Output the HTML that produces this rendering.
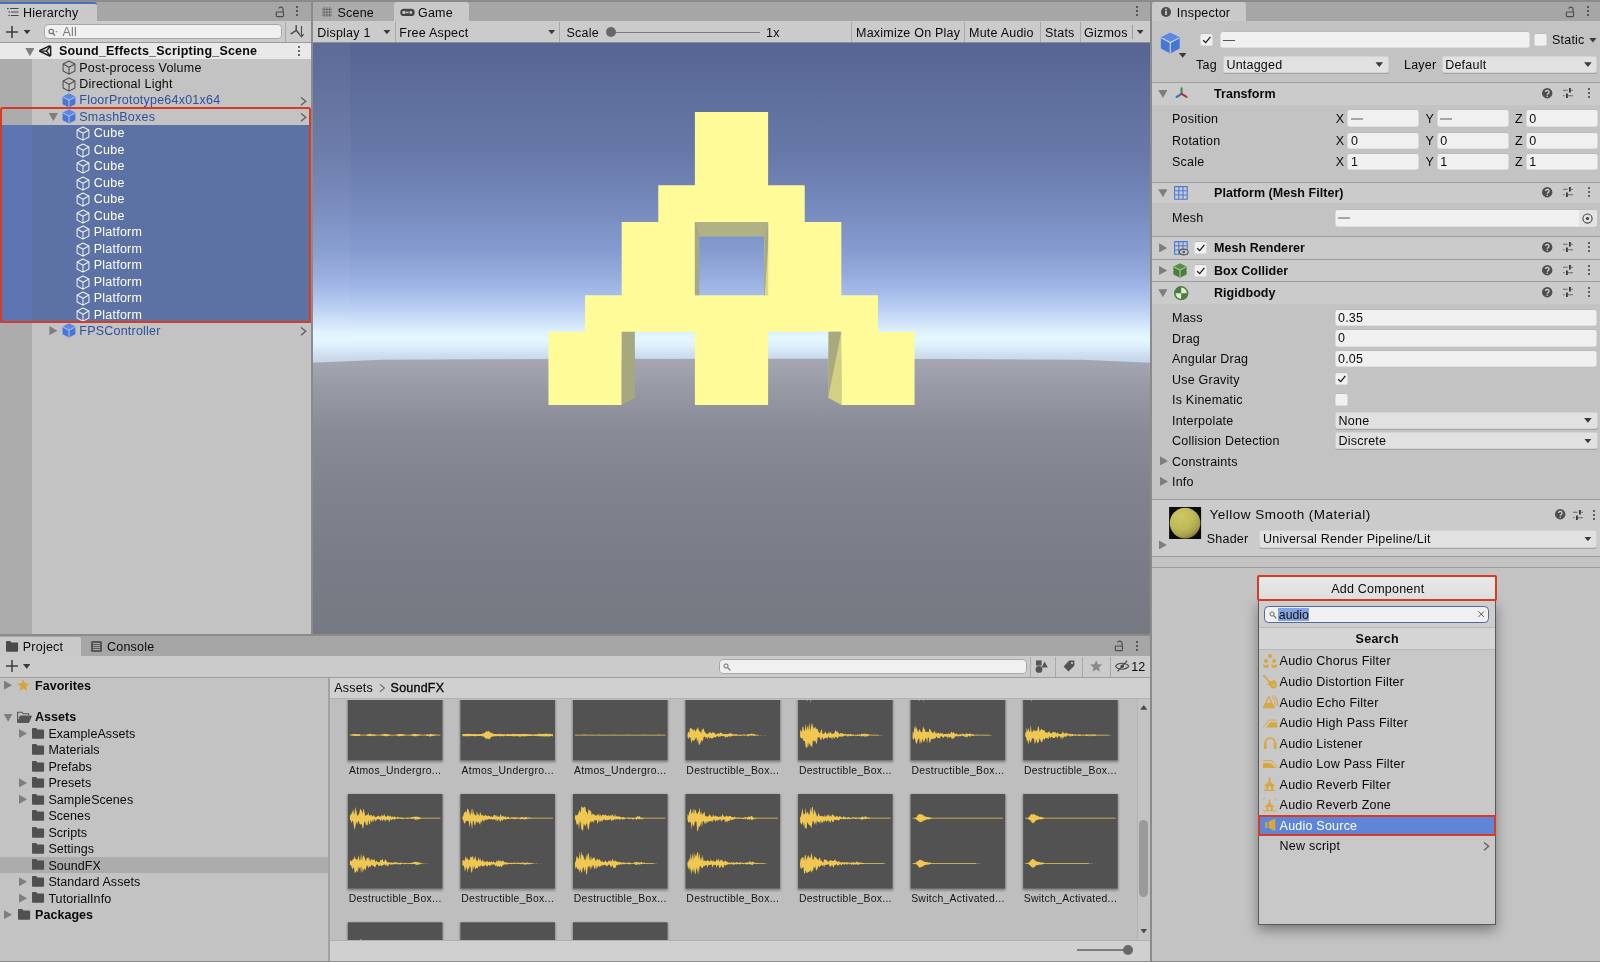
<!DOCTYPE html><html><head><meta charset="utf-8"><title>Unity</title><style>

*{box-sizing:border-box;margin:0;padding:0}
html,body{width:1600px;height:962px;overflow:hidden;background:#8b8b8b}
body{font-family:"Liberation Sans",sans-serif;font-size:12.5px;letter-spacing:.22px;color:#0a0a0a;position:relative}
.a{position:absolute}
.t{position:absolute;white-space:nowrap;line-height:16px;height:16px}
.b{font-weight:700}
.w{color:#fff}
.pf{color:#2f4f9e}
.tabbar{position:absolute;background:#a6a6a6}
.tab{position:absolute;background:#c9c9c9}
.tool{position:absolute;background:#cbcbcb}
.sep{position:absolute;width:1px;background:#a9a9a9}
.hl{position:absolute;height:1px;background:#9c9c9c}
.fld{position:absolute;background:#f0f0f0;border-radius:3px;box-shadow:inset 0 1px 0 #bcbcbc,inset 0 0 0 .6px #cdcdcd}
.dd{position:absolute;background:#e1e1e1;border-radius:3px;box-shadow:0 1px 0 #a4a4a4,inset 0 0 0 .6px #c6c6c6}
.cb{position:absolute;width:13.2px;height:13.2px;background:#f0f0f0;border-radius:2.5px;box-shadow:inset 0 1px 0 #bcbcbc,inset 0 0 0 .6px #cdcdcd}
.arr{position:absolute;width:7.6px;height:4.8px;margin:-.3px 0 0 .1px;background:#3a3a38;clip-path:polygon(0 0,100% 0,50% 100%)}
.tri-d{position:absolute;width:9.2px;height:8.1px;background:#7e7e7e;clip-path:polygon(0 0,100% 0,50% 100%)}
.tri-r{position:absolute;width:8.1px;height:9.2px;background:#7e7e7e;clip-path:polygon(0 0,100% 50%,0 100%)}
svg{position:absolute;overflow:visible}

</style></head><body><div id="root" style="position:absolute;left:0;top:0;width:1600px;height:962px;will-change:transform">
<!-- hierarchy -->
<div class="a" style="left:0;top:2px;width:311px;height:632px;background:#c3c3c3"></div>
<div class="tabbar" style="left:0;top:2px;width:311px;height:19px"></div>
<div class="tab" style="left:0;top:2px;width:97px;height:19px;border-top:2px solid #4a6fc0;border-radius:0 3px 0 0"></div>
<svg style="left:7px;top:7px" width="12" height="10" viewBox="0 0 12 10"><g stroke="#4a4a4a" stroke-width="1.1"><path d="M3 1.5H11.5M3.8 5H11.5M3.8 8.5H11.5"/></g><g fill="#4a4a4a"><rect x="0" y=".9" width="1.6" height="1.3"/><rect x="1.4" y="4.4" width="1.4" height="1.2"/><rect x="1.4" y="7.9" width="1.4" height="1.2"/></g></svg>
<div class="t " style="left:23px;top:4.8px;">Hierarchy</div>
<svg style="left:274.5px;top:4.5px" width="10" height="13" viewBox="0 0 10 13"><rect x="1.3" y="7" width="7.2" height="4.6" rx=".9" fill="none" stroke="#4c4c4c" stroke-width="1.15"/><path d="M8.1 7V4.4a2.3 2.3 0 0 0 -4.4 -.9" fill="none" stroke="#4c4c4c" stroke-width="1.15"/></svg>
<svg style="left:295.3px;top:4.300000000000001px" width="4" height="14" viewBox="-2 -7 4 14"><circle cx="0" cy="-3.95" r="1.02" fill="#3c3c3c"/><circle cx="0" cy="0" r="1.02" fill="#3c3c3c"/><circle cx="0" cy="3.95" r="1.02" fill="#3c3c3c"/></svg>
<div class="tool" style="left:0;top:21px;width:311px;height:21.5px"></div>
<div class="hl" style="left:0;top:42px;width:311px;background:#9a9a9a"></div>
<svg style="left:6px;top:26px" width="12" height="12" viewBox="0 0 12 12"><path d="M6 0V12M0 6H12" stroke="#3f3f3f" stroke-width="1.6"/></svg>
<div class="arr" style="left:23.2px;top:29.8px"></div>
<div class="fld" style="left:43.6px;top:23.7px;width:238px;height:15.8px;border-radius:4.5px;box-shadow:inset 0 0 0 1px #a8a8a8"></div>
<svg style="left:48px;top:27.5px" width="10" height="9" viewBox="0 0 10 9"><circle cx="3.2" cy="3.4" r="2.2" fill="none" stroke="#6a6a6a" stroke-width="1.1"/><path d="M4.8 5 L7 7.6" stroke="#6a6a6a" stroke-width="1.2"/><path d="M7.3 3.2h2.2l-1.1 1.3z" fill="#6a6a6a"/></svg>
<div class="t " style="left:62.5px;top:24.2px;color:#7c7c7c">All</div>
<div class="sep" style="left:285px;top:22px;height:20px"></div>
<svg style="left:290px;top:25px" width="15" height="13" viewBox="0 0 15 13"><path d="M6.2 .8V5.2M6 5.6 L1.2 8.6M6.4 5.4 L9 8.8" stroke="#4a4a4a" stroke-width="1.5" fill="none" stroke-linecap="round"/><path d="M11.5 1V11.6M9.2 9 L11.5 11.8 L13.8 9" stroke="#4a4a4a" stroke-width="1.1" fill="none"/></svg>
<div class="a" style="left:0;top:59.07px;width:32px;height:574.93px;background:#acacac"></div>
<div class="a" style="left:0;top:43px;width:311px;height:16.3px;background:#e9e9e9"></div>
<div class="tri-d" style="left:25.30px;top:48.05px"></div>
<svg style="left:39.3px;top:45.235px" width="13" height="12" viewBox="0 0 13 12"><path d="M10.6 .9 L11.6 1.6 L11.7 10.3 L10.7 11 L.9 6.4 L.9 5.5 Z" fill="none" stroke="#1d1d1d" stroke-width="1.45" stroke-linejoin="round"/><path d="M7.4 6 L11 1.5 M7.4 6 L11 10.6 M7.4 6 L1.4 6" stroke="#1d1d1d" stroke-width="1.25"/></svg>
<div class="t b" style="left:59px;top:43.23500000000001px;letter-spacing:.2px">Sound_Effects_Scripting_Scene</div>
<svg style="left:297px;top:44.135px" width="4" height="14" viewBox="-2 -7 4 14"><circle cx="0" cy="-3.95" r="1.02" fill="#3a3a3a"/><circle cx="0" cy="0" r="1.02" fill="#3a3a3a"/><circle cx="0" cy="3.95" r="1.02" fill="#3a3a3a"/></svg>
<div class="a" style="left:0;top:124.94999999999999px;width:311px;height:197.64000000000004px;background:#5c72a4"></div>
<div class="a" style="left:0;top:124.94999999999999px;width:32px;height:197.64000000000004px;background:#5d75b2"></div>
<svg style="left:61.6px;top:60.40500000000001px" width="14" height="15" viewBox="0 0 14 15"><path d="M7 1 L12.9 4 V11 L7 14.1 L1.1 11 V4 Z M1.1 4 L7 7.2 L12.9 4 M7 7.2 V14.1" fill="none" stroke="#4e4e4e" stroke-width="1.05" stroke-linejoin="round"/></svg>
<div class="t " style="left:79.3px;top:59.50500000000001px;">Post-process Volume</div>
<svg style="left:61.6px;top:76.87499999999999px" width="14" height="15" viewBox="0 0 14 15"><path d="M7 1 L12.9 4 V11 L7 14.1 L1.1 11 V4 Z M1.1 4 L7 7.2 L12.9 4 M7 7.2 V14.1" fill="none" stroke="#4e4e4e" stroke-width="1.05" stroke-linejoin="round"/></svg>
<div class="t " style="left:79.3px;top:75.975px;">Directional Light</div>
<svg style="left:61.6px;top:92.645px" width="14" height="15.00" viewBox="0 0 14 15"><path d="M7 .5 L13.4 3.8 V11.2 L7 14.6 L.6 11.2 V3.8 Z" fill="#4876d6"/><path d="M7 .5 L13.4 3.8 L7 7.2 L.6 3.8 Z" fill="#5a88e4"/><path d="M.9 4 L7 7.2 L13.1 4 M7 7.2 V14.2" fill="none" stroke="#dfe7fa" stroke-width=".75" opacity=".9"/></svg>
<div class="t pf" style="left:79.3px;top:92.445px;">FloorPrototype64x01x64</div>
<svg style="left:300.9px;top:96.845px" width="5.2" height="8.6" viewBox="0 -4.3 5.2 8.6"><path d="M0 -3.9 L4.8 0 L0 3.9" fill="none" stroke="#5e5e5e" stroke-width="1.3"/></svg>
<svg style="left:61.6px;top:109.115px" width="14" height="15.00" viewBox="0 0 14 15"><path d="M7 .5 L13.4 3.8 V11.2 L7 14.6 L.6 11.2 V3.8 Z" fill="#4876d6"/><path d="M7 .5 L13.4 3.8 L7 7.2 L.6 3.8 Z" fill="#5a88e4"/><path d="M.9 4 L7 7.2 L13.1 4 M7 7.2 V14.2" fill="none" stroke="#dfe7fa" stroke-width=".75" opacity=".9"/></svg>
<div class="t pf" style="left:79.3px;top:108.91499999999999px;">SmashBoxes</div>
<svg style="left:300.9px;top:113.315px" width="5.2" height="8.6" viewBox="0 -4.3 5.2 8.6"><path d="M0 -3.9 L4.8 0 L0 3.9" fill="none" stroke="#5e5e5e" stroke-width="1.3"/></svg>
<div class="tri-d" style="left:48.80px;top:112.96px"></div>
<svg style="left:76.1px;top:126.285px" width="14" height="15" viewBox="0 0 14 15"><path d="M7 1 L12.9 4 V11 L7 14.1 L1.1 11 V4 Z M1.1 4 L7 7.2 L12.9 4 M7 7.2 V14.1" fill="none" stroke="#eef0f6" stroke-width="1.05" stroke-linejoin="round"/></svg>
<div class="t w" style="left:93.8px;top:125.385px;">Cube</div>
<svg style="left:76.1px;top:142.75499999999997px" width="14" height="15" viewBox="0 0 14 15"><path d="M7 1 L12.9 4 V11 L7 14.1 L1.1 11 V4 Z M1.1 4 L7 7.2 L12.9 4 M7 7.2 V14.1" fill="none" stroke="#eef0f6" stroke-width="1.05" stroke-linejoin="round"/></svg>
<div class="t w" style="left:93.8px;top:141.85499999999996px;">Cube</div>
<svg style="left:76.1px;top:159.225px" width="14" height="15" viewBox="0 0 14 15"><path d="M7 1 L12.9 4 V11 L7 14.1 L1.1 11 V4 Z M1.1 4 L7 7.2 L12.9 4 M7 7.2 V14.1" fill="none" stroke="#eef0f6" stroke-width="1.05" stroke-linejoin="round"/></svg>
<div class="t w" style="left:93.8px;top:158.325px;">Cube</div>
<svg style="left:76.1px;top:175.69499999999996px" width="14" height="15" viewBox="0 0 14 15"><path d="M7 1 L12.9 4 V11 L7 14.1 L1.1 11 V4 Z M1.1 4 L7 7.2 L12.9 4 M7 7.2 V14.1" fill="none" stroke="#eef0f6" stroke-width="1.05" stroke-linejoin="round"/></svg>
<div class="t w" style="left:93.8px;top:174.79499999999996px;">Cube</div>
<svg style="left:76.1px;top:192.165px" width="14" height="15" viewBox="0 0 14 15"><path d="M7 1 L12.9 4 V11 L7 14.1 L1.1 11 V4 Z M1.1 4 L7 7.2 L12.9 4 M7 7.2 V14.1" fill="none" stroke="#eef0f6" stroke-width="1.05" stroke-linejoin="round"/></svg>
<div class="t w" style="left:93.8px;top:191.265px;">Cube</div>
<svg style="left:76.1px;top:208.63499999999996px" width="14" height="15" viewBox="0 0 14 15"><path d="M7 1 L12.9 4 V11 L7 14.1 L1.1 11 V4 Z M1.1 4 L7 7.2 L12.9 4 M7 7.2 V14.1" fill="none" stroke="#eef0f6" stroke-width="1.05" stroke-linejoin="round"/></svg>
<div class="t w" style="left:93.8px;top:207.73499999999996px;">Cube</div>
<svg style="left:76.1px;top:225.105px" width="14" height="15" viewBox="0 0 14 15"><path d="M7 1 L12.9 4 V11 L7 14.1 L1.1 11 V4 Z M1.1 4 L7 7.2 L12.9 4 M7 7.2 V14.1" fill="none" stroke="#eef0f6" stroke-width="1.05" stroke-linejoin="round"/></svg>
<div class="t w" style="left:93.8px;top:224.20499999999998px;">Platform</div>
<svg style="left:76.1px;top:241.57499999999996px" width="14" height="15" viewBox="0 0 14 15"><path d="M7 1 L12.9 4 V11 L7 14.1 L1.1 11 V4 Z M1.1 4 L7 7.2 L12.9 4 M7 7.2 V14.1" fill="none" stroke="#eef0f6" stroke-width="1.05" stroke-linejoin="round"/></svg>
<div class="t w" style="left:93.8px;top:240.67499999999995px;">Platform</div>
<svg style="left:76.1px;top:258.045px" width="14" height="15" viewBox="0 0 14 15"><path d="M7 1 L12.9 4 V11 L7 14.1 L1.1 11 V4 Z M1.1 4 L7 7.2 L12.9 4 M7 7.2 V14.1" fill="none" stroke="#eef0f6" stroke-width="1.05" stroke-linejoin="round"/></svg>
<div class="t w" style="left:93.8px;top:257.145px;">Platform</div>
<svg style="left:76.1px;top:274.51500000000004px" width="14" height="15" viewBox="0 0 14 15"><path d="M7 1 L12.9 4 V11 L7 14.1 L1.1 11 V4 Z M1.1 4 L7 7.2 L12.9 4 M7 7.2 V14.1" fill="none" stroke="#eef0f6" stroke-width="1.05" stroke-linejoin="round"/></svg>
<div class="t w" style="left:93.8px;top:273.615px;">Platform</div>
<svg style="left:76.1px;top:290.985px" width="14" height="15" viewBox="0 0 14 15"><path d="M7 1 L12.9 4 V11 L7 14.1 L1.1 11 V4 Z M1.1 4 L7 7.2 L12.9 4 M7 7.2 V14.1" fill="none" stroke="#eef0f6" stroke-width="1.05" stroke-linejoin="round"/></svg>
<div class="t w" style="left:93.8px;top:290.085px;">Platform</div>
<svg style="left:76.1px;top:307.45500000000004px" width="14" height="15" viewBox="0 0 14 15"><path d="M7 1 L12.9 4 V11 L7 14.1 L1.1 11 V4 Z M1.1 4 L7 7.2 L12.9 4 M7 7.2 V14.1" fill="none" stroke="#eef0f6" stroke-width="1.05" stroke-linejoin="round"/></svg>
<div class="t w" style="left:93.8px;top:306.555px;">Platform</div>
<svg style="left:61.6px;top:323.225px" width="14" height="15.00" viewBox="0 0 14 15"><path d="M7 .5 L13.4 3.8 V11.2 L7 14.6 L.6 11.2 V3.8 Z" fill="#4876d6"/><path d="M7 .5 L13.4 3.8 L7 7.2 L.6 3.8 Z" fill="#5a88e4"/><path d="M.9 4 L7 7.2 L13.1 4 M7 7.2 V14.2" fill="none" stroke="#dfe7fa" stroke-width=".75" opacity=".9"/></svg>
<div class="t pf" style="left:79.3px;top:323.02500000000003px;">FPSController</div>
<svg style="left:300.9px;top:327.425px" width="5.2" height="8.6" viewBox="0 -4.3 5.2 8.6"><path d="M0 -3.9 L4.8 0 L0 3.9" fill="none" stroke="#5e5e5e" stroke-width="1.3"/></svg>
<div class="tri-r" style="left:49.35px;top:326.12px"></div>
<div class="a" style="left:-.3px;top:106.7px;width:311.2px;height:216.6px;border:2.7px solid #d93a22;border-radius:2.5px"></div>
<!-- game -->
<div class="tabbar" style="left:313px;top:2px;width:837px;height:19px"></div>
<div class="a" style="left:313px;top:2px;width:81px;height:19px;background:#ababab;border-radius:3px 3px 0 0"></div>
<div class="tab" style="left:393.8px;top:2px;width:75px;height:19px;border-radius:3px 3px 0 0"></div>
<svg style="left:321.6px;top:7px" width="10" height="10" viewBox="0 0 10 10"><path d="M2.1 0V10M4.9 0V10M7.7 0V10M0 2.4H10M0 5.2H10M0 8H10" stroke="#5c5c5c" stroke-width=".75" fill="none"/></svg>
<div class="t " style="left:337.5px;top:4.8px;">Scene</div>
<svg style="left:400px;top:8px" width="15" height="9" viewBox="0 0 15 9"><rect x=".3" y=".8" width="14.4" height="7.2" rx="3.6" fill="#444"/><circle cx="4" cy="4.4" r="1.7" fill="#c9c9c9"/><circle cx="10.8" cy="4.4" r="1.4" fill="#c9c9c9"/><rect x="6.2" y="3.6" width="2.4" height="1.6" fill="#c9c9c9"/></svg>
<div class="t " style="left:418px;top:4.8px;">Game</div>
<svg style="left:1134.5px;top:4.300000000000001px" width="4" height="14" viewBox="-2 -7 4 14"><circle cx="0" cy="-3.95" r="1.02" fill="#3c3c3c"/><circle cx="0" cy="0" r="1.02" fill="#3c3c3c"/><circle cx="0" cy="3.95" r="1.02" fill="#3c3c3c"/></svg>
<div class="tool" style="left:313px;top:21px;width:837px;height:21.5px"></div>
<div class="hl" style="left:313px;top:42px;width:837px;background:#8f8f8f"></div>
<div class="t " style="left:317.2px;top:24.499999999999996px;">Display 1</div>
<div class="arr" style="left:383px;top:29.8px"></div>
<div class="sep" style="left:395px;top:22px;height:20px"></div>
<div class="t " style="left:399.3px;top:24.499999999999996px;">Free Aspect</div>
<div class="arr" style="left:547.8px;top:29.8px"></div>
<div class="sep" style="left:559px;top:22px;height:20px"></div>
<div class="t " style="left:566.5px;top:24.499999999999996px;">Scale</div>
<div class="a" style="left:611px;top:31.6px;width:149px;height:1.4px;background:#7a7a7a"></div>
<div class="a" style="left:606px;top:27.3px;width:10px;height:10px;border-radius:5px;background:#686868"></div>
<div class="t " style="left:766px;top:24.499999999999996px;">1x</div>
<div class="sep" style="left:851px;top:22px;height:20px"></div>
<div class="sep" style="left:964px;top:22px;height:20px"></div>
<div class="sep" style="left:1040px;top:22px;height:20px"></div>
<div class="sep" style="left:1079.5px;top:22px;height:20px"></div>
<div class="t " style="left:856px;top:24.499999999999996px;">Maximize On Play</div>
<div class="t " style="left:969px;top:24.499999999999996px;">Mute Audio</div>
<div class="t " style="left:1045px;top:24.499999999999996px;">Stats</div>
<div class="t " style="left:1084px;top:24.499999999999996px;">Gizmos</div>
<div class="sep" style="left:1131.5px;top:25px;height:14px;background:#9a9a9a"></div>
<div class="arr" style="left:1136.3px;top:29.8px"></div>
<svg style="left:313px;top:43px" width="837" height="591" viewBox="313 43 837 591"><defs><linearGradient id="sky" x1="0" y1="0" x2="0" y2="1"><stop offset="0.0000" stop-color="#566593"/><stop offset="0.1776" stop-color="#5f6f9e"/><stop offset="0.3489" stop-color="#6879a9"/><stop offset="0.5234" stop-color="#778bbe"/><stop offset="0.6417" stop-color="#859bcf"/><stop offset="0.7227" stop-color="#96abdd"/><stop offset="0.7757" stop-color="#a5bbe9"/><stop offset="0.8255" stop-color="#bacef3"/><stop offset="0.8692" stop-color="#cfe2fa"/><stop offset="0.9003" stop-color="#def2fe"/><stop offset="0.9221" stop-color="#e4f8ff"/><stop offset="0.9470" stop-color="#dceefa"/><stop offset="0.9720" stop-color="#cddef0"/><stop offset="1.0000" stop-color="#c2d2e5"/></linearGradient><linearGradient id="gnd" x1="0" y1="0" x2="0" y2="1"><stop offset="0.000" stop-color="#a5a7b2"/><stop offset="0.117" stop-color="#9698a3"/><stop offset="0.262" stop-color="#898c96"/><stop offset="0.479" stop-color="#80838d"/><stop offset="0.732" stop-color="#7a7d87"/><stop offset="1.000" stop-color="#767982"/></linearGradient></defs><rect x="313" y="43" width="837" height="321" fill="url(#sky)"/><path d="M313 362.7 L382 359.7 Q731.5 357.6 1082 359.7 L1150 362.7 V634 H313 Z" fill="url(#gnd)"/><rect x="313" y="43" width="37.5" height="318" fill="#fff" opacity=".04"/><path d="M694.89 112.1 H768.11 V185.32 H804.72 V221.93 H841.33 V295.15 H877.94 V331.76 H914.55 V404.98 H841.33 V331.76 H768.11 V404.98 H694.89 V331.76 H621.67 V404.98 H548.45 V331.76 H585.06 V295.15 H621.67 V221.93 H658.28 V185.32 H694.89 Z M694.89 221.93 V295.15 H768.11 V221.93 Z" fill="#fffb98" fill-rule="evenodd"/><path d="M694.89 221.93 H768.11 L764.51 236.53 H699.29 Z" fill="#b0b184"/><path d="M694.89 221.93 L699.29 236.53 V295.15 H694.89 Z" fill="#a7a984"/><path d="M768.11 221.93 L764.51 236.53 L763.91 295.15 H768.11 Z" fill="#d9d78c"/><path d="M764.51 236.53 L768.11 221.93 V245.93 L764.71 295.15 H763.91 Z" fill="#a7a984"/><path d="M621.67 331.76 H634.87 V397.98 L621.67 404.98 Z" fill="#a6a880"/><path d="M841.33 331.76 H828.5300000000001 L828.13 397.78000000000003 L841.33 404.98 Z" fill="#d3d084"/><path d="M828.5300000000001 331.76 H841.33 L828.13 397.78000000000003 Z" fill="#a8a980"/></svg>
<!-- inspector -->
<div class="a" style="left:1152.3px;top:2px;width:447.70000000000005px;height:958.5px;background:#c3c3c3"></div>
<div class="tabbar" style="left:1152.3px;top:2px;width:447.70000000000005px;height:19px"></div>
<div class="tab" style="left:1152.3px;top:2px;width:94px;height:19px;border-radius:3px 3px 0 0"></div>
<svg style="left:1161px;top:7px" width="10" height="10" viewBox="0 0 10 10"><circle cx="5" cy="5" r="5" fill="#4b4b4b"/><rect x="4.2" y="4" width="1.7" height="4" fill="#d0d0d0"/><rect x="4.2" y="1.7" width="1.7" height="1.6" fill="#d0d0d0"/></svg>
<div class="t " style="left:1176.8px;top:4.8px;">Inspector</div>
<svg style="left:1565px;top:4.5px" width="10" height="13" viewBox="0 0 10 13"><rect x="1.3" y="7" width="7.2" height="4.6" rx=".9" fill="none" stroke="#4c4c4c" stroke-width="1.15"/><path d="M8.1 7V4.4a2.3 2.3 0 0 0 -4.4 -.9" fill="none" stroke="#4c4c4c" stroke-width="1.15"/></svg>
<svg style="left:1586px;top:4.300000000000001px" width="4" height="14" viewBox="-2 -7 4 14"><circle cx="0" cy="-3.95" r="1.02" fill="#3c3c3c"/><circle cx="0" cy="0" r="1.02" fill="#3c3c3c"/><circle cx="0" cy="3.95" r="1.02" fill="#3c3c3c"/></svg>
<svg style="left:1159.6px;top:32.2px" width="20.6" height="22.07" viewBox="0 0 14 15"><path d="M7 .5 L13.4 3.8 V11.2 L7 14.6 L.6 11.2 V3.8 Z" fill="#4876d6"/><path d="M7 .5 L13.4 3.8 L7 7.2 L.6 3.8 Z" fill="#5a88e4"/><path d="M.9 4 L7 7.2 L13.1 4 M7 7.2 V14.2" fill="none" stroke="#dfe7fa" stroke-width=".75" opacity=".9"/></svg>
<div class="arr" style="left:1178.8px;top:53.2px"></div>
<div class="cb" style="left:1199.6px;top:33.3px"></div>
<svg style="left:1199.6px;top:33.3px" width="13.5" height="13.5" viewBox="0 0 13.5 13.5"><path d="M3.2 7.2 L5.7 9.6 L10.4 3.8" fill="none" stroke="#1c1c1c" stroke-width="1.3"/></svg>
<div class="fld" style="left:1220px;top:31.4px;width:309.5px;height:17px"></div>
<div class="a" style="left:1223px;top:40.4px;width:12px;height:1.1px;background:#555"></div>
<div class="cb" style="left:1534px;top:33.3px"></div>
<div class="t " style="left:1552px;top:32.400000000000006px;">Static</div>
<div class="arr" style="left:1589px;top:38px"></div>
<div class="t " style="left:1196px;top:57.10000000000001px;">Tag</div>
<div class="dd" style="left:1222.5px;top:56.2px;width:166px;height:17.2px"></div>
<div class="t " style="left:1226.4px;top:56.900000000000006px;">Untagged</div>
<div class="arr" style="left:1375.4px;top:62.6px"></div>
<div class="t " style="left:1404px;top:57.10000000000001px;">Layer</div>
<div class="dd" style="left:1441.6px;top:56.2px;width:155.6px;height:17.2px"></div>
<div class="t " style="left:1445.2px;top:56.900000000000006px;">Default</div>
<div class="arr" style="left:1584px;top:62.6px"></div>
<div class="hl" style="left:1152.3px;top:81.8px;width:447.70000000000005px;background:#9d9d9d"></div>
<div class="a" style="left:1152.3px;top:82.8px;width:447.70000000000005px;height:21.799999999999997px;background:#cbcbcb"></div>
<div class="tri-d" style="left:1158.30px;top:89.90px"></div>
<svg style="left:1174.6px;top:87.19999999999999px" width="13" height="12" viewBox="0 0 13 12"><path d="M6.6 6.8V1.4" stroke="#3a9140" stroke-width="2.1" stroke-linecap="round"/><path d="M6.6 6.8 L1.6 10" stroke="#3f6fd8" stroke-width="2.1" stroke-linecap="round"/><path d="M6.6 6.8 L11.6 9.8" stroke="#b92f28" stroke-width="2.1" stroke-linecap="round"/></svg>
<div class="t b" style="left:1214px;top:86.04999999999998px;letter-spacing:.05px">Transform</div>
<svg style="left:1542.3999999999999px;top:87.84999999999998px" width="10.4" height="10.4" viewBox="0 0 10.4 10.4"><circle cx="5.2" cy="5.2" r="5.2" fill="#4e4e4e"/><path d="M3.5 4.1a1.75 1.75 0 1 1 2.7 1.45c-.6.4-.9.6-.9 1.3" fill="none" stroke="#d2d2d2" stroke-width="1.35"/><circle cx="5.25" cy="8.3" r=".8" fill="#d2d2d2"/></svg>
<svg style="left:1563.2px;top:87.94999999999999px" width="10" height="10" viewBox="0 0 10 10"><path d="M0 2.3H4.6M8.2 2.3H10M0 7.7H1.6M4.8 7.7H10" stroke="#6a6a6a" stroke-width="1.1"/><path d="M6.9 0V4.6M3.9 5.6V9.9" stroke="#2e2e2e" stroke-width="1.7"/></svg>
<svg style="left:1587px;top:86.04999999999998px" width="4" height="14" viewBox="-2 -7 4 14"><circle cx="0" cy="-3.95" r="1.02" fill="#3c3c3c"/><circle cx="0" cy="0" r="1.02" fill="#3c3c3c"/><circle cx="0" cy="3.95" r="1.02" fill="#3c3c3c"/></svg>
<div class="t " style="left:1172px;top:110.5px;">Position</div>
<div class="t " style="left:1335.8px;top:110.5px;">X</div>
<div class="fld" style="left:1347.3px;top:109.19999999999999px;width:72px;height:17.8px"></div>
<div class="a" style="left:1350.7px;top:117.89999999999999px;width:12px;height:1.7px;background:#a6a6a6"></div>
<div class="t " style="left:1425.6px;top:110.5px;">Y</div>
<div class="fld" style="left:1436.6px;top:109.19999999999999px;width:72px;height:17.8px"></div>
<div class="a" style="left:1440.0px;top:117.89999999999999px;width:12px;height:1.7px;background:#a6a6a6"></div>
<div class="t " style="left:1515px;top:110.5px;">Z</div>
<div class="fld" style="left:1525.6px;top:109.19999999999999px;width:72px;height:17.8px"></div>
<div class="t " style="left:1529.1999999999998px;top:110.5px;">0</div>
<div class="t " style="left:1172px;top:132.99999999999997px;">Rotation</div>
<div class="t " style="left:1335.8px;top:132.99999999999997px;">X</div>
<div class="fld" style="left:1347.3px;top:131.7px;width:72px;height:17.8px"></div>
<div class="t " style="left:1350.8999999999999px;top:132.99999999999997px;">0</div>
<div class="t " style="left:1425.6px;top:132.99999999999997px;">Y</div>
<div class="fld" style="left:1436.6px;top:131.7px;width:72px;height:17.8px"></div>
<div class="t " style="left:1440.1999999999998px;top:132.99999999999997px;">0</div>
<div class="t " style="left:1515px;top:132.99999999999997px;">Z</div>
<div class="fld" style="left:1525.6px;top:131.7px;width:72px;height:17.8px"></div>
<div class="t " style="left:1529.1999999999998px;top:132.99999999999997px;">0</div>
<div class="t " style="left:1172px;top:153.79999999999998px;">Scale</div>
<div class="t " style="left:1335.8px;top:153.79999999999998px;">X</div>
<div class="fld" style="left:1347.3px;top:152.5px;width:72px;height:17.8px"></div>
<div class="t " style="left:1350.8999999999999px;top:153.79999999999998px;">1</div>
<div class="t " style="left:1425.6px;top:153.79999999999998px;">Y</div>
<div class="fld" style="left:1436.6px;top:152.5px;width:72px;height:17.8px"></div>
<div class="t " style="left:1440.1999999999998px;top:153.79999999999998px;">1</div>
<div class="t " style="left:1515px;top:153.79999999999998px;">Z</div>
<div class="fld" style="left:1525.6px;top:152.5px;width:72px;height:17.8px"></div>
<div class="t " style="left:1529.1999999999998px;top:153.79999999999998px;">1</div>
<div class="hl" style="left:1152.3px;top:181.9px;width:447.70000000000005px;background:#9d9d9d"></div>
<div class="a" style="left:1152.3px;top:182.9px;width:447.70000000000005px;height:20.299999999999983px;background:#cbcbcb"></div>
<div class="tri-d" style="left:1158.30px;top:189.25px"></div>
<svg style="left:1173.5px;top:186.2px" width="14" height="14" viewBox="0 0 14 14"><path d="M.6 .6H13.2V13.2H.6ZM4.8 .6V13.2M9 .6V13.2M.6 4.8H13.2M.6 9H13.2" fill="none" stroke="#4a7ad6" stroke-width="1.1"/></svg>
<div class="t b" style="left:1214px;top:185.4px;letter-spacing:.05px">Platform (Mesh Filter)</div>
<svg style="left:1542.3999999999999px;top:187.20000000000005px" width="10.4" height="10.4" viewBox="0 0 10.4 10.4"><circle cx="5.2" cy="5.2" r="5.2" fill="#4e4e4e"/><path d="M3.5 4.1a1.75 1.75 0 1 1 2.7 1.45c-.6.4-.9.6-.9 1.3" fill="none" stroke="#d2d2d2" stroke-width="1.35"/><circle cx="5.25" cy="8.3" r=".8" fill="#d2d2d2"/></svg>
<svg style="left:1563.2px;top:187.3px" width="10" height="10" viewBox="0 0 10 10"><path d="M0 2.3H4.6M8.2 2.3H10M0 7.7H1.6M4.8 7.7H10" stroke="#6a6a6a" stroke-width="1.1"/><path d="M6.9 0V4.6M3.9 5.6V9.9" stroke="#2e2e2e" stroke-width="1.7"/></svg>
<svg style="left:1587px;top:185.40000000000003px" width="4" height="14" viewBox="-2 -7 4 14"><circle cx="0" cy="-3.95" r="1.02" fill="#3c3c3c"/><circle cx="0" cy="0" r="1.02" fill="#3c3c3c"/><circle cx="0" cy="3.95" r="1.02" fill="#3c3c3c"/></svg>
<div class="t " style="left:1172px;top:210.39999999999998px;">Mesh</div>
<div class="fld" style="left:1334.8px;top:209.1px;width:262.4px;height:17.5px"></div>
<div class="a" style="left:1579.4px;top:210.1px;width:17.2px;height:15.5px;background:#e3e3e3;border-radius:0 2px 2px 0"></div>
<div class="a" style="left:1338px;top:217.4px;width:12px;height:1.7px;background:#a6a6a6"></div>
<svg style="left:1582.4px;top:212.6px" width="11" height="11" viewBox="0 0 11 11"><circle cx="5.5" cy="5.5" r="4.6" fill="none" stroke="#3e3e3e" stroke-width="1.05"/><circle cx="5.5" cy="5.5" r="1.6" fill="#3e3e3e"/></svg>
<div class="hl" style="left:1152.3px;top:235.9px;width:447.70000000000005px;background:#9d9d9d"></div>
<div class="a" style="left:1152.3px;top:236.9px;width:447.70000000000005px;height:22.099999999999994px;background:#cbcbcb"></div>
<div class="tri-r" style="left:1159.15px;top:243.30px"></div>
<svg style="left:1173.5px;top:240.79999999999998px" width="14" height="14" viewBox="0 0 14 14"><path d="M.6 .6H13.2V13.2H.6ZM4.8 .6V13.2M9 .6V13.2M.6 4.8H13.2M.6 9H13.2" fill="none" stroke="#4a7ad6" stroke-width="1.1"/><ellipse cx="9.8" cy="11" rx="4.4" ry="2.9" fill="#cbcbcb" stroke="#555" stroke-width="1.1"/><circle cx="9.8" cy="11" r="1.3" fill="#555"/></svg>
<div class="cb" style="left:1193.5px;top:241.1px"></div>
<svg style="left:1193.5px;top:241.1px" width="13.5" height="13.5" viewBox="0 0 13.5 13.5"><path d="M3.2 7.2 L5.7 9.6 L10.4 3.8" fill="none" stroke="#1c1c1c" stroke-width="1.3"/></svg>
<div class="t b" style="left:1214px;top:240.29999999999998px;letter-spacing:.05px">Mesh Renderer</div>
<svg style="left:1542.3999999999999px;top:242.10000000000002px" width="10.4" height="10.4" viewBox="0 0 10.4 10.4"><circle cx="5.2" cy="5.2" r="5.2" fill="#4e4e4e"/><path d="M3.5 4.1a1.75 1.75 0 1 1 2.7 1.45c-.6.4-.9.6-.9 1.3" fill="none" stroke="#d2d2d2" stroke-width="1.35"/><circle cx="5.25" cy="8.3" r=".8" fill="#d2d2d2"/></svg>
<svg style="left:1563.2px;top:242.2px" width="10" height="10" viewBox="0 0 10 10"><path d="M0 2.3H4.6M8.2 2.3H10M0 7.7H1.6M4.8 7.7H10" stroke="#6a6a6a" stroke-width="1.1"/><path d="M6.9 0V4.6M3.9 5.6V9.9" stroke="#2e2e2e" stroke-width="1.7"/></svg>
<svg style="left:1587px;top:240.3px" width="4" height="14" viewBox="-2 -7 4 14"><circle cx="0" cy="-3.95" r="1.02" fill="#3c3c3c"/><circle cx="0" cy="0" r="1.02" fill="#3c3c3c"/><circle cx="0" cy="3.95" r="1.02" fill="#3c3c3c"/></svg>
<div class="hl" style="left:1152.3px;top:258.5px;width:447.70000000000005px;background:#9d9d9d"></div>
<div class="a" style="left:1152.3px;top:259.5px;width:447.70000000000005px;height:22.100000000000023px;background:#cbcbcb"></div>
<div class="tri-r" style="left:1159.15px;top:265.90px"></div>
<svg style="left:1173.3px;top:263.0px" width="14" height="15" viewBox="0 0 14 15"><path d="M7 .4 L13.6 3.7 V11.4 L7 14.8 L.4 11.4 V3.7 Z" fill="#4b7e3d"/><path d="M7 .4 L13.6 3.7 L7 7.2 L.4 3.7 Z" fill="#5a8f4a"/><path d="M.8 3.9 L7 7.2 L13.2 3.9 M7 7.2 V14.4" fill="none" stroke="#dbe9d5" stroke-width=".8" opacity=".9"/></svg>
<div class="cb" style="left:1193.5px;top:263.70000000000005px"></div>
<svg style="left:1193.5px;top:263.70000000000005px" width="13.5" height="13.5" viewBox="0 0 13.5 13.5"><path d="M3.2 7.2 L5.7 9.6 L10.4 3.8" fill="none" stroke="#1c1c1c" stroke-width="1.3"/></svg>
<div class="t b" style="left:1214px;top:262.90000000000003px;letter-spacing:.05px">Box Collider</div>
<svg style="left:1542.3999999999999px;top:264.70000000000005px" width="10.4" height="10.4" viewBox="0 0 10.4 10.4"><circle cx="5.2" cy="5.2" r="5.2" fill="#4e4e4e"/><path d="M3.5 4.1a1.75 1.75 0 1 1 2.7 1.45c-.6.4-.9.6-.9 1.3" fill="none" stroke="#d2d2d2" stroke-width="1.35"/><circle cx="5.25" cy="8.3" r=".8" fill="#d2d2d2"/></svg>
<svg style="left:1563.2px;top:264.8px" width="10" height="10" viewBox="0 0 10 10"><path d="M0 2.3H4.6M8.2 2.3H10M0 7.7H1.6M4.8 7.7H10" stroke="#6a6a6a" stroke-width="1.1"/><path d="M6.9 0V4.6M3.9 5.6V9.9" stroke="#2e2e2e" stroke-width="1.7"/></svg>
<svg style="left:1587px;top:262.90000000000003px" width="4" height="14" viewBox="-2 -7 4 14"><circle cx="0" cy="-3.95" r="1.02" fill="#3c3c3c"/><circle cx="0" cy="0" r="1.02" fill="#3c3c3c"/><circle cx="0" cy="3.95" r="1.02" fill="#3c3c3c"/></svg>
<div class="hl" style="left:1152.3px;top:281.1px;width:447.70000000000005px;background:#9d9d9d"></div>
<div class="a" style="left:1152.3px;top:282.1px;width:447.70000000000005px;height:21.69999999999999px;background:#cbcbcb"></div>
<div class="tri-d" style="left:1158.30px;top:289.15px"></div>
<svg style="left:1173.6px;top:285.6px" width="14.4" height="14.4" viewBox="0 0 14.4 14.4"><circle cx="7.2" cy="7.2" r="6.4" fill="#e3ebdf" stroke="#4a7f3c" stroke-width="1.5"/><path d="M7.2 7.2 V.8 A6.4 6.4 0 0 0 .8 7.2 Z" fill="#4a7f3c"/><path d="M7.2 7.2 V13.6 A6.4 6.4 0 0 0 13.6 7.2 Z" fill="#4a7f3c"/></svg>
<div class="t b" style="left:1214px;top:285.30000000000007px;letter-spacing:.05px">Rigidbody</div>
<svg style="left:1542.3999999999999px;top:287.1000000000001px" width="10.4" height="10.4" viewBox="0 0 10.4 10.4"><circle cx="5.2" cy="5.2" r="5.2" fill="#4e4e4e"/><path d="M3.5 4.1a1.75 1.75 0 1 1 2.7 1.45c-.6.4-.9.6-.9 1.3" fill="none" stroke="#d2d2d2" stroke-width="1.35"/><circle cx="5.25" cy="8.3" r=".8" fill="#d2d2d2"/></svg>
<svg style="left:1563.2px;top:287.20000000000005px" width="10" height="10" viewBox="0 0 10 10"><path d="M0 2.3H4.6M8.2 2.3H10M0 7.7H1.6M4.8 7.7H10" stroke="#6a6a6a" stroke-width="1.1"/><path d="M6.9 0V4.6M3.9 5.6V9.9" stroke="#2e2e2e" stroke-width="1.7"/></svg>
<svg style="left:1587px;top:285.30000000000007px" width="4" height="14" viewBox="-2 -7 4 14"><circle cx="0" cy="-3.95" r="1.02" fill="#3c3c3c"/><circle cx="0" cy="0" r="1.02" fill="#3c3c3c"/><circle cx="0" cy="3.95" r="1.02" fill="#3c3c3c"/></svg>
<div class="t " style="left:1172px;top:309.99999999999994px;">Mass</div>
<div class="t " style="left:1172px;top:330.49999999999994px;">Drag</div>
<div class="t " style="left:1172px;top:350.99999999999994px;">Angular Drag</div>
<div class="t " style="left:1172px;top:371.49999999999994px;">Use Gravity</div>
<div class="t " style="left:1172px;top:391.99999999999994px;">Is Kinematic</div>
<div class="t " style="left:1172px;top:412.49999999999994px;">Interpolate</div>
<div class="t " style="left:1172px;top:432.99999999999994px;">Collision Detection</div>
<div class="t " style="left:1172px;top:453.49999999999994px;">Constraints</div>
<div class="t " style="left:1172px;top:473.99999999999994px;">Info</div>
<div class="fld" style="left:1334.8px;top:308.65px;width:262.4px;height:17.5px"></div>
<div class="t " style="left:1338px;top:309.9px;">0.35</div>
<div class="fld" style="left:1334.8px;top:329.15px;width:262.4px;height:17.5px"></div>
<div class="t " style="left:1338px;top:330.4px;">0</div>
<div class="fld" style="left:1334.8px;top:349.65px;width:262.4px;height:17.5px"></div>
<div class="t " style="left:1338px;top:350.9px;">0.05</div>
<div class="cb" style="left:1335px;top:372.29999999999995px"></div>
<svg style="left:1335px;top:372.2px" width="13.5" height="13.5" viewBox="0 0 13.5 13.5"><path d="M3.2 7.2 L5.7 9.6 L10.4 3.8" fill="none" stroke="#1c1c1c" stroke-width="1.3"/></svg>
<div class="cb" style="left:1335px;top:392.79999999999995px"></div>
<div class="dd" style="left:1334.8px;top:411.59999999999997px;width:262.8px;height:17.2px"></div>
<div class="t " style="left:1338.6px;top:412.7px;">None</div>
<div class="arr" style="left:1584px;top:418.29999999999995px"></div>
<div class="dd" style="left:1334.8px;top:432.09999999999997px;width:262.8px;height:17.2px"></div>
<div class="t " style="left:1338.6px;top:433.2px;">Discrete</div>
<div class="arr" style="left:1584px;top:438.79999999999995px"></div>
<div class="tri-r" style="left:1159.95px;top:456.30px"></div>
<div class="tri-r" style="left:1159.95px;top:476.80px"></div>
<div class="hl" style="left:1152.3px;top:499px;width:447.70000000000005px;background:#9d9d9d"></div>
<div class="a" style="left:1152.3px;top:500px;width:447.70000000000005px;height:56px;background:#cbcbcb"></div>
<svg style="left:1168.9px;top:506.9px" width="32.2" height="32" viewBox="0 0 33 33"><defs><radialGradient id="sph" cx=".36" cy=".28" r=".82"><stop offset="0" stop-color="#cdc863"/><stop offset=".5" stop-color="#bfba58"/><stop offset=".78" stop-color="#a6a14a"/><stop offset="1" stop-color="#6a672f"/></radialGradient></defs><rect width="33" height="33" fill="#0b0b0b"/><circle cx="16.5" cy="16.6" r="15.8" fill="url(#sph)"/></svg>
<div class="t " style="left:1209.6px;top:507.2px;font-size:13.5px;letter-spacing:.48px">Yellow Smooth (Material)</div>
<svg style="left:1555.3999999999999px;top:509.40000000000003px" width="10.4" height="10.4" viewBox="0 0 10.4 10.4"><circle cx="5.2" cy="5.2" r="5.2" fill="#4e4e4e"/><path d="M3.5 4.1a1.75 1.75 0 1 1 2.7 1.45c-.6.4-.9.6-.9 1.3" fill="none" stroke="#d2d2d2" stroke-width="1.35"/><circle cx="5.25" cy="8.3" r=".8" fill="#d2d2d2"/></svg>
<svg style="left:1572.8px;top:509.6px" width="10" height="10" viewBox="0 0 10 10"><path d="M0 2.3H4.6M8.2 2.3H10M0 7.7H1.6M4.8 7.7H10" stroke="#6a6a6a" stroke-width="1.1"/><path d="M6.9 0V4.6M3.9 5.6V9.9" stroke="#2e2e2e" stroke-width="1.7"/></svg>
<svg style="left:1591.6px;top:507.6px" width="4" height="14" viewBox="-2 -7 4 14"><circle cx="0" cy="-3.95" r="1.02" fill="#3c3c3c"/><circle cx="0" cy="0" r="1.02" fill="#3c3c3c"/><circle cx="0" cy="3.95" r="1.02" fill="#3c3c3c"/></svg>
<div class="t " style="left:1206.8px;top:531.1px;">Shader</div>
<div class="dd" style="left:1259px;top:530.2px;width:338.2px;height:17.4px"></div>
<div class="t " style="left:1263px;top:530.8000000000001px;">Universal Render Pipeline/Lit</div>
<div class="arr" style="left:1584px;top:536.8px"></div>
<div class="tri-r" style="left:1158.75px;top:540.30px"></div>
<div class="hl" style="left:1152.3px;top:556px;width:447.70000000000005px;background:#9d9d9d"></div>
<div class="hl" style="left:1152.3px;top:567px;width:447.70000000000005px;background:#9d9d9d"></div>
<!-- project -->
<div class="a" style="left:0;top:636px;width:1150px;height:324.5px;background:#c3c3c3"></div>
<div class="tabbar" style="left:0;top:636px;width:1150px;height:20px"></div>
<div class="tab" style="left:0;top:637px;width:81px;height:19px;border-radius:0 3px 0 0"></div>
<svg style="left:5.8px;top:640.8000000000001px" width="12.1" height="10.8" viewBox="0 0 13 11.4"><path d="M0 .9Q0 0 .9 0H4.6L5.8 1.6H12.1Q13 1.6 13 2.5V10.5Q13 11.4 12.1 11.4H.9Q0 11.4 0 10.5Z" fill="#4a4a4a"/></svg>
<div class="t " style="left:22.8px;top:639.1px;">Project</div>
<svg style="left:91.4px;top:641.4px" width="11" height="11" viewBox="0 0 11 11"><rect x="0" y="0" width="11" height="11" rx="1.6" fill="#555"/><path d="M2 2.6H9M2 4.6H9M2 6.6H9M2 8.6H9" stroke="#b9b9b9" stroke-width=".9"/></svg>
<div class="t " style="left:107px;top:639.1px;">Console</div>
<svg style="left:1113.6px;top:638.9px" width="10" height="13" viewBox="0 0 10 13"><rect x="1.3" y="7" width="7.2" height="4.6" rx=".9" fill="none" stroke="#4c4c4c" stroke-width="1.15"/><path d="M8.1 7V4.4a2.3 2.3 0 0 0 -4.4 -.9" fill="none" stroke="#4c4c4c" stroke-width="1.15"/></svg>
<svg style="left:1134.5px;top:638.8px" width="4" height="14" viewBox="-2 -7 4 14"><circle cx="0" cy="-3.95" r="1.02" fill="#3c3c3c"/><circle cx="0" cy="0" r="1.02" fill="#3c3c3c"/><circle cx="0" cy="3.95" r="1.02" fill="#3c3c3c"/></svg>
<div class="tool" style="left:0;top:656px;width:1150px;height:21px"></div>
<div class="hl" style="left:0;top:677px;width:1150px;background:#9d9d9d"></div>
<svg style="left:6px;top:660px" width="12" height="12" viewBox="0 0 12 12"><path d="M6 0V12M0 6H12" stroke="#3f3f3f" stroke-width="1.5"/></svg>
<div class="arr" style="left:22.8px;top:664.2px"></div>
<div class="fld" style="left:718.6px;top:659px;width:308px;height:15.2px;border-radius:4.5px;box-shadow:inset 0 0 0 1px #a8a8a8"></div>
<svg style="left:723.4px;top:663px" width="8" height="8" viewBox="0 0 8 8"><circle cx="3" cy="3" r="2.1" fill="none" stroke="#6a6a6a" stroke-width="1"/><path d="M4.6 4.6 L7.4 7.4" stroke="#6a6a6a" stroke-width="1.2"/></svg>
<div class="sep" style="left:1029.6px;top:657px;height:20px"></div>
<div class="sep" style="left:1055.4px;top:657px;height:20px"></div>
<div class="sep" style="left:1082.2px;top:657px;height:20px"></div>
<div class="sep" style="left:1109.6px;top:657px;height:20px"></div>
<svg style="left:1035.4px;top:659.6px" width="13" height="13" viewBox="0 0 13 13"><rect x="1" y=".4" width="5.6" height="5.2" fill="#555"/><circle cx="4" cy="9.4" r="3.4" fill="#555"/><path d="M9.6 1.6 L12.8 7.6H6.6Z" fill="#555"/></svg>
<svg style="left:1062.6px;top:660.4px" width="12" height="12" viewBox="0 0 12 12"><path d="M6.2 .6H11.4V5.8L5.4 11.6L.6 6.6Z" fill="#555"/><circle cx="9" cy="3" r="1" fill="#cbcbcb"/></svg>
<svg style="left:1089.6px;top:660.2px" width="12.4" height="12" viewBox="0 0 12.4 12"><path d="M6.2 .2 L7.9 4.3 L12.3 4.6 L8.9 7.4 L10 11.8 L6.2 9.4 L2.4 11.8 L3.5 7.4 L.1 4.6 L4.5 4.3 Z" fill="#8a8a8a"/></svg>
<svg style="left:1114.6px;top:660px" width="14.6" height="12" viewBox="0 0 14.6 12"><path d="M.6 6.2C3 2.4 10.6 2 13.8 6.2C10.6 10.4 3 10 .6 6.2Z" fill="none" stroke="#4a4a4a" stroke-width="1.1"/><circle cx="7.2" cy="6.2" r="1.7" fill="#4a4a4a"/><path d="M2.6 11.4 L12.2 .6" stroke="#4a4a4a" stroke-width="1.2"/></svg>
<div class="t " style="left:1131.2px;top:658.6px;">12</div>
<div class="a" style="left:0;top:857.16px;width:328.4px;height:16.2px;background:#acacac"></div>
<div class="tri-r" style="left:3.85px;top:680.60px"></div>
<svg style="left:17.2px;top:678.6px" width="12.6" height="12.2" viewBox="0 0 12.4 12"><path d="M6.2 .2 L7.9 4.3 L12.3 4.6 L8.9 7.4 L10 11.8 L6.2 9.4 L2.4 11.8 L3.5 7.4 L.1 4.6 L4.5 4.3 Z" fill="#dba43a"/></svg>
<div class="t b" style="left:35px;top:677.6000000000001px;letter-spacing:.05px">Favorites</div>
<div class="tri-d" style="left:3.50px;top:713.55px"></div>
<svg style="left:16.8px;top:711px" width="15" height="12" viewBox="0 0 15 12"><path d="M.6 11V1.2H5l1.2 1.6H11.6V4" fill="none" stroke="#555" stroke-width="1.1"/><path d="M.6 11.4 L3.2 5H14.4L11.8 11.4Z" fill="#555" stroke="#555" stroke-width="1"/></svg>
<div class="t b" style="left:35px;top:709.4000000000001px;letter-spacing:.05px">Assets</div>
<div class="tri-r" style="left:3.85px;top:910.07px"></div>
<svg style="left:17.6px;top:908.87px" width="12.1" height="10.8" viewBox="0 0 13 11.4"><path d="M0 .9Q0 0 .9 0H4.6L5.8 1.6H12.1Q13 1.6 13 2.5V10.5Q13 11.4 12.1 11.4H.9Q0 11.4 0 10.5Z" fill="#505050"/></svg>
<div class="t b" style="left:35px;top:907.07px;letter-spacing:.05px">Packages</div>
<div class="tri-r" style="left:18.95px;top:728.90px"></div>
<svg style="left:31.8px;top:727.7px" width="12.1" height="10.8" viewBox="0 0 13 11.4"><path d="M0 .9Q0 0 .9 0H4.6L5.8 1.6H12.1Q13 1.6 13 2.5V10.5Q13 11.4 12.1 11.4H.9Q0 11.4 0 10.5Z" fill="#505050"/></svg>
<div class="t " style="left:48.4px;top:725.9000000000001px;letter-spacing:.06px">ExampleAssets</div>
<svg style="left:31.8px;top:744.1700000000001px" width="12.1" height="10.8" viewBox="0 0 13 11.4"><path d="M0 .9Q0 0 .9 0H4.6L5.8 1.6H12.1Q13 1.6 13 2.5V10.5Q13 11.4 12.1 11.4H.9Q0 11.4 0 10.5Z" fill="#505050"/></svg>
<div class="t " style="left:48.4px;top:742.3700000000001px;letter-spacing:.06px">Materials</div>
<svg style="left:31.8px;top:760.6400000000001px" width="12.1" height="10.8" viewBox="0 0 13 11.4"><path d="M0 .9Q0 0 .9 0H4.6L5.8 1.6H12.1Q13 1.6 13 2.5V10.5Q13 11.4 12.1 11.4H.9Q0 11.4 0 10.5Z" fill="#505050"/></svg>
<div class="t " style="left:48.4px;top:758.8400000000001px;letter-spacing:.06px">Prefabs</div>
<div class="tri-r" style="left:18.95px;top:778.31px"></div>
<svg style="left:31.8px;top:777.11px" width="12.1" height="10.8" viewBox="0 0 13 11.4"><path d="M0 .9Q0 0 .9 0H4.6L5.8 1.6H12.1Q13 1.6 13 2.5V10.5Q13 11.4 12.1 11.4H.9Q0 11.4 0 10.5Z" fill="#505050"/></svg>
<div class="t " style="left:48.4px;top:775.3100000000001px;letter-spacing:.06px">Presets</div>
<div class="tri-r" style="left:18.95px;top:794.78px"></div>
<svg style="left:31.8px;top:793.58px" width="12.1" height="10.8" viewBox="0 0 13 11.4"><path d="M0 .9Q0 0 .9 0H4.6L5.8 1.6H12.1Q13 1.6 13 2.5V10.5Q13 11.4 12.1 11.4H.9Q0 11.4 0 10.5Z" fill="#505050"/></svg>
<div class="t " style="left:48.4px;top:791.7800000000001px;letter-spacing:.06px">SampleScenes</div>
<svg style="left:31.8px;top:810.0500000000001px" width="12.1" height="10.8" viewBox="0 0 13 11.4"><path d="M0 .9Q0 0 .9 0H4.6L5.8 1.6H12.1Q13 1.6 13 2.5V10.5Q13 11.4 12.1 11.4H.9Q0 11.4 0 10.5Z" fill="#505050"/></svg>
<div class="t " style="left:48.4px;top:808.2500000000001px;letter-spacing:.06px">Scenes</div>
<svg style="left:31.8px;top:826.52px" width="12.1" height="10.8" viewBox="0 0 13 11.4"><path d="M0 .9Q0 0 .9 0H4.6L5.8 1.6H12.1Q13 1.6 13 2.5V10.5Q13 11.4 12.1 11.4H.9Q0 11.4 0 10.5Z" fill="#505050"/></svg>
<div class="t " style="left:48.4px;top:824.72px;letter-spacing:.06px">Scripts</div>
<svg style="left:31.8px;top:842.99px" width="12.1" height="10.8" viewBox="0 0 13 11.4"><path d="M0 .9Q0 0 .9 0H4.6L5.8 1.6H12.1Q13 1.6 13 2.5V10.5Q13 11.4 12.1 11.4H.9Q0 11.4 0 10.5Z" fill="#505050"/></svg>
<div class="t " style="left:48.4px;top:841.19px;letter-spacing:.06px">Settings</div>
<svg style="left:31.8px;top:859.46px" width="12.1" height="10.8" viewBox="0 0 13 11.4"><path d="M0 .9Q0 0 .9 0H4.6L5.8 1.6H12.1Q13 1.6 13 2.5V10.5Q13 11.4 12.1 11.4H.9Q0 11.4 0 10.5Z" fill="#505050"/></svg>
<div class="t " style="left:48.4px;top:857.6600000000001px;letter-spacing:.06px">SoundFX</div>
<div class="tri-r" style="left:18.95px;top:877.13px"></div>
<svg style="left:31.8px;top:875.9300000000001px" width="12.1" height="10.8" viewBox="0 0 13 11.4"><path d="M0 .9Q0 0 .9 0H4.6L5.8 1.6H12.1Q13 1.6 13 2.5V10.5Q13 11.4 12.1 11.4H.9Q0 11.4 0 10.5Z" fill="#505050"/></svg>
<div class="t " style="left:48.4px;top:874.1300000000001px;letter-spacing:.06px">Standard Assets</div>
<div class="tri-r" style="left:18.95px;top:893.60px"></div>
<svg style="left:31.8px;top:892.4000000000001px" width="12.1" height="10.8" viewBox="0 0 13 11.4"><path d="M0 .9Q0 0 .9 0H4.6L5.8 1.6H12.1Q13 1.6 13 2.5V10.5Q13 11.4 12.1 11.4H.9Q0 11.4 0 10.5Z" fill="#505050"/></svg>
<div class="t " style="left:48.4px;top:890.6000000000001px;letter-spacing:.06px">TutorialInfo</div>
<div class="a" style="left:328.4px;top:677.5px;width:1.6px;height:283px;background:#a2a2a2"></div>
<div class="a" style="left:330px;top:677.5px;width:820px;height:20.6px;background:#d0d0d0"></div>
<div class="hl" style="left:330px;top:698px;width:820px;background:#b2b2b2"></div>
<div class="t " style="left:334.2px;top:680.0px;">Assets</div>
<svg style="left:379.6px;top:684.1px" width="4.8" height="8.2" viewBox="0 -4.1 4.8 8.2"><path d="M0 -3.6999999999999997 L4.3999999999999995 0 L0 3.6999999999999997" fill="none" stroke="#6a6a6a" stroke-width="1.15"/></svg>
<div class="t b" style="left:390.6px;top:680.0px;font-weight:400;-webkit-text-stroke:.35px #0a0a0a">SoundFX</div>
<div class="a" style="left:330px;top:698.6px;width:820px;height:241px;background:#bebebe"></div>
<div class="a" style="left:1137px;top:699px;width:13px;height:240.6px;background:#c3c3c3;border-left:1px solid #b4b4b4"></div>
<svg style="left:330px;top:698.6px" width="808" height="241" viewBox="330 698.6 808 241"><defs><clipPath id="gc"><rect x="330" y="699.5" width="808" height="240.1"/></clipPath><filter id="ts" x="-10%" y="-10%" width="120%" height="125%"><feGaussianBlur stdDeviation="1.1"/></filter></defs><g clip-path="url(#gc)"><rect x="347.29999999999995" y="665.9" width="95.7" height="95.9" fill="#000" opacity=".33" filter="url(#ts)"/><rect x="347.9" y="665.3" width="94.5" height="94.5" fill="#525252"/><polygon points="349.9,688.8 350.7,688.6 351.5,688.3 352.3,688.7 353.1,688.4 353.9,688.7 354.7,688.2 355.5,688.2 356.3,688.8 357.1,688.7 357.9,688.9 358.7,689.0 359.5,689.1 360.3,689.1 361.1,689.1 361.9,689.1 362.7,689.1 363.5,688.9 364.3,688.9 365.1,688.5 365.9,688.6 366.7,688.3 367.5,688.4 368.3,688.2 369.1,688.3 369.9,688.2 370.7,688.4 371.5,688.8 372.3,688.8 373.1,688.9 373.9,689.0 374.7,689.1 375.5,689.1 376.3,689.1 377.1,689.1 377.9,689.0 378.7,688.9 379.5,688.9 380.3,688.4 381.1,688.5 381.9,688.6 382.7,688.1 383.5,688.4 384.3,688.3 385.1,688.7 385.9,688.4 386.7,688.5 387.5,688.8 388.3,689.0 389.1,688.9 389.9,689.1 390.7,689.1 391.5,689.1 392.3,689.1 393.1,689.0 393.9,689.0 394.7,688.7 395.6,688.4 396.4,688.3 397.2,688.2 398.0,688.6 398.8,688.7 399.6,688.5 400.4,688.4 401.2,688.8 402.0,688.7 402.8,688.9 403.6,689.0 404.4,689.1 405.2,689.1 406.0,689.1 406.8,689.0 407.6,689.1 408.4,688.9 409.2,689.0 410.0,688.6 410.8,688.4 411.6,688.4 412.4,688.1 413.2,688.3 414.0,688.2 414.8,688.4 415.6,688.4 416.4,688.7 417.2,688.6 418.0,688.8 418.8,688.9 419.6,689.1 420.4,689.1 421.2,689.1 422.0,689.0 422.8,689.1 423.6,688.8 424.4,688.8 425.2,688.7 426.0,688.4 426.8,688.6 427.6,688.2 428.4,688.3 429.2,688.1 430.0,688.7 430.8,688.6 431.6,688.5 432.4,688.9 433.2,688.8 434.0,689.1 434.8,689.1 435.6,689.1 436.4,689.1 437.2,689.1 438.0,689.1 438.8,688.8 439.6,688.8 440.4,688.7 440.4,690.6 439.6,690.2 438.8,690.2 438.0,690.1 437.2,690.0 436.4,689.9 435.6,689.9 434.8,689.9 434.0,690.1 433.2,690.2 432.4,690.3 431.6,690.3 430.8,690.7 430.0,690.4 429.2,690.9 428.4,690.5 427.6,690.5 426.8,690.3 426.0,690.4 425.2,690.2 424.4,690.2 423.6,690.2 422.8,690.1 422.0,689.9 421.2,689.9 420.4,689.9 419.6,689.9 418.8,690.1 418.0,690.0 417.2,690.2 416.4,690.6 415.6,690.2 414.8,690.5 414.0,690.6 413.2,690.5 412.4,690.8 411.6,690.4 410.8,690.5 410.0,690.1 409.2,690.0 408.4,689.9 407.6,690.0 406.8,689.9 406.0,689.9 405.2,689.9 404.4,689.9 403.6,690.0 402.8,690.2 402.0,690.1 401.2,690.2 400.4,690.4 399.6,690.4 398.8,690.8 398.0,690.3 397.2,690.7 396.4,690.4 395.6,690.6 394.7,690.4 393.9,690.0 393.1,689.9 392.3,689.9 391.5,689.9 390.7,689.9 389.9,689.9 389.1,690.0 388.3,689.9 387.5,690.2 386.7,690.5 385.9,690.7 385.1,690.7 384.3,690.9 383.5,690.5 382.7,690.7 381.9,690.6 381.1,690.7 380.3,690.5 379.5,690.2 378.7,690.1 377.9,690.1 377.1,689.9 376.3,689.9 375.5,689.9 374.7,689.9 373.9,690.0 373.1,690.2 372.3,690.1 371.5,690.5 370.7,690.2 369.9,690.6 369.1,690.9 368.3,690.5 367.5,690.8 366.7,690.8 365.9,690.6 365.1,690.1 364.3,690.4 363.5,690.1 362.7,690.0 361.9,689.9 361.1,689.9 360.3,689.9 359.5,689.9 358.7,689.9 357.9,690.0 357.1,690.5 356.3,690.2 355.5,690.8 354.7,690.4 353.9,690.6 353.1,690.8 352.3,690.8 351.5,690.3 350.7,690.5 349.9,690.3" fill="#f0c750"/><polygon points="349.9,734.2 350.7,734.2 351.5,734.2 352.3,733.9 353.1,733.6 353.9,733.9 354.7,733.5 355.5,733.6 356.3,733.6 357.1,733.9 357.9,733.9 358.7,733.7 359.5,733.9 360.3,734.2 361.1,734.3 361.9,734.3 362.7,734.3 363.5,734.3 364.3,734.3 365.1,734.3 365.9,734.3 366.7,734.2 367.5,733.8 368.3,733.9 369.1,733.7 369.9,733.4 370.7,733.4 371.5,733.5 372.3,734.0 373.1,733.9 373.9,733.8 374.7,734.2 375.5,734.1 376.3,734.2 377.1,734.3 377.9,734.3 378.7,734.3 379.5,734.3 380.3,734.1 381.1,734.3 381.9,733.9 382.7,734.1 383.5,733.6 384.3,733.4 385.1,733.8 385.9,733.3 386.7,733.8 387.5,733.7 388.3,734.1 389.1,733.8 389.9,734.1 390.7,734.3 391.5,734.3 392.3,734.3 393.1,734.3 393.9,734.3 394.7,734.3 395.6,734.3 396.4,734.2 397.2,734.0 398.0,733.9 398.8,733.6 399.6,733.7 400.4,733.6 401.2,733.6 402.0,733.6 402.8,733.9 403.6,733.9 404.4,734.2 405.2,734.0 406.0,734.3 406.8,734.3 407.6,734.3 408.4,734.3 409.2,734.3 410.0,734.3 410.8,734.2 411.6,734.2 412.4,733.8 413.2,733.7 414.0,733.6 414.8,733.4 415.6,733.7 416.4,733.9 417.2,733.8 418.0,733.9 418.8,733.8 419.6,734.1 420.4,734.3 421.2,734.2 422.0,734.3 422.8,734.3 423.6,734.3 424.4,734.2 425.2,734.3 426.0,734.0 426.8,733.8 427.6,733.8 428.4,734.0 429.2,734.0 430.0,733.5 430.8,733.6 431.6,733.7 432.4,734.0 433.2,733.8 434.0,734.0 434.8,734.0 435.6,734.2 436.4,734.2 437.2,734.3 438.0,734.3 438.8,734.3 439.6,734.3 440.4,734.3 440.4,735.1 439.6,735.0 438.8,735.1 438.0,735.0 437.2,735.1 436.4,735.2 435.6,735.1 434.8,735.3 434.0,735.3 433.2,735.8 432.4,735.5 431.6,735.5 430.8,736.1 430.0,736.1 429.2,735.8 428.4,735.4 427.6,735.5 426.8,735.6 426.0,735.2 425.2,735.2 424.4,735.1 423.6,735.1 422.8,735.0 422.0,735.0 421.2,735.2 420.4,735.3 419.6,735.2 418.8,735.3 418.0,735.4 417.2,735.6 416.4,735.9 415.6,735.9 414.8,735.9 414.0,735.8 413.2,735.5 412.4,735.3 411.6,735.4 410.8,735.3 410.0,735.1 409.2,735.0 408.4,735.1 407.6,735.1 406.8,735.1 406.0,735.2 405.2,735.4 404.4,735.2 403.6,735.4 402.8,735.6 402.0,735.9 401.2,735.6 400.4,735.5 399.6,735.8 398.8,735.8 398.0,735.6 397.2,735.4 396.4,735.2 395.6,735.1 394.7,735.0 393.9,735.1 393.1,735.0 392.3,735.0 391.5,735.1 390.7,735.1 389.9,735.4 389.1,735.4 388.3,735.6 387.5,735.9 386.7,735.5 385.9,736.0 385.1,735.5 384.3,735.6 383.5,735.4 382.7,735.4 381.9,735.3 381.1,735.3 380.3,735.1 379.5,735.2 378.7,735.1 377.9,735.1 377.1,735.1 376.3,735.0 375.5,735.3 374.7,735.4 373.9,735.6 373.1,735.8 372.3,735.4 371.5,735.4 370.7,735.9 369.9,735.6 369.1,735.7 368.3,735.7 367.5,735.6 366.7,735.2 365.9,735.1 365.1,735.0 364.3,735.0 363.5,735.0 362.7,735.0 361.9,735.0 361.1,735.1 360.3,735.2 359.5,735.5 358.7,735.6 357.9,735.4 357.1,735.7 356.3,735.7 355.5,735.7 354.7,735.7 353.9,735.4 353.1,735.3 352.3,735.3 351.5,735.2 350.7,735.1 349.9,735.1" fill="#f0c750"/><rect x="459.84999999999997" y="665.9" width="95.7" height="95.9" fill="#000" opacity=".33" filter="url(#ts)"/><rect x="460.45" y="665.3" width="94.5" height="94.5" fill="#525252"/><polygon points="462.4,688.7 463.3,688.3 464.1,688.6 464.9,688.5 465.7,688.8 466.5,688.7 467.3,688.4 468.1,688.6 468.9,688.7 469.7,688.8 470.5,688.6 471.3,688.2 472.1,688.4 472.9,688.7 473.7,688.6 474.5,688.0 475.3,688.5 476.1,688.0 476.9,687.9 477.7,688.0 478.5,687.9 479.3,688.5 480.1,688.0 480.9,688.1 481.7,687.7 482.5,687.6 483.3,687.2 484.1,687.3 484.9,686.0 485.7,686.2 486.5,686.1 487.3,686.2 488.1,686.0 488.9,686.1 489.7,685.8 490.5,686.8 491.3,687.3 492.1,688.2 492.9,688.0 493.7,688.7 494.5,688.4 495.3,688.7 496.1,688.7 496.9,688.6 497.7,688.2 498.5,688.4 499.3,688.5 500.1,688.1 500.9,688.1 501.7,688.4 502.5,688.1 503.3,687.9 504.1,688.0 504.9,688.4 505.7,688.5 506.5,688.1 507.3,688.6 508.1,688.5 508.9,688.4 509.7,688.1 510.5,688.4 511.3,688.4 512.1,688.2 512.9,688.2 513.7,688.3 514.5,688.6 515.3,688.6 516.1,688.6 516.9,688.8 517.7,688.7 518.5,688.9 519.3,688.8 520.1,688.6 520.9,688.5 521.7,688.8 522.5,688.7 523.3,688.4 524.1,688.1 524.9,688.0 525.7,688.4 526.5,688.2 527.3,688.1 528.1,688.4 528.9,688.2 529.7,688.6 530.5,688.5 531.3,688.4 532.1,688.4 532.9,688.4 533.7,688.3 534.5,688.1 535.3,688.0 536.1,688.1 536.9,688.3 537.7,688.6 538.5,688.4 539.3,688.7 540.1,688.5 540.9,688.2 541.7,688.7 542.5,688.6 543.3,688.5 544.1,688.8 544.9,688.6 545.7,688.6 546.5,688.6 547.3,688.5 548.1,688.6 548.9,688.2 549.7,688.2 550.5,688.3 551.3,688.4 552.1,688.4 553.0,688.5 553.0,690.4 552.1,690.4 551.3,690.8 550.5,690.6 549.7,690.4 548.9,690.3 548.1,690.4 547.3,690.2 546.5,690.3 545.7,690.3 544.9,690.1 544.1,690.5 543.3,690.2 542.5,690.2 541.7,690.7 540.9,690.6 540.1,690.6 539.3,690.8 538.5,690.4 537.7,690.6 536.9,690.7 536.1,690.7 535.3,691.1 534.5,690.5 533.7,690.6 532.9,690.8 532.1,690.6 531.3,690.5 530.5,691.0 529.7,690.7 528.9,690.4 528.1,690.7 527.3,690.9 526.5,690.8 525.7,690.5 524.9,690.5 524.1,690.9 523.3,690.6 522.5,690.3 521.7,690.2 520.9,690.2 520.1,690.1 519.3,690.4 518.5,690.5 517.7,690.4 516.9,690.5 516.1,690.7 515.3,690.3 514.5,690.6 513.7,690.6 512.9,690.9 512.1,690.9 511.3,690.9 510.5,690.4 509.7,690.5 508.9,690.8 508.1,690.4 507.3,691.1 506.5,690.7 505.7,690.6 504.9,691.0 504.1,690.4 503.3,690.4 502.5,690.4 501.7,690.5 500.9,690.4 500.1,690.6 499.3,690.5 498.5,690.8 497.7,690.3 496.9,690.4 496.1,690.6 495.3,690.6 494.5,690.7 493.7,690.8 492.9,690.8 492.1,691.1 491.3,691.4 490.5,692.4 489.7,692.8 488.9,694.3 488.1,694.5 487.3,694.5 486.5,693.7 485.7,692.3 484.9,692.6 484.1,691.9 483.3,691.8 482.5,691.0 481.7,691.0 480.9,690.9 480.1,690.8 479.3,691.0 478.5,691.1 477.7,690.7 476.9,691.0 476.1,690.9 475.3,691.0 474.5,690.8 473.7,690.7 472.9,690.5 472.1,690.4 471.3,690.6 470.5,690.4 469.7,690.4 468.9,690.2 468.1,690.3 467.3,690.5 466.5,690.4 465.7,690.3 464.9,690.5 464.1,690.5 463.3,690.6 462.4,690.8" fill="#f0c750"/><polygon points="462.4,733.5 463.3,733.7 464.1,733.5 464.9,733.5 465.7,733.5 466.5,733.4 467.3,733.7 468.1,733.3 468.9,733.4 469.7,733.5 470.5,733.5 471.3,733.5 472.1,733.5 472.9,733.9 473.7,733.5 474.5,733.5 475.3,733.7 476.1,733.9 476.9,733.7 477.7,733.8 478.5,733.9 479.3,733.7 480.1,733.8 480.9,733.7 481.7,733.7 482.5,733.4 483.3,733.0 484.1,732.4 484.9,732.3 485.7,731.7 486.5,730.4 487.3,731.6 488.1,730.1 488.9,731.3 489.7,731.1 490.5,732.4 491.3,732.2 492.1,732.9 492.9,733.2 493.7,733.7 494.5,733.7 495.3,733.7 496.1,733.6 496.9,733.6 497.7,733.8 498.5,733.4 499.3,733.6 500.1,733.4 500.9,733.5 501.7,733.9 502.5,733.9 503.3,733.8 504.1,733.6 504.9,733.9 505.7,734.0 506.5,733.9 507.3,733.7 508.1,733.7 508.9,733.9 509.7,733.9 510.5,733.6 511.3,734.0 512.1,733.4 512.9,733.7 513.7,733.6 514.5,733.3 515.3,733.8 516.1,733.6 516.9,733.8 517.7,733.5 518.5,733.5 519.3,733.5 520.1,733.8 520.9,733.3 521.7,733.8 522.5,733.5 523.3,733.6 524.1,733.3 524.9,733.5 525.7,733.6 526.5,733.5 527.3,733.5 528.1,733.9 528.9,734.0 529.7,733.6 530.5,733.7 531.3,734.0 532.1,734.0 532.9,734.1 533.7,734.0 534.5,733.8 535.3,733.8 536.1,734.0 536.9,733.6 537.7,734.0 538.5,733.4 539.3,733.3 540.1,733.3 540.9,733.6 541.7,733.6 542.5,733.6 543.3,733.3 544.1,733.7 544.9,733.3 545.7,733.3 546.5,733.2 547.3,733.4 548.1,733.8 548.9,733.3 549.7,733.7 550.5,733.3 551.3,733.9 552.1,733.8 553.0,733.5 553.0,735.9 552.1,735.9 551.3,735.6 550.5,735.6 549.7,736.0 548.9,736.1 548.1,736.1 547.3,735.7 546.5,736.1 545.7,736.0 544.9,736.1 544.1,735.8 543.3,736.2 542.5,735.8 541.7,735.8 540.9,736.0 540.1,735.5 539.3,735.8 538.5,735.9 537.7,735.7 536.9,735.9 536.1,735.4 535.3,735.7 534.5,735.5 533.7,735.3 532.9,735.4 532.1,735.7 531.3,735.5 530.5,735.4 529.7,735.5 528.9,735.5 528.1,735.5 527.3,735.8 526.5,735.5 525.7,735.5 524.9,736.1 524.1,736.1 523.3,735.7 522.5,735.9 521.7,735.9 520.9,736.2 520.1,736.1 519.3,736.2 518.5,736.2 517.7,735.7 516.9,735.5 516.1,735.7 515.3,736.1 514.5,735.7 513.7,736.0 512.9,735.8 512.1,735.5 511.3,735.5 510.5,735.8 509.7,735.7 508.9,735.7 508.1,735.6 507.3,735.6 506.5,735.5 505.7,735.4 504.9,735.3 504.1,735.8 503.3,735.8 502.5,735.8 501.7,735.5 500.9,735.8 500.1,735.7 499.3,736.0 498.5,735.6 497.7,735.7 496.9,735.7 496.1,736.0 495.3,735.9 494.5,735.7 493.7,736.0 492.9,736.0 492.1,736.2 491.3,736.6 490.5,737.4 489.7,738.8 488.9,737.8 488.1,739.4 487.3,737.5 486.5,739.0 485.7,737.5 484.9,737.8 484.1,736.7 483.3,736.2 482.5,735.8 481.7,735.8 480.9,735.5 480.1,735.5 479.3,735.7 478.5,735.7 477.7,735.6 476.9,735.7 476.1,735.5 475.3,736.0 474.5,735.7 473.7,735.8 472.9,735.7 472.1,735.7 471.3,735.9 470.5,735.6 469.7,735.7 468.9,735.8 468.1,736.0 467.3,735.6 466.5,735.8 465.7,736.1 464.9,735.9 464.1,735.5 463.3,735.9 462.4,735.9" fill="#f0c750"/><rect x="572.4" y="665.9" width="95.7" height="95.9" fill="#000" opacity=".33" filter="url(#ts)"/><rect x="573.0" y="665.3" width="94.5" height="94.5" fill="#525252"/><polygon points="575.0,689.0 575.8,689.1 576.6,689.0 577.4,689.1 578.2,689.1 579.0,689.1 579.8,689.1 580.6,689.1 581.4,689.1 582.2,689.1 583.0,689.1 583.8,689.1 584.6,689.1 585.4,689.1 586.2,689.1 587.0,689.1 587.8,689.0 588.6,689.1 589.4,689.1 590.2,689.1 591.0,689.1 591.8,689.1 592.6,689.1 593.4,689.0 594.2,689.1 595.0,689.1 595.8,689.1 596.6,689.1 597.4,689.1 598.2,689.1 599.0,689.1 599.8,689.1 600.6,689.1 601.4,689.1 602.2,689.1 603.0,689.1 603.8,689.1 604.6,689.1 605.4,689.1 606.2,688.9 607.0,688.9 607.8,689.1 608.6,689.1 609.4,689.1 610.2,689.1 611.0,689.1 611.8,689.1 612.6,689.1 613.4,689.1 614.2,689.1 615.0,689.1 615.8,689.1 616.6,689.1 617.4,689.1 618.2,689.1 619.0,689.1 619.8,689.0 620.7,689.0 621.5,689.1 622.3,689.1 623.1,689.1 623.9,689.1 624.7,689.1 625.5,689.1 626.3,689.1 627.1,689.1 627.9,689.1 628.7,689.1 629.5,689.1 630.3,689.1 631.1,689.1 631.9,689.1 632.7,689.1 633.5,689.1 634.3,689.1 635.1,689.1 635.9,689.1 636.7,689.1 637.5,689.0 638.3,689.1 639.1,689.1 639.9,689.1 640.7,689.1 641.5,689.1 642.3,689.1 643.1,689.1 643.9,689.1 644.7,689.1 645.5,689.1 646.3,689.1 647.1,689.1 647.9,689.0 648.7,689.0 649.5,688.9 650.3,689.1 651.1,688.9 651.9,689.1 652.7,689.1 653.5,689.1 654.3,689.1 655.1,689.1 655.9,689.1 656.7,689.1 657.5,689.1 658.3,689.1 659.1,689.1 659.9,689.1 660.7,689.1 661.5,689.1 662.3,689.1 663.1,689.0 663.9,689.1 664.7,689.0 665.5,689.0 665.5,690.1 664.7,689.9 663.9,689.9 663.1,689.9 662.3,689.9 661.5,689.9 660.7,689.9 659.9,689.9 659.1,689.9 658.3,689.9 657.5,689.9 656.7,689.9 655.9,689.9 655.1,689.9 654.3,689.9 653.5,689.9 652.7,689.9 651.9,689.9 651.1,690.0 650.3,690.0 649.5,690.1 648.7,689.9 647.9,690.0 647.1,689.9 646.3,689.9 645.5,689.9 644.7,689.9 643.9,689.9 643.1,689.9 642.3,689.9 641.5,689.9 640.7,689.9 639.9,689.9 639.1,689.9 638.3,689.9 637.5,690.0 636.7,689.9 635.9,690.1 635.1,690.1 634.3,689.9 633.5,690.0 632.7,689.9 631.9,689.9 631.1,689.9 630.3,689.9 629.5,689.9 628.7,689.9 627.9,689.9 627.1,689.9 626.3,689.9 625.5,689.9 624.7,689.9 623.9,689.9 623.1,689.9 622.3,690.0 621.5,690.0 620.7,690.0 619.8,689.9 619.0,689.9 618.2,689.9 617.4,689.9 616.6,689.9 615.8,689.9 615.0,689.9 614.2,689.9 613.4,689.9 612.6,689.9 611.8,689.9 611.0,689.9 610.2,689.9 609.4,689.9 608.6,689.9 607.8,689.9 607.0,689.9 606.2,690.0 605.4,690.1 604.6,690.0 603.8,689.9 603.0,690.0 602.2,689.9 601.4,689.9 600.6,689.9 599.8,689.9 599.0,689.9 598.2,689.9 597.4,689.9 596.6,689.9 595.8,689.9 595.0,689.9 594.2,689.9 593.4,689.9 592.6,689.9 591.8,689.9 591.0,690.0 590.2,690.0 589.4,690.1 588.6,689.9 587.8,689.9 587.0,689.9 586.2,689.9 585.4,689.9 584.6,689.9 583.8,689.9 583.0,689.9 582.2,689.9 581.4,689.9 580.6,689.9 579.8,689.9 579.0,689.9 578.2,690.0 577.4,690.0 576.6,689.9 575.8,689.9 575.0,690.0" fill="#f0c750"/><polygon points="575.0,734.3 575.8,734.3 576.6,734.3 577.4,734.3 578.2,734.3 579.0,734.3 579.8,734.3 580.6,734.3 581.4,734.3 582.2,734.3 583.0,734.2 583.8,734.2 584.6,734.2 585.4,734.3 586.2,734.2 587.0,734.3 587.8,734.3 588.6,734.3 589.4,734.3 590.2,734.3 591.0,734.3 591.8,734.3 592.6,734.3 593.4,734.3 594.2,734.3 595.0,734.3 595.8,734.3 596.6,734.3 597.4,734.3 598.2,734.3 599.0,734.2 599.8,734.2 600.6,734.3 601.4,734.3 602.2,734.3 603.0,734.3 603.8,734.3 604.6,734.3 605.4,734.3 606.2,734.3 607.0,734.3 607.8,734.3 608.6,734.3 609.4,734.3 610.2,734.3 611.0,734.3 611.8,734.3 612.6,734.3 613.4,734.3 614.2,734.3 615.0,734.2 615.8,734.3 616.6,734.3 617.4,734.3 618.2,734.3 619.0,734.3 619.8,734.3 620.7,734.3 621.5,734.3 622.3,734.3 623.1,734.3 623.9,734.3 624.7,734.3 625.5,734.3 626.3,734.3 627.1,734.3 627.9,734.3 628.7,734.2 629.5,734.3 630.3,734.3 631.1,734.3 631.9,734.3 632.7,734.3 633.5,734.3 634.3,734.3 635.1,734.3 635.9,734.3 636.7,734.3 637.5,734.3 638.3,734.3 639.1,734.3 639.9,734.3 640.7,734.3 641.5,734.3 642.3,734.3 643.1,734.3 643.9,734.3 644.7,734.2 645.5,734.3 646.3,734.3 647.1,734.3 647.9,734.3 648.7,734.3 649.5,734.3 650.3,734.3 651.1,734.3 651.9,734.3 652.7,734.3 653.5,734.3 654.3,734.3 655.1,734.3 655.9,734.3 656.7,734.3 657.5,734.3 658.3,734.2 659.1,734.2 659.9,734.3 660.7,734.3 661.5,734.3 662.3,734.3 663.1,734.3 663.9,734.3 664.7,734.3 665.5,734.3 665.5,735.0 664.7,735.0 663.9,735.0 663.1,735.0 662.3,735.0 661.5,735.1 660.7,735.0 659.9,735.1 659.1,735.2 658.3,735.2 657.5,735.2 656.7,735.1 655.9,735.0 655.1,735.0 654.3,735.0 653.5,735.0 652.7,735.0 651.9,735.0 651.1,735.0 650.3,735.0 649.5,735.0 648.7,735.0 647.9,735.0 647.1,735.0 646.3,735.0 645.5,735.1 644.7,735.1 643.9,735.2 643.1,735.2 642.3,735.0 641.5,735.1 640.7,735.1 639.9,735.0 639.1,735.0 638.3,735.0 637.5,735.0 636.7,735.0 635.9,735.0 635.1,735.0 634.3,735.0 633.5,735.0 632.7,735.0 631.9,735.1 631.1,735.2 630.3,735.2 629.5,735.0 628.7,735.2 627.9,735.0 627.1,735.1 626.3,735.0 625.5,735.0 624.7,735.0 623.9,735.0 623.1,735.0 622.3,735.0 621.5,735.0 620.7,735.0 619.8,735.0 619.0,735.0 618.2,735.0 617.4,735.1 616.6,735.1 615.8,735.1 615.0,735.2 614.2,735.0 613.4,735.1 612.6,735.1 611.8,735.1 611.0,735.0 610.2,735.0 609.4,735.0 608.6,735.0 607.8,735.0 607.0,735.0 606.2,735.0 605.4,735.0 604.6,735.0 603.8,735.0 603.0,735.0 602.2,735.0 601.4,735.2 600.6,735.0 599.8,735.0 599.0,735.1 598.2,735.1 597.4,735.1 596.6,735.1 595.8,735.0 595.0,735.0 594.2,735.0 593.4,735.0 592.6,735.0 591.8,735.0 591.0,735.0 590.2,735.0 589.4,735.0 588.6,735.0 587.8,735.0 587.0,735.0 586.2,735.1 585.4,735.1 584.6,735.1 583.8,735.1 583.0,735.1 582.2,735.1 581.4,735.0 580.6,735.0 579.8,735.0 579.0,735.0 578.2,735.0 577.4,735.0 576.6,735.0 575.8,735.0 575.0,735.0" fill="#f0c750"/><rect x="684.9499999999999" y="665.9" width="95.7" height="95.9" fill="#000" opacity=".33" filter="url(#ts)"/><rect x="685.55" y="665.3" width="94.5" height="94.5" fill="#525252"/><polygon points="687.5,688.4 688.4,687.0 689.2,683.6 690.0,686.6 690.8,685.7 691.6,686.7 692.4,679.4 693.2,680.7 694.0,686.2 694.8,682.6 695.6,680.2 696.4,686.8 697.2,682.2 698.0,686.3 698.8,686.8 699.6,680.2 700.4,685.8 701.2,684.0 702.0,682.0 702.8,685.8 703.6,685.9 704.4,686.8 705.2,687.9 706.0,685.4 706.8,686.2 707.6,687.2 708.4,687.9 709.2,687.9 710.0,687.8 710.8,686.1 711.6,687.1 712.4,688.5 713.2,688.2 714.0,687.1 714.8,688.0 715.6,687.6 716.4,686.7 717.2,685.5 718.0,685.3 718.8,687.8 719.6,685.8 720.4,684.9 721.2,685.6 722.0,688.1 722.8,688.4 723.6,685.8 724.4,688.7 725.2,688.6 726.0,688.4 726.8,688.9 727.6,688.5 728.4,689.0 729.2,689.0 730.0,689.0 730.8,688.6 731.6,687.9 732.4,688.7 733.2,688.8 734.0,688.8 734.8,688.9 735.6,688.9 736.4,688.3 737.2,688.8 738.0,689.1 738.8,689.1 739.6,688.5 740.4,689.1 741.2,688.8 742.0,688.9 742.8,688.6 743.6,688.4 744.4,689.1 745.2,687.9 746.0,687.7 746.8,688.1 747.6,688.2 748.4,688.4 749.2,688.2 750.0,687.9 750.8,689.1 751.6,688.3 752.4,689.1 753.2,689.1 754.0,689.1 754.8,689.1 755.6,689.1 756.4,689.1 757.2,689.1 758.0,689.2 758.8,689.3 759.6,689.3 760.4,689.4 761.2,689.5 762.0,689.5 762.8,689.4 763.6,689.5 764.4,689.5 765.2,689.5 766.0,689.5 766.8,689.5 767.6,689.5 768.4,689.5 769.2,689.5 770.0,689.5 770.8,689.5 771.6,689.5 772.4,689.5 773.2,689.5 774.0,689.5 774.8,689.5 775.6,689.5 776.4,689.5 777.2,689.5 778.0,689.5 778.0,689.5 777.2,689.5 776.4,689.5 775.6,689.5 774.8,689.5 774.0,689.5 773.2,689.5 772.4,689.5 771.6,689.5 770.8,689.5 770.0,689.5 769.2,689.5 768.4,689.5 767.6,689.5 766.8,689.5 766.0,689.5 765.2,689.6 764.4,689.5 763.6,689.5 762.8,689.5 762.0,689.6 761.2,689.6 760.4,689.6 759.6,689.7 758.8,689.7 758.0,689.8 757.2,689.9 756.4,689.9 755.6,689.9 754.8,689.9 754.0,689.9 753.2,690.3 752.4,690.4 751.6,690.3 750.8,691.0 750.0,691.2 749.2,690.2 748.4,690.8 747.6,691.2 746.8,691.1 746.0,690.3 745.2,691.2 744.4,690.0 743.6,690.3 742.8,690.6 742.0,690.7 741.2,690.7 740.4,690.6 739.6,689.9 738.8,689.9 738.0,689.9 737.2,689.9 736.4,690.6 735.6,690.0 734.8,689.9 734.0,690.0 733.2,691.0 732.4,690.7 731.6,689.9 730.8,690.1 730.0,689.9 729.2,690.7 728.4,690.0 727.6,690.2 726.8,691.8 726.0,690.4 725.2,691.8 724.4,690.3 723.6,691.0 722.8,691.3 722.0,691.7 721.2,691.2 720.4,692.5 719.6,691.6 718.8,694.0 718.0,690.5 717.2,692.6 716.4,693.1 715.6,690.4 714.8,690.6 714.0,690.8 713.2,692.5 712.4,690.5 711.6,693.4 710.8,691.2 710.0,691.4 709.2,692.7 708.4,691.9 707.6,695.3 706.8,692.5 706.0,691.8 705.2,691.1 704.4,695.4 703.6,691.7 702.8,694.5 702.0,694.2 701.2,697.8 700.4,698.6 699.6,695.5 698.8,699.7 698.0,694.9 697.2,695.2 696.4,696.2 695.6,699.1 694.8,697.5 694.0,693.6 693.2,698.2 692.4,698.5 691.6,692.9 690.8,692.7 690.0,694.6 689.2,695.1 688.4,694.7 687.5,690.4" fill="#f0c750"/><polygon points="687.5,733.6 688.4,731.0 689.2,733.2 690.0,727.1 690.8,728.1 691.6,728.2 692.4,728.8 693.2,730.9 694.0,728.4 694.8,729.8 695.6,731.3 696.4,728.9 697.2,728.6 698.0,726.4 698.8,730.2 699.6,730.7 700.4,731.9 701.2,732.7 702.0,728.2 702.8,729.8 703.6,727.5 704.4,731.1 705.2,732.0 706.0,733.0 706.8,733.3 707.6,733.5 708.4,733.1 709.2,731.8 710.0,731.9 710.8,732.4 711.6,733.2 712.4,732.1 713.2,731.6 714.0,732.9 714.8,732.4 715.6,734.0 716.4,733.8 717.2,733.4 718.0,733.1 718.8,732.6 719.6,733.7 720.4,732.2 721.2,732.4 722.0,732.7 722.8,733.8 723.6,733.7 724.4,733.5 725.2,733.4 726.0,733.7 726.8,733.8 727.6,733.5 728.4,733.6 729.2,733.1 730.0,732.3 730.8,733.7 731.6,732.7 732.4,733.9 733.2,734.0 734.0,733.8 734.8,733.5 735.6,734.2 736.4,733.6 737.2,734.3 738.0,734.2 738.8,734.3 739.6,734.3 740.4,734.3 741.2,734.3 742.0,734.1 742.8,734.3 743.6,734.0 744.4,734.3 745.2,733.9 746.0,734.3 746.8,734.3 747.6,734.1 748.4,733.8 749.2,733.7 750.0,733.7 750.8,733.7 751.6,733.1 752.4,733.2 753.2,734.2 754.0,733.6 754.8,733.8 755.6,734.3 756.4,734.3 757.2,734.3 758.0,734.4 758.8,734.5 759.6,734.5 760.4,734.6 761.2,734.6 762.0,734.6 762.8,734.7 763.6,734.7 764.4,734.6 765.2,734.6 766.0,734.7 766.8,734.7 767.6,734.7 768.4,734.7 769.2,734.7 770.0,734.7 770.8,734.7 771.6,734.7 772.4,734.7 773.2,734.7 774.0,734.7 774.8,734.7 775.6,734.7 776.4,734.7 777.2,734.7 778.0,734.7 778.0,734.7 777.2,734.7 776.4,734.7 775.6,734.7 774.8,734.7 774.0,734.7 773.2,734.7 772.4,734.7 771.6,734.7 770.8,734.7 770.0,734.7 769.2,734.7 768.4,734.7 767.6,734.7 766.8,734.7 766.0,734.8 765.2,734.8 764.4,734.7 763.6,734.7 762.8,734.8 762.0,734.7 761.2,734.8 760.4,734.8 759.6,734.9 758.8,734.9 758.0,735.0 757.2,735.1 756.4,735.4 755.6,735.1 754.8,735.4 754.0,735.8 753.2,735.2 752.4,735.2 751.6,735.3 750.8,735.2 750.0,735.2 749.2,735.2 748.4,736.1 747.6,735.9 746.8,735.2 746.0,735.1 745.2,735.1 744.4,735.4 743.6,735.1 742.8,735.1 742.0,735.1 741.2,735.3 740.4,735.5 739.6,735.1 738.8,735.6 738.0,735.1 737.2,735.4 736.4,735.3 735.6,735.7 734.8,735.1 734.0,735.2 733.2,735.9 732.4,735.3 731.6,735.8 730.8,736.0 730.0,736.3 729.2,735.5 728.4,735.8 727.6,736.8 726.8,736.8 726.0,735.9 725.2,737.8 724.4,735.9 723.6,735.6 722.8,735.9 722.0,735.6 721.2,735.3 720.4,736.4 719.6,736.2 718.8,736.3 718.0,736.3 717.2,735.4 716.4,736.1 715.6,737.4 714.8,736.5 714.0,736.5 713.2,737.6 712.4,737.9 711.6,738.0 710.8,737.7 710.0,737.2 709.2,738.0 708.4,735.9 707.6,739.0 706.8,736.3 706.0,738.4 705.2,736.4 704.4,736.3 703.6,736.8 702.8,741.7 702.0,739.3 701.2,740.5 700.4,742.5 699.6,744.5 698.8,744.0 698.0,738.1 697.2,742.7 696.4,737.2 695.6,737.6 694.8,740.2 694.0,739.2 693.2,741.0 692.4,739.0 691.6,743.3 690.8,738.6 690.0,736.9 689.2,736.6 688.4,738.9 687.5,736.1" fill="#f0c750"/><rect x="797.4999999999999" y="665.9" width="95.7" height="95.9" fill="#000" opacity=".33" filter="url(#ts)"/><rect x="798.0999999999999" y="665.3" width="94.5" height="94.5" fill="#525252"/><polygon points="800.1,684.9 800.9,682.9 801.7,684.9 802.5,681.9 803.3,685.9 804.1,684.9 804.9,681.4 805.7,685.1 806.5,676.8 807.3,685.6 808.1,685.7 808.9,685.8 809.7,677.4 810.5,685.1 811.3,677.4 812.1,676.3 812.9,680.8 813.7,678.2 814.5,678.5 815.3,685.6 816.1,686.7 816.9,687.3 817.7,684.2 818.5,683.9 819.3,686.6 820.1,685.8 820.9,686.0 821.7,688.0 822.5,688.1 823.3,684.7 824.1,685.3 824.9,686.5 825.7,688.4 826.5,685.1 827.3,686.2 828.1,685.6 828.9,687.9 829.7,686.5 830.5,686.7 831.3,686.3 832.1,685.9 832.9,687.9 833.7,685.6 834.5,685.3 835.3,687.6 836.1,688.0 836.9,688.0 837.7,683.9 838.5,688.2 839.3,686.6 840.1,687.9 840.9,686.0 841.7,687.8 842.5,686.5 843.3,688.0 844.1,688.8 844.9,687.3 845.8,687.9 846.6,688.6 847.4,688.0 848.2,688.7 849.0,688.1 849.8,688.7 850.6,688.4 851.4,689.0 852.2,689.1 853.0,688.2 853.8,688.7 854.6,689.0 855.4,689.1 856.2,688.5 857.0,688.6 857.8,688.7 858.6,688.6 859.4,688.5 860.2,688.7 861.0,688.3 861.8,687.7 862.6,688.2 863.4,688.2 864.2,687.9 865.0,687.6 865.8,687.7 866.6,688.2 867.4,688.0 868.2,688.2 869.0,688.6 869.8,688.6 870.6,689.1 871.4,689.0 872.2,689.1 873.0,689.1 873.8,689.1 874.6,689.1 875.4,689.1 876.2,689.1 877.0,689.1 877.8,689.1 878.6,689.2 879.4,689.3 880.2,689.3 881.0,689.4 881.8,689.4 882.6,689.5 883.4,689.5 884.2,689.5 885.0,689.5 885.8,689.5 886.6,689.5 887.4,689.5 888.2,689.5 889.0,689.5 889.8,689.5 890.6,689.5 890.6,689.5 889.8,689.5 889.0,689.5 888.2,689.5 887.4,689.5 886.6,689.5 885.8,689.5 885.0,689.5 884.2,689.5 883.4,689.5 882.6,689.5 881.8,689.6 881.0,689.6 880.2,689.7 879.4,689.7 878.6,689.8 877.8,689.9 877.0,689.9 876.2,689.9 875.4,689.9 874.6,689.9 873.8,689.9 873.0,689.9 872.2,689.9 871.4,690.0 870.6,689.9 869.8,690.0 869.0,690.7 868.2,690.8 867.4,690.2 866.6,691.0 865.8,690.4 865.0,691.0 864.2,690.7 863.4,690.3 862.6,690.0 861.8,690.8 861.0,690.1 860.2,690.7 859.4,690.0 858.6,690.0 857.8,690.3 857.0,690.4 856.2,690.0 855.4,690.4 854.6,689.9 853.8,690.2 853.0,690.8 852.2,690.1 851.4,690.1 850.6,690.3 849.8,690.3 849.0,691.1 848.2,691.3 847.4,690.2 846.6,690.0 845.8,690.0 844.9,690.9 844.1,691.3 843.3,691.9 842.5,690.3 841.7,690.4 840.9,691.6 840.1,692.4 839.3,691.8 838.5,695.0 837.7,691.1 836.9,693.3 836.1,690.8 835.3,691.4 834.5,692.1 833.7,691.2 832.9,692.0 832.1,690.5 831.3,690.4 830.5,692.5 829.7,690.5 828.9,691.6 828.1,691.2 827.3,693.6 826.5,690.9 825.7,690.9 824.9,690.6 824.1,691.7 823.3,690.8 822.5,694.0 821.7,695.8 820.9,694.3 820.1,692.3 819.3,695.8 818.5,692.7 817.7,691.4 816.9,692.9 816.1,692.2 815.3,693.8 814.5,699.6 813.7,697.8 812.9,693.4 812.1,697.0 811.3,694.5 810.5,703.2 809.7,693.8 808.9,692.6 808.1,698.1 807.3,700.5 806.5,700.1 805.7,694.4 804.9,692.6 804.1,697.2 803.3,696.4 802.5,700.1 801.7,698.4 800.9,691.1 800.1,693.1" fill="#f0c750"/><polygon points="800.1,730.4 800.9,729.7 801.7,732.2 802.5,726.6 803.3,726.3 804.1,731.0 804.9,729.2 805.7,723.4 806.5,730.6 807.3,726.8 808.1,724.3 808.9,730.4 809.7,721.8 810.5,731.4 811.3,724.9 812.1,722.4 812.9,726.1 813.7,728.7 814.5,726.8 815.3,726.7 816.1,729.2 816.9,727.9 817.7,729.1 818.5,731.3 819.3,732.3 820.1,733.0 820.9,729.8 821.7,728.9 822.5,733.4 823.3,733.5 824.1,732.8 824.9,732.4 825.7,730.9 826.5,733.7 827.3,733.0 828.1,733.3 828.9,731.0 829.7,733.7 830.5,730.8 831.3,733.4 832.1,732.8 832.9,733.5 833.7,733.0 834.5,732.5 835.3,729.3 836.1,731.5 836.9,730.5 837.7,731.7 838.5,732.6 839.3,733.9 840.1,732.6 840.9,733.1 841.7,732.9 842.5,732.8 843.3,733.3 844.1,733.9 844.9,733.5 845.8,733.3 846.6,734.1 847.4,734.1 848.2,733.4 849.0,734.3 849.8,733.9 850.6,733.4 851.4,734.2 852.2,734.1 853.0,734.1 853.8,734.3 854.6,734.3 855.4,734.3 856.2,734.3 857.0,734.3 857.8,734.0 858.6,734.3 859.4,733.8 860.2,734.0 861.0,734.0 861.8,733.1 862.6,733.9 863.4,733.5 864.2,732.8 865.0,734.2 865.8,733.2 866.6,733.7 867.4,733.6 868.2,734.0 869.0,733.6 869.8,734.3 870.6,734.3 871.4,734.3 872.2,734.3 873.0,734.3 873.8,734.3 874.6,734.3 875.4,734.3 876.2,734.3 877.0,734.3 877.8,734.3 878.6,734.4 879.4,734.5 880.2,734.5 881.0,734.6 881.8,734.6 882.6,734.7 883.4,734.7 884.2,734.7 885.0,734.7 885.8,734.7 886.6,734.7 887.4,734.7 888.2,734.7 889.0,734.7 889.8,734.7 890.6,734.7 890.6,734.7 889.8,734.7 889.0,734.7 888.2,734.7 887.4,734.7 886.6,734.7 885.8,734.7 885.0,734.7 884.2,734.7 883.4,734.7 882.6,734.7 881.8,734.8 881.0,734.8 880.2,734.9 879.4,734.9 878.6,735.0 877.8,735.1 877.0,735.1 876.2,735.1 875.4,735.1 874.6,735.1 873.8,735.1 873.0,735.1 872.2,735.1 871.4,735.2 870.6,735.1 869.8,735.1 869.0,735.1 868.2,735.3 867.4,735.8 866.6,736.6 865.8,735.2 865.0,736.3 864.2,736.0 863.4,735.7 862.6,735.9 861.8,735.8 861.0,736.2 860.2,735.1 859.4,735.6 858.6,735.3 857.8,735.5 857.0,735.6 856.2,735.1 855.4,735.3 854.6,735.2 853.8,735.6 853.0,735.3 852.2,735.3 851.4,735.8 850.6,735.7 849.8,735.3 849.0,735.7 848.2,736.2 847.4,736.0 846.6,735.1 845.8,735.3 844.9,735.4 844.1,735.3 843.3,735.5 842.5,736.3 841.7,736.7 840.9,735.3 840.1,737.0 839.3,735.7 838.5,736.6 837.7,738.4 836.9,737.2 836.1,736.5 835.3,736.4 834.5,738.5 833.7,736.1 832.9,739.2 832.1,736.3 831.3,738.6 830.5,736.9 829.7,737.9 828.9,736.5 828.1,736.0 827.3,738.8 826.5,737.4 825.7,737.7 824.9,737.5 824.1,738.3 823.3,739.3 822.5,736.4 821.7,738.2 820.9,740.2 820.1,738.1 819.3,736.6 818.5,737.4 817.7,736.8 816.9,742.7 816.1,743.6 815.3,739.9 814.5,741.2 813.7,740.5 812.9,739.8 812.1,747.0 811.3,745.9 810.5,745.2 809.7,742.7 808.9,746.6 808.1,741.6 807.3,747.0 806.5,747.4 805.7,746.5 804.9,740.9 804.1,740.6 803.3,739.9 802.5,737.7 801.7,738.2 800.9,737.3 800.1,736.4" fill="#f0c750"/><rect x="910.05" y="665.9" width="95.7" height="95.9" fill="#000" opacity=".33" filter="url(#ts)"/><rect x="910.65" y="665.3" width="94.5" height="94.5" fill="#525252"/><polygon points="912.6,688.0 913.5,685.1 914.3,682.9 915.1,681.2 915.9,679.2 916.7,683.7 917.5,680.7 918.3,682.2 919.1,685.1 919.9,680.7 920.7,684.4 921.5,679.2 922.3,683.4 923.1,685.6 923.9,684.8 924.7,682.0 925.5,681.7 926.3,679.1 927.1,683.9 927.9,682.6 928.7,680.4 929.5,685.9 930.3,686.5 931.1,687.6 931.9,685.6 932.7,685.0 933.5,687.6 934.3,687.9 935.1,684.6 935.9,688.3 936.7,688.4 937.5,685.2 938.3,687.8 939.1,687.7 939.9,685.4 940.7,687.7 941.5,687.9 942.3,688.3 943.1,686.4 943.9,686.5 944.7,686.7 945.5,687.6 946.3,686.9 947.1,688.5 947.9,688.0 948.7,685.9 949.5,688.4 950.3,686.5 951.1,687.8 951.9,684.8 952.7,687.4 953.5,686.8 954.3,687.6 955.1,688.6 955.9,688.4 956.7,688.5 957.5,687.3 958.3,688.7 959.1,688.8 959.9,688.6 960.7,688.0 961.5,689.1 962.3,689.1 963.1,688.4 963.9,688.5 964.7,688.2 965.5,689.1 966.3,688.2 967.1,688.9 967.9,688.3 968.7,688.7 969.5,688.8 970.3,688.3 971.1,688.9 971.9,688.9 972.7,688.0 973.5,687.3 974.3,687.8 975.1,687.6 975.9,688.2 976.7,687.9 977.5,688.8 978.3,688.5 979.1,688.6 979.9,689.1 980.7,689.1 981.5,689.1 982.3,689.1 983.1,689.1 983.9,689.1 984.7,689.1 985.5,689.1 986.3,689.1 987.1,689.1 987.9,689.1 988.7,689.2 989.5,689.2 990.3,689.3 991.1,689.3 991.9,689.4 992.7,689.5 993.5,689.5 994.3,689.5 995.1,689.5 995.9,689.5 996.7,689.5 997.5,689.5 998.3,689.5 999.1,689.5 999.9,689.5 1000.7,689.5 1001.5,689.5 1002.3,689.5 1003.1,689.5 1003.1,689.5 1002.3,689.5 1001.5,689.5 1000.7,689.5 999.9,689.5 999.1,689.5 998.3,689.5 997.5,689.5 996.7,689.5 995.9,689.5 995.1,689.5 994.3,689.5 993.5,689.5 992.7,689.5 991.9,689.6 991.1,689.7 990.3,689.7 989.5,689.8 988.7,689.8 987.9,689.9 987.1,689.9 986.3,689.9 985.5,689.9 984.7,689.9 983.9,689.9 983.1,689.9 982.3,689.9 981.5,689.9 980.7,689.9 979.9,690.1 979.1,690.4 978.3,689.9 977.5,690.5 976.7,691.1 975.9,691.4 975.1,690.1 974.3,690.1 973.5,691.0 972.7,690.7 971.9,690.1 971.1,690.8 970.3,690.6 969.5,690.0 968.7,689.9 967.9,690.2 967.1,690.6 966.3,690.3 965.5,689.9 964.7,690.6 963.9,690.1 963.1,689.9 962.3,689.9 961.5,690.2 960.7,690.1 959.9,690.9 959.1,690.3 958.3,690.7 957.5,691.6 956.7,691.2 955.9,691.8 955.1,690.9 954.3,691.4 953.5,691.0 952.7,693.6 951.9,691.2 951.1,692.0 950.3,691.6 949.5,690.8 948.7,690.8 947.9,691.7 947.1,692.4 946.3,691.1 945.5,691.2 944.7,692.2 943.9,691.1 943.1,691.8 942.3,693.0 941.5,693.1 940.7,692.4 939.9,690.4 939.1,690.6 938.3,691.4 937.5,692.5 936.7,691.5 935.9,693.6 935.1,693.4 934.3,691.4 933.5,692.7 932.7,692.0 931.9,691.4 931.1,696.2 930.3,694.4 929.5,694.8 928.7,691.6 927.9,697.4 927.1,696.3 926.3,699.7 925.5,694.4 924.7,693.4 923.9,701.8 923.1,697.7 922.3,692.7 921.5,699.8 920.7,692.7 919.9,700.4 919.1,699.8 918.3,699.8 917.5,693.4 916.7,696.6 915.9,698.9 915.1,693.3 914.3,693.2 913.5,692.8 912.6,690.5" fill="#f0c750"/><polygon points="912.6,730.8 913.5,733.3 914.3,728.2 915.1,724.9 915.9,729.0 916.7,726.5 917.5,730.5 918.3,731.5 919.1,728.6 919.9,729.9 920.7,731.2 921.5,732.0 922.3,731.7 923.1,725.9 923.9,728.0 924.7,728.7 925.5,731.7 926.3,731.6 927.1,731.0 927.9,731.9 928.7,731.8 929.5,728.1 930.3,729.0 931.1,730.7 931.9,731.9 932.7,732.7 933.5,732.2 934.3,729.9 935.1,733.3 935.9,731.1 936.7,733.6 937.5,732.3 938.3,732.6 939.1,732.5 939.9,733.5 940.7,732.1 941.5,733.6 942.3,732.2 943.1,734.0 943.9,733.6 944.7,733.6 945.5,733.5 946.3,733.2 947.1,733.8 947.9,733.9 948.7,732.7 949.5,733.5 950.3,733.7 951.1,731.6 951.9,731.4 952.7,733.0 953.5,731.3 954.3,732.6 955.1,733.9 955.9,733.0 956.7,733.1 957.5,734.2 958.3,734.1 959.1,734.1 959.9,733.8 960.7,733.7 961.5,734.1 962.3,733.3 963.1,733.2 963.9,733.9 964.7,734.2 965.5,733.9 966.3,732.5 967.1,733.7 967.9,733.3 968.7,733.6 969.5,733.1 970.3,733.4 971.1,733.7 971.9,733.6 972.7,733.8 973.5,734.1 974.3,734.3 975.1,734.3 975.9,734.3 976.7,734.2 977.5,734.3 978.3,734.3 979.1,734.3 979.9,734.3 980.7,734.3 981.5,734.3 982.3,734.3 983.1,734.3 983.9,734.3 984.7,734.3 985.5,734.3 986.3,734.3 987.1,734.3 987.9,734.3 988.7,734.4 989.5,734.4 990.3,734.5 991.1,734.5 991.9,734.6 992.7,734.7 993.5,734.7 994.3,734.7 995.1,734.7 995.9,734.7 996.7,734.7 997.5,734.7 998.3,734.7 999.1,734.7 999.9,734.7 1000.7,734.7 1001.5,734.7 1002.3,734.7 1003.1,734.7 1003.1,734.7 1002.3,734.7 1001.5,734.7 1000.7,734.7 999.9,734.7 999.1,734.7 998.3,734.7 997.5,734.7 996.7,734.7 995.9,734.7 995.1,734.7 994.3,734.7 993.5,734.7 992.7,734.7 991.9,734.8 991.1,734.9 990.3,734.9 989.5,735.0 988.7,735.0 987.9,735.1 987.1,735.1 986.3,735.1 985.5,735.1 984.7,735.1 983.9,735.1 983.1,735.1 982.3,735.1 981.5,735.1 980.7,735.1 979.9,735.1 979.1,735.1 978.3,735.1 977.5,735.1 976.7,735.2 975.9,735.1 975.1,735.1 974.3,735.1 973.5,735.5 972.7,735.6 971.9,735.2 971.1,735.2 970.3,736.7 969.5,735.9 968.7,735.3 967.9,735.6 967.1,737.1 966.3,736.6 965.5,736.4 964.7,736.4 963.9,736.2 963.1,735.6 962.3,735.3 961.5,735.1 960.7,736.1 959.9,735.4 959.1,736.1 958.3,736.0 957.5,735.5 956.7,735.8 955.9,736.4 955.1,735.7 954.3,737.6 953.5,738.2 952.7,738.1 951.9,738.6 951.1,737.2 950.3,736.0 949.5,737.3 948.7,736.1 947.9,738.3 947.1,735.9 946.3,736.5 945.5,736.2 944.7,735.5 943.9,737.3 943.1,737.0 942.3,736.8 941.5,735.9 940.7,735.6 939.9,737.8 939.1,737.9 938.3,737.7 937.5,737.8 936.7,735.9 935.9,737.4 935.1,737.8 934.3,738.3 933.5,738.6 932.7,738.1 931.9,739.0 931.1,738.1 930.3,741.9 929.5,742.3 928.7,737.0 927.9,737.1 927.1,743.3 926.3,738.1 925.5,737.7 924.7,740.0 923.9,742.0 923.1,740.3 922.3,738.2 921.5,743.4 920.7,740.2 919.9,744.3 919.1,737.6 918.3,738.9 917.5,740.7 916.7,743.5 915.9,742.5 915.1,738.8 914.3,737.1 913.5,739.6 912.6,738.1" fill="#f0c750"/><rect x="1022.5999999999999" y="665.9" width="95.7" height="95.9" fill="#000" opacity=".33" filter="url(#ts)"/><rect x="1023.1999999999999" y="665.3" width="94.5" height="94.5" fill="#525252"/><polygon points="1025.2,688.5 1026.0,687.0 1026.8,685.3 1027.6,684.8 1028.4,686.5 1029.2,679.7 1030.0,685.7 1030.8,678.2 1031.6,684.3 1032.4,686.7 1033.2,685.2 1034.0,686.4 1034.8,679.8 1035.6,682.5 1036.4,684.5 1037.2,686.7 1038.0,686.1 1038.8,684.8 1039.6,683.8 1040.4,686.2 1041.2,683.6 1042.0,684.8 1042.8,682.9 1043.6,687.0 1044.4,687.8 1045.2,684.8 1046.0,686.5 1046.8,685.8 1047.6,686.5 1048.4,687.6 1049.2,686.7 1050.0,687.4 1050.8,685.5 1051.6,686.8 1052.4,686.7 1053.2,685.4 1054.0,688.0 1054.8,686.6 1055.6,687.2 1056.4,688.2 1057.2,685.6 1058.0,687.8 1058.8,685.0 1059.6,687.1 1060.4,685.3 1061.2,685.8 1062.0,687.8 1062.8,686.5 1063.6,688.7 1064.4,688.6 1065.2,688.3 1066.0,688.8 1066.8,688.6 1067.6,688.4 1068.4,688.2 1069.2,688.4 1070.0,689.1 1070.9,688.2 1071.7,688.2 1072.5,688.8 1073.3,688.6 1074.1,689.1 1074.9,689.1 1075.7,689.1 1076.5,689.1 1077.3,689.0 1078.1,688.5 1078.9,689.1 1079.7,689.1 1080.5,689.1 1081.3,688.4 1082.1,688.9 1082.9,689.1 1083.7,689.0 1084.5,689.1 1085.3,687.8 1086.1,689.0 1086.9,689.0 1087.7,687.4 1088.5,688.0 1089.3,688.7 1090.1,688.1 1090.9,688.2 1091.7,689.1 1092.5,688.4 1093.3,688.8 1094.1,689.0 1094.9,689.1 1095.7,689.1 1096.5,689.1 1097.3,689.1 1098.1,689.1 1098.9,689.1 1099.7,689.1 1100.5,689.1 1101.3,689.1 1102.1,689.1 1102.9,689.1 1103.7,689.1 1104.5,689.1 1105.3,689.1 1106.1,689.1 1106.9,689.1 1107.7,689.2 1108.5,689.2 1109.3,689.3 1110.1,689.3 1110.9,689.4 1111.7,689.5 1112.5,689.5 1113.3,689.5 1114.1,689.5 1114.9,689.5 1115.7,689.5 1115.7,689.5 1114.9,689.5 1114.1,689.5 1113.3,689.5 1112.5,689.5 1111.7,689.5 1110.9,689.6 1110.1,689.7 1109.3,689.7 1108.5,689.8 1107.7,689.8 1106.9,689.9 1106.1,689.9 1105.3,689.9 1104.5,689.9 1103.7,689.9 1102.9,689.9 1102.1,689.9 1101.3,689.9 1100.5,689.9 1099.7,689.9 1098.9,689.9 1098.1,689.9 1097.3,689.9 1096.5,689.9 1095.7,689.9 1094.9,689.9 1094.1,689.9 1093.3,690.2 1092.5,690.5 1091.7,690.6 1090.9,690.1 1090.1,690.5 1089.3,690.1 1088.5,690.2 1087.7,691.3 1086.9,690.6 1086.1,690.6 1085.3,690.4 1084.5,689.9 1083.7,690.7 1082.9,690.0 1082.1,689.9 1081.3,690.0 1080.5,690.4 1079.7,689.9 1078.9,689.9 1078.1,690.2 1077.3,689.9 1076.5,689.9 1075.7,689.9 1074.9,690.0 1074.1,689.9 1073.3,689.9 1072.5,689.9 1071.7,690.2 1070.9,690.9 1070.0,691.0 1069.2,690.7 1068.4,690.5 1067.6,691.3 1066.8,690.3 1066.0,690.0 1065.2,690.9 1064.4,690.4 1063.6,690.4 1062.8,692.8 1062.0,691.1 1061.2,691.0 1060.4,693.4 1059.6,692.3 1058.8,690.8 1058.0,691.8 1057.2,690.9 1056.4,690.7 1055.6,690.8 1054.8,690.5 1054.0,691.3 1053.2,692.9 1052.4,692.1 1051.6,690.5 1050.8,691.6 1050.0,693.2 1049.2,692.2 1048.4,692.9 1047.6,694.1 1046.8,693.7 1046.0,690.9 1045.2,691.2 1044.4,692.5 1043.6,696.5 1042.8,695.0 1042.0,693.8 1041.2,692.3 1040.4,696.7 1039.6,694.2 1038.8,693.4 1038.0,697.0 1037.2,692.3 1036.4,696.2 1035.6,697.1 1034.8,693.0 1034.0,693.9 1033.2,692.8 1032.4,699.7 1031.6,701.2 1030.8,696.5 1030.0,697.0 1029.2,692.6 1028.4,695.0 1027.6,691.9 1026.8,691.4 1026.0,690.9 1025.2,691.8" fill="#f0c750"/><polygon points="1025.2,732.2 1026.0,732.6 1026.8,727.2 1027.6,731.6 1028.4,727.0 1029.2,730.8 1030.0,731.4 1030.8,724.6 1031.6,731.7 1032.4,732.0 1033.2,729.1 1034.0,730.9 1034.8,729.7 1035.6,731.1 1036.4,729.9 1037.2,730.8 1038.0,726.2 1038.8,726.3 1039.6,731.4 1040.4,729.9 1041.2,728.6 1042.0,728.8 1042.8,730.0 1043.6,729.5 1044.4,729.8 1045.2,731.7 1046.0,732.4 1046.8,731.8 1047.6,732.6 1048.4,731.6 1049.2,730.6 1050.0,732.9 1050.8,732.6 1051.6,733.5 1052.4,731.7 1053.2,731.8 1054.0,731.7 1054.8,731.8 1055.6,731.8 1056.4,733.3 1057.2,732.1 1058.0,732.3 1058.8,733.8 1059.6,733.7 1060.4,733.7 1061.2,733.0 1062.0,733.4 1062.8,730.8 1063.6,732.5 1064.4,733.2 1065.2,733.5 1066.0,731.9 1066.8,732.5 1067.6,733.3 1068.4,733.3 1069.2,733.6 1070.0,733.1 1070.9,734.0 1071.7,733.5 1072.5,733.5 1073.3,734.2 1074.1,734.2 1074.9,734.1 1075.7,733.7 1076.5,734.3 1077.3,734.3 1078.1,734.1 1078.9,733.7 1079.7,734.3 1080.5,734.2 1081.3,734.3 1082.1,734.3 1082.9,734.3 1083.7,734.2 1084.5,734.3 1085.3,734.3 1086.1,734.0 1086.9,733.7 1087.7,734.3 1088.5,734.0 1089.3,734.3 1090.1,733.9 1090.9,734.1 1091.7,734.3 1092.5,733.8 1093.3,734.1 1094.1,733.9 1094.9,734.3 1095.7,733.8 1096.5,734.3 1097.3,734.3 1098.1,734.3 1098.9,734.3 1099.7,734.3 1100.5,734.3 1101.3,734.3 1102.1,734.3 1102.9,734.3 1103.7,734.3 1104.5,734.3 1105.3,734.3 1106.1,734.3 1106.9,734.3 1107.7,734.4 1108.5,734.4 1109.3,734.5 1110.1,734.5 1110.9,734.6 1111.7,734.7 1112.5,734.7 1113.3,734.7 1114.1,734.7 1114.9,734.7 1115.7,734.7 1115.7,734.7 1114.9,734.7 1114.1,734.7 1113.3,734.7 1112.5,734.7 1111.7,734.7 1110.9,734.8 1110.1,734.9 1109.3,734.9 1108.5,735.0 1107.7,735.0 1106.9,735.1 1106.1,735.1 1105.3,735.1 1104.5,735.1 1103.7,735.1 1102.9,735.1 1102.1,735.1 1101.3,735.1 1100.5,735.1 1099.7,735.1 1098.9,735.1 1098.1,735.1 1097.3,735.1 1096.5,735.1 1095.7,735.4 1094.9,735.3 1094.1,735.5 1093.3,735.3 1092.5,735.4 1091.7,736.1 1090.9,735.2 1090.1,735.2 1089.3,736.1 1088.5,735.2 1087.7,735.6 1086.9,735.4 1086.1,735.6 1085.3,735.4 1084.5,735.2 1083.7,735.4 1082.9,735.1 1082.1,735.1 1081.3,735.4 1080.5,735.4 1079.7,735.5 1078.9,735.3 1078.1,735.6 1077.3,735.1 1076.5,735.2 1075.7,735.5 1074.9,735.1 1074.1,735.1 1073.3,735.6 1072.5,735.9 1071.7,735.1 1070.9,736.1 1070.0,736.2 1069.2,735.2 1068.4,735.2 1067.6,735.2 1066.8,735.4 1066.0,737.2 1065.2,735.5 1064.4,736.3 1063.6,736.9 1062.8,738.7 1062.0,735.8 1061.2,739.0 1060.4,736.6 1059.6,735.8 1058.8,735.7 1058.0,736.4 1057.2,738.0 1056.4,736.2 1055.6,736.1 1054.8,737.5 1054.0,737.5 1053.2,737.7 1052.4,737.0 1051.6,736.3 1050.8,737.1 1050.0,737.7 1049.2,735.7 1048.4,738.9 1047.6,738.2 1046.8,737.3 1046.0,738.0 1045.2,737.0 1044.4,740.0 1043.6,738.1 1042.8,739.4 1042.0,741.9 1041.2,741.8 1040.4,739.8 1039.6,737.6 1038.8,741.6 1038.0,742.1 1037.2,743.0 1036.4,738.7 1035.6,741.5 1034.8,744.1 1034.0,738.3 1033.2,737.8 1032.4,737.8 1031.6,739.3 1030.8,742.7 1030.0,741.2 1029.2,738.8 1028.4,744.6 1027.6,740.3 1026.8,740.3 1026.0,736.2 1025.2,736.6" fill="#f0c750"/><rect x="347.29999999999995" y="794.2" width="95.7" height="95.9" fill="#000" opacity=".33" filter="url(#ts)"/><rect x="347.9" y="793.6" width="94.5" height="94.5" fill="#525252"/><polygon points="349.9,815.8 350.7,814.2 351.5,813.5 352.3,809.9 353.1,813.4 353.9,808.2 354.7,815.0 355.5,806.3 356.3,810.4 357.1,815.1 357.9,815.0 358.7,813.9 359.5,812.0 360.3,807.8 361.1,810.1 361.9,810.0 362.7,813.9 363.5,807.5 364.3,811.0 365.1,814.9 365.9,815.7 366.7,814.3 367.5,814.6 368.3,811.8 369.1,815.7 369.9,814.7 370.7,815.2 371.5,814.3 372.3,816.0 373.1,815.9 373.9,814.3 374.7,816.3 375.5,816.8 376.3,816.6 377.1,816.0 377.9,815.2 378.7,815.5 379.5,816.2 380.3,816.6 381.1,815.0 381.9,814.5 382.7,816.1 383.5,815.0 384.3,813.3 385.1,816.2 385.9,815.9 386.7,816.6 387.5,815.0 388.3,815.2 389.1,815.9 389.9,816.0 390.7,815.2 391.5,817.1 392.3,815.9 393.1,817.2 393.9,816.0 394.7,816.1 395.6,816.8 396.4,817.4 397.2,816.3 398.0,816.8 398.8,816.6 399.6,817.3 400.4,816.9 401.2,817.4 402.0,816.8 402.8,817.4 403.6,817.4 404.4,817.4 405.2,817.4 406.0,817.4 406.8,817.4 407.6,817.0 408.4,817.2 409.2,817.3 410.0,817.4 410.8,816.8 411.6,816.6 412.4,816.9 413.2,816.6 414.0,816.0 414.8,816.7 415.6,816.0 416.4,816.4 417.2,816.1 418.0,816.6 418.8,816.5 419.6,816.8 420.4,817.2 421.2,817.4 422.0,817.4 422.8,817.4 423.6,817.4 424.4,817.4 425.2,817.4 426.0,817.4 426.8,817.4 427.6,817.4 428.4,817.4 429.2,817.4 430.0,817.4 430.8,817.4 431.6,817.4 432.4,817.4 433.2,817.4 434.0,817.4 434.8,817.4 435.6,817.4 436.4,817.4 437.2,817.4 438.0,817.4 438.8,817.4 439.6,817.4 440.4,817.4 440.4,818.2 439.6,818.2 438.8,818.2 438.0,818.2 437.2,818.2 436.4,818.2 435.6,818.2 434.8,818.2 434.0,818.2 433.2,818.2 432.4,818.2 431.6,818.2 430.8,818.2 430.0,818.2 429.2,818.2 428.4,818.2 427.6,818.2 426.8,818.2 426.0,818.2 425.2,818.2 424.4,818.2 423.6,818.2 422.8,818.2 422.0,818.2 421.2,818.2 420.4,818.4 419.6,818.8 418.8,818.5 418.0,819.3 417.2,818.6 416.4,819.4 415.6,819.3 414.8,819.2 414.0,818.2 413.2,818.4 412.4,818.5 411.6,818.2 410.8,818.6 410.0,818.2 409.2,818.2 408.4,818.4 407.6,818.7 406.8,818.2 406.0,818.3 405.2,818.2 404.4,818.3 403.6,818.2 402.8,818.8 402.0,818.5 401.2,818.5 400.4,818.2 399.6,818.2 398.8,818.7 398.0,818.3 397.2,818.3 396.4,818.2 395.6,818.6 394.7,819.4 393.9,818.4 393.1,819.3 392.3,818.6 391.5,820.2 390.7,818.7 389.9,819.8 389.1,821.6 388.3,819.6 387.5,819.3 386.7,819.0 385.9,819.6 385.1,821.5 384.3,819.2 383.5,818.9 382.7,821.2 381.9,819.0 381.1,819.1 380.3,821.2 379.5,818.9 378.7,818.7 377.9,818.8 377.1,818.9 376.3,820.0 375.5,821.1 374.7,818.9 373.9,819.0 373.1,822.6 372.3,819.1 371.5,822.1 370.7,819.2 369.9,824.0 369.1,823.9 368.3,819.4 367.5,825.0 366.7,824.6 365.9,824.3 365.1,821.1 364.3,821.5 363.5,826.4 362.7,828.8 361.9,823.5 361.1,824.0 360.3,824.2 359.5,823.4 358.7,820.5 357.9,821.4 357.1,824.3 356.3,821.1 355.5,825.6 354.7,829.6 353.9,826.0 353.1,820.8 352.3,820.3 351.5,822.9 350.7,819.6 349.9,820.0" fill="#f0c750"/><polygon points="349.9,861.0 350.7,859.5 351.5,860.8 352.3,860.0 353.1,858.0 353.9,859.1 354.7,855.2 355.5,858.6 356.3,858.9 357.1,859.4 357.9,858.1 358.7,854.7 359.5,860.2 360.3,859.6 361.1,852.5 361.9,860.6 362.7,856.6 363.5,854.6 364.3,856.4 365.1,858.7 365.9,861.0 366.7,857.7 367.5,857.7 368.3,856.7 369.1,860.0 369.9,857.4 370.7,861.3 371.5,858.4 372.3,859.3 373.1,859.9 373.9,858.9 374.7,859.0 375.5,862.0 376.3,860.2 377.1,860.9 377.9,862.2 378.7,861.5 379.5,862.1 380.3,859.5 381.1,859.9 381.9,859.6 382.7,858.4 383.5,861.5 384.3,861.4 385.1,858.8 385.9,859.5 386.7,861.1 387.5,862.0 388.3,861.7 389.1,862.3 389.9,862.1 390.7,862.4 391.5,861.9 392.3,862.3 393.1,862.4 393.9,862.3 394.7,861.5 395.6,862.1 396.4,861.8 397.2,862.2 398.0,862.6 398.8,862.6 399.6,862.4 400.4,862.2 401.2,862.5 402.0,862.3 402.8,862.6 403.6,862.6 404.4,862.6 405.2,862.5 406.0,862.5 406.8,862.3 407.6,862.6 408.4,862.6 409.2,862.6 410.0,862.6 410.8,862.6 411.6,862.6 412.4,862.0 413.2,861.7 414.0,862.2 414.8,861.4 415.6,861.5 416.4,861.6 417.2,861.5 418.0,862.3 418.8,861.7 419.6,862.4 420.4,862.3 421.2,862.7 422.0,862.5 422.8,862.6 423.6,862.9 424.4,862.9 425.2,862.9 426.0,862.9 426.8,863.0 427.6,862.9 428.4,863.0 429.2,863.0 430.0,863.0 430.8,863.0 431.6,863.0 432.4,863.0 433.2,863.0 434.0,863.0 434.8,863.0 435.6,863.0 436.4,863.0 437.2,863.0 438.0,863.0 438.8,863.0 439.6,863.0 440.4,863.0 440.4,863.0 439.6,863.0 438.8,863.0 438.0,863.0 437.2,863.0 436.4,863.0 435.6,863.0 434.8,863.0 434.0,863.0 433.2,863.0 432.4,863.0 431.6,863.0 430.8,863.0 430.0,863.0 429.2,863.0 428.4,863.0 427.6,863.1 426.8,863.0 426.0,863.1 425.2,863.1 424.4,863.1 423.6,863.2 422.8,863.1 422.0,863.2 421.2,863.3 420.4,863.4 419.6,864.0 418.8,864.1 418.0,864.1 417.2,864.5 416.4,864.4 415.6,864.0 414.8,863.6 414.0,863.5 413.2,863.4 412.4,863.9 411.6,863.5 410.8,863.7 410.0,863.4 409.2,863.5 408.4,863.4 407.6,863.4 406.8,863.4 406.0,863.4 405.2,863.7 404.4,863.8 403.6,863.4 402.8,863.4 402.0,863.4 401.2,863.6 400.4,864.1 399.6,864.2 398.8,863.4 398.0,864.2 397.2,863.8 396.4,863.8 395.6,863.4 394.7,863.6 393.9,864.1 393.1,864.0 392.3,863.8 391.5,864.1 390.7,864.3 389.9,863.9 389.1,863.6 388.3,865.3 387.5,866.1 386.7,863.9 385.9,866.2 385.1,864.2 384.3,864.2 383.5,864.3 382.7,865.1 381.9,865.3 381.1,865.6 380.3,864.7 379.5,865.3 378.7,866.2 377.9,863.9 377.1,864.3 376.3,864.0 375.5,866.7 374.7,866.9 373.9,865.5 373.1,865.3 372.3,865.1 371.5,864.4 370.7,866.7 369.9,865.4 369.1,866.6 368.3,867.9 367.5,865.0 366.7,865.1 365.9,868.3 365.1,870.1 364.3,867.5 363.5,869.6 362.7,872.6 361.9,865.4 361.1,873.3 360.3,866.6 359.5,868.3 358.7,865.8 357.9,872.5 357.1,869.3 356.3,871.3 355.5,871.8 354.7,872.9 353.9,866.5 353.1,867.7 352.3,869.2 351.5,866.4 350.7,864.6 349.9,864.7" fill="#f0c750"/><rect x="459.84999999999997" y="794.2" width="95.7" height="95.9" fill="#000" opacity=".33" filter="url(#ts)"/><rect x="460.45" y="793.6" width="94.5" height="94.5" fill="#525252"/><polygon points="462.4,816.8 463.3,815.4 464.1,811.8 464.9,812.2 465.7,810.6 466.5,812.7 467.3,807.9 468.1,808.9 468.9,810.3 469.7,813.0 470.5,815.3 471.3,807.8 472.1,815.1 472.9,807.4 473.7,812.8 474.5,813.8 475.3,814.9 476.1,815.6 476.9,810.6 477.7,814.0 478.5,813.9 479.3,816.1 480.1,811.1 480.9,813.5 481.7,815.3 482.5,813.9 483.3,816.0 484.1,815.1 484.9,815.3 485.7,814.1 486.5,815.5 487.3,815.9 488.1,814.9 488.9,815.8 489.7,815.4 490.5,816.6 491.3,815.8 492.1,816.3 492.9,816.7 493.7,814.8 494.5,814.7 495.3,814.7 496.1,816.7 496.9,814.3 497.7,816.4 498.5,816.1 499.3,816.8 500.1,815.1 500.9,813.6 501.7,816.9 502.5,815.0 503.3,815.8 504.1,816.3 504.9,816.3 505.7,815.8 506.5,817.3 507.3,816.3 508.1,816.3 508.9,816.8 509.7,817.4 510.5,817.3 511.3,816.9 512.1,816.7 512.9,817.4 513.7,816.7 514.5,817.1 515.3,816.8 516.1,817.3 516.9,816.9 517.7,817.2 518.5,817.4 519.3,817.2 520.1,817.0 520.9,816.8 521.7,816.5 522.5,816.6 523.3,817.4 524.1,817.1 524.9,816.5 525.7,816.6 526.5,816.8 527.3,817.0 528.1,817.1 528.9,816.9 529.7,817.4 530.5,817.2 531.3,817.4 532.1,817.4 532.9,817.4 533.7,817.4 534.5,817.4 535.3,817.4 536.1,817.4 536.9,817.4 537.7,817.4 538.5,817.4 539.3,817.4 540.1,817.4 540.9,817.4 541.7,817.4 542.5,817.4 543.3,817.4 544.1,817.4 544.9,817.4 545.7,817.4 546.5,817.4 547.3,817.4 548.1,817.4 548.9,817.4 549.7,817.4 550.5,817.4 551.3,817.4 552.1,817.4 553.0,817.4 553.0,818.2 552.1,818.2 551.3,818.2 550.5,818.2 549.7,818.2 548.9,818.2 548.1,818.2 547.3,818.2 546.5,818.2 545.7,818.2 544.9,818.2 544.1,818.2 543.3,818.2 542.5,818.2 541.7,818.2 540.9,818.2 540.1,818.2 539.3,818.2 538.5,818.2 537.7,818.2 536.9,818.2 536.1,818.2 535.3,818.2 534.5,818.2 533.7,818.2 532.9,818.2 532.1,818.2 531.3,818.4 530.5,818.4 529.7,818.2 528.9,818.2 528.1,818.4 527.3,818.4 526.5,819.1 525.7,818.3 524.9,818.9 524.1,819.5 523.3,818.5 522.5,818.5 521.7,818.6 520.9,818.9 520.1,818.8 519.3,818.2 518.5,818.5 517.7,818.2 516.9,818.6 516.1,818.4 515.3,818.6 514.5,818.8 513.7,818.5 512.9,818.4 512.1,818.4 511.3,818.2 510.5,818.7 509.7,818.3 508.9,818.8 508.1,818.6 507.3,818.4 506.5,818.5 505.7,819.7 504.9,818.6 504.1,819.2 503.3,818.8 502.5,820.7 501.7,819.3 500.9,820.0 500.1,822.2 499.3,818.8 498.5,819.2 497.7,821.0 496.9,818.7 496.1,820.5 495.3,819.2 494.5,818.7 493.7,819.3 492.9,819.3 492.1,818.8 491.3,818.5 490.5,819.1 489.7,818.6 488.9,818.9 488.1,818.8 487.3,819.5 486.5,819.2 485.7,819.9 484.9,818.9 484.1,821.9 483.3,820.0 482.5,819.3 481.7,822.0 480.9,820.4 480.1,824.6 479.3,823.1 478.5,821.1 477.7,822.8 476.9,821.7 476.1,820.5 475.3,824.8 474.5,824.5 473.7,820.7 472.9,820.6 472.1,828.7 471.3,823.6 470.5,820.4 469.7,827.0 468.9,822.1 468.1,820.4 467.3,820.4 466.5,820.9 465.7,820.8 464.9,823.0 464.1,822.9 463.3,819.8 462.4,818.7" fill="#f0c750"/><polygon points="462.4,860.5 463.3,859.1 464.1,860.8 464.9,859.3 465.7,855.7 466.5,858.9 467.3,856.9 468.1,860.1 468.9,859.0 469.7,859.6 470.5,856.2 471.3,856.5 472.1,857.1 472.9,855.0 473.7,859.7 474.5,858.1 475.3,855.4 476.1,858.9 476.9,860.7 477.7,860.9 478.5,856.2 479.3,860.7 480.1,857.5 480.9,860.4 481.7,861.4 482.5,859.1 483.3,860.1 484.1,861.8 484.9,860.8 485.7,861.8 486.5,860.9 487.3,860.5 488.1,861.5 488.9,861.7 489.7,860.9 490.5,862.2 491.3,860.8 492.1,861.7 492.9,861.9 493.7,860.8 494.5,861.9 495.3,862.3 496.1,861.7 496.9,859.5 497.7,861.7 498.5,859.7 499.3,861.1 500.1,859.3 500.9,861.5 501.7,860.6 502.5,860.3 503.3,860.4 504.1,861.5 504.9,862.0 505.7,861.4 506.5,862.2 507.3,862.4 508.1,862.5 508.9,862.1 509.7,862.5 510.5,862.4 511.3,862.3 512.1,862.6 512.9,862.6 513.7,862.0 514.5,862.1 515.3,862.6 516.1,862.6 516.9,862.2 517.7,862.1 518.5,862.4 519.3,862.4 520.1,862.6 520.9,862.2 521.7,862.6 522.5,861.5 523.3,862.6 524.1,862.3 524.9,862.1 525.7,862.5 526.5,862.5 527.3,861.5 528.1,862.6 528.9,862.6 529.7,862.2 530.5,862.6 531.3,862.5 532.1,862.6 532.9,862.7 533.7,862.8 534.5,862.8 535.3,862.9 536.1,862.9 536.9,862.9 537.7,862.9 538.5,863.0 539.3,863.0 540.1,863.0 540.9,862.9 541.7,863.0 542.5,863.0 543.3,863.0 544.1,863.0 544.9,863.0 545.7,863.0 546.5,863.0 547.3,863.0 548.1,863.0 548.9,863.0 549.7,863.0 550.5,863.0 551.3,863.0 552.1,863.0 553.0,863.0 553.0,863.0 552.1,863.0 551.3,863.0 550.5,863.0 549.7,863.0 548.9,863.0 548.1,863.0 547.3,863.0 546.5,863.0 545.7,863.0 544.9,863.0 544.1,863.0 543.3,863.0 542.5,863.0 541.7,863.0 540.9,863.0 540.1,863.0 539.3,863.0 538.5,863.0 537.7,863.0 536.9,863.1 536.1,863.1 535.3,863.1 534.5,863.2 533.7,863.2 532.9,863.3 532.1,863.4 531.3,863.4 530.5,863.4 529.7,863.8 528.9,864.1 528.1,863.4 527.3,863.6 526.5,864.3 525.7,863.6 524.9,864.4 524.1,864.2 523.3,863.9 522.5,863.4 521.7,863.4 520.9,864.2 520.1,863.4 519.3,863.7 518.5,863.6 517.7,863.4 516.9,863.4 516.1,863.4 515.3,863.7 514.5,863.4 513.7,863.8 512.9,863.6 512.1,863.4 511.3,863.8 510.5,863.6 509.7,863.4 508.9,863.7 508.1,863.5 507.3,864.3 506.5,863.9 505.7,864.1 504.9,863.6 504.1,864.9 503.3,864.4 502.5,865.3 501.7,866.4 500.9,866.4 500.1,865.7 499.3,866.5 498.5,865.3 497.7,866.6 496.9,865.8 496.1,864.6 495.3,866.0 494.5,864.2 493.7,863.9 492.9,864.7 492.1,863.7 491.3,865.2 490.5,864.8 489.7,865.7 488.9,864.7 488.1,864.5 487.3,866.5 486.5,865.7 485.7,864.0 484.9,865.3 484.1,865.4 483.3,865.8 482.5,866.3 481.7,864.3 480.9,866.6 480.1,864.8 479.3,866.9 478.5,865.3 477.7,868.1 476.9,867.6 476.1,867.7 475.3,869.0 474.5,865.2 473.7,869.7 472.9,865.4 472.1,872.2 471.3,872.1 470.5,866.7 469.7,865.4 468.9,869.2 468.1,867.8 467.3,872.3 466.5,866.2 465.7,868.0 464.9,871.2 464.1,866.3 463.3,864.5 462.4,866.2" fill="#f0c750"/><rect x="572.4" y="794.2" width="95.7" height="95.9" fill="#000" opacity=".33" filter="url(#ts)"/><rect x="573.0" y="793.6" width="94.5" height="94.5" fill="#525252"/><polygon points="575.0,813.7 575.8,815.5 576.6,814.8 577.4,814.7 578.2,813.5 579.0,811.4 579.8,809.3 580.6,812.9 581.4,805.7 582.2,806.6 583.0,807.5 583.8,806.8 584.6,806.0 585.4,807.3 586.2,811.4 587.0,811.5 587.8,814.5 588.6,808.2 589.4,810.0 590.2,809.9 591.0,811.1 591.8,815.1 592.6,813.1 593.4,813.8 594.2,814.4 595.0,814.1 595.8,815.6 596.6,815.1 597.4,813.8 598.2,815.3 599.0,812.7 599.8,816.4 600.6,813.8 601.4,816.5 602.2,814.0 603.0,814.5 603.8,814.4 604.6,815.0 605.4,814.1 606.2,815.0 607.0,815.3 607.8,815.3 608.6,814.6 609.4,816.0 610.2,814.3 611.0,816.1 611.8,814.2 612.6,814.7 613.4,815.3 614.2,816.5 615.0,813.2 615.8,816.3 616.6,815.7 617.4,816.3 618.2,815.5 619.0,816.9 619.8,815.7 620.7,816.8 621.5,817.1 622.3,816.9 623.1,816.5 623.9,816.7 624.7,817.3 625.5,817.2 626.3,817.3 627.1,817.2 627.9,817.2 628.7,816.8 629.5,817.4 630.3,817.4 631.1,817.1 631.9,817.3 632.7,817.4 633.5,817.4 634.3,817.3 635.1,817.0 635.9,817.2 636.7,816.7 637.5,815.4 638.3,816.5 639.1,815.9 639.9,815.8 640.7,817.3 641.5,817.2 642.3,817.4 643.1,817.3 643.9,817.1 644.7,817.3 645.5,817.3 646.3,817.4 647.1,817.4 647.9,817.4 648.7,817.4 649.5,817.4 650.3,817.4 651.1,817.4 651.9,817.4 652.7,817.4 653.5,817.4 654.3,817.4 655.1,817.4 655.9,817.4 656.7,817.4 657.5,817.4 658.3,817.4 659.1,817.4 659.9,817.4 660.7,817.4 661.5,817.4 662.3,817.4 663.1,817.4 663.9,817.4 664.7,817.4 665.5,817.4 665.5,818.2 664.7,818.2 663.9,818.2 663.1,818.2 662.3,818.2 661.5,818.2 660.7,818.2 659.9,818.2 659.1,818.2 658.3,818.2 657.5,818.2 656.7,818.2 655.9,818.2 655.1,818.2 654.3,818.2 653.5,818.2 652.7,818.2 651.9,818.2 651.1,818.2 650.3,818.2 649.5,818.2 648.7,818.2 647.9,818.2 647.1,818.2 646.3,818.2 645.5,818.2 644.7,818.2 643.9,818.2 643.1,818.3 642.3,818.5 641.5,819.3 640.7,818.2 639.9,819.1 639.1,818.7 638.3,818.5 637.5,818.4 636.7,819.8 635.9,818.7 635.1,818.2 634.3,818.4 633.5,819.1 632.7,819.0 631.9,818.4 631.1,818.3 630.3,818.4 629.5,818.8 628.7,818.6 627.9,818.2 627.1,818.2 626.3,818.2 625.5,818.3 624.7,818.7 623.9,819.2 623.1,818.4 622.3,819.5 621.5,818.2 620.7,819.2 619.8,819.0 619.0,819.0 618.2,818.4 617.4,819.1 616.6,818.7 615.8,819.2 615.0,819.0 614.2,818.9 613.4,820.0 612.6,819.1 611.8,821.0 611.0,819.1 610.2,819.1 609.4,819.2 608.6,819.6 607.8,819.5 607.0,820.1 606.2,819.0 605.4,820.1 604.6,818.9 603.8,819.5 603.0,819.1 602.2,821.7 601.4,819.9 600.6,820.9 599.8,821.9 599.0,819.1 598.2,821.9 597.4,823.6 596.6,819.4 595.8,819.9 595.0,820.2 594.2,819.9 593.4,822.8 592.6,820.8 591.8,820.7 591.0,822.5 590.2,820.7 589.4,824.2 588.6,829.7 587.8,828.3 587.0,822.9 586.2,823.5 585.4,825.8 584.6,824.9 583.8,822.5 583.0,831.0 582.2,829.2 581.4,829.0 580.6,821.6 579.8,820.9 579.0,829.4 578.2,822.9 577.4,824.2 576.6,824.7 575.8,819.8 575.0,819.2" fill="#f0c750"/><polygon points="575.0,862.0 575.8,860.8 576.6,855.6 577.4,856.5 578.2,858.5 579.0,857.4 579.8,850.8 580.6,860.1 581.4,850.6 582.2,855.2 583.0,854.3 583.8,857.3 584.6,859.2 585.4,860.1 586.2,853.9 587.0,858.4 587.8,853.2 588.6,852.9 589.4,857.9 590.2,860.6 591.0,855.3 591.8,859.7 592.6,858.2 593.4,857.7 594.2,856.3 595.0,858.5 595.8,860.9 596.6,859.3 597.4,857.8 598.2,859.8 599.0,859.1 599.8,858.9 600.6,860.7 601.4,861.7 602.2,860.0 603.0,862.1 603.8,861.3 604.6,861.6 605.4,859.8 606.2,861.4 607.0,861.7 607.8,862.0 608.6,860.1 609.4,860.6 610.2,859.6 611.0,861.4 611.8,860.6 612.6,858.2 613.4,860.6 614.2,861.0 615.0,860.0 615.8,860.4 616.6,861.0 617.4,861.6 618.2,861.1 619.0,861.9 619.8,861.8 620.7,861.7 621.5,862.4 622.3,862.1 623.1,862.0 623.9,862.2 624.7,862.4 625.5,862.0 626.3,862.5 627.1,862.6 627.9,862.0 628.7,862.0 629.5,862.2 630.3,862.6 631.1,862.6 631.9,862.5 632.7,862.6 633.5,862.6 634.3,861.6 635.1,862.2 635.9,861.9 636.7,861.1 637.5,862.0 638.3,862.1 639.1,861.9 639.9,862.3 640.7,862.2 641.5,861.3 642.3,862.2 643.1,862.6 643.9,862.2 644.7,862.6 645.5,862.6 646.3,862.6 647.1,862.6 647.9,862.6 648.7,862.6 649.5,862.6 650.3,862.6 651.1,862.6 651.9,862.6 652.7,862.6 653.5,862.7 654.3,862.8 655.1,862.8 655.9,862.9 656.7,862.9 657.5,863.0 658.3,863.0 659.1,863.0 659.9,863.0 660.7,863.0 661.5,863.0 662.3,863.0 663.1,863.0 663.9,863.0 664.7,863.0 665.5,863.0 665.5,863.0 664.7,863.0 663.9,863.0 663.1,863.0 662.3,863.0 661.5,863.0 660.7,863.0 659.9,863.0 659.1,863.0 658.3,863.0 657.5,863.0 656.7,863.1 655.9,863.1 655.1,863.2 654.3,863.2 653.5,863.3 652.7,863.4 651.9,863.4 651.1,863.4 650.3,863.4 649.5,863.4 648.7,863.4 647.9,863.4 647.1,863.4 646.3,863.4 645.5,863.4 644.7,863.5 643.9,863.6 643.1,863.4 642.3,863.4 641.5,863.9 640.7,863.5 639.9,864.0 639.1,864.2 638.3,863.6 637.5,864.4 636.7,864.2 635.9,864.6 635.1,864.1 634.3,863.4 633.5,863.4 632.7,863.4 631.9,863.4 631.1,863.4 630.3,864.0 629.5,863.5 628.7,864.1 627.9,863.5 627.1,863.4 626.3,863.4 625.5,863.9 624.7,863.4 623.9,864.4 623.1,863.4 622.3,863.6 621.5,864.3 620.7,863.5 619.8,864.6 619.0,863.9 618.2,864.5 617.4,864.8 616.6,864.3 615.8,866.9 615.0,867.6 614.2,867.3 613.4,867.6 612.6,864.8 611.8,865.7 611.0,867.3 610.2,865.1 609.4,864.2 608.6,864.2 607.8,865.9 607.0,864.8 606.2,866.1 605.4,864.4 604.6,864.5 603.8,865.1 603.0,864.2 602.2,865.8 601.4,864.5 600.6,865.9 599.8,866.5 599.0,866.2 598.2,865.2 597.4,867.4 596.6,868.3 595.8,864.9 595.0,869.2 594.2,867.8 593.4,864.9 592.6,865.2 591.8,868.3 591.0,865.4 590.2,869.5 589.4,865.6 588.6,866.2 587.8,866.3 587.0,873.7 586.2,874.4 585.4,866.7 584.6,871.8 583.8,867.5 583.0,866.6 582.2,871.3 581.4,872.7 580.6,868.2 579.8,872.3 579.0,869.3 578.2,868.9 577.4,868.6 576.6,866.2 575.8,868.8 575.0,865.5" fill="#f0c750"/><rect x="684.9499999999999" y="794.2" width="95.7" height="95.9" fill="#000" opacity=".33" filter="url(#ts)"/><rect x="685.55" y="793.6" width="94.5" height="94.5" fill="#525252"/><polygon points="687.5,813.5 688.4,815.6 689.2,812.0 690.0,810.4 690.8,807.8 691.6,813.7 692.4,812.5 693.2,807.5 694.0,814.2 694.8,809.2 695.6,809.4 696.4,812.7 697.2,813.8 698.0,812.1 698.8,811.7 699.6,806.8 700.4,814.7 701.2,810.7 702.0,815.2 702.8,812.6 703.6,813.4 704.4,810.9 705.2,815.7 706.0,815.9 706.8,816.2 707.6,816.0 708.4,816.2 709.2,813.7 710.0,815.1 710.8,815.3 711.6,816.5 712.4,816.3 713.2,813.6 714.0,816.6 714.8,815.4 715.6,815.1 716.4,816.1 717.2,815.7 718.0,816.6 718.8,816.7 719.6,816.0 720.4,816.2 721.2,816.3 722.0,815.2 722.8,813.4 723.6,816.1 724.4,816.4 725.2,816.1 726.0,816.1 726.8,814.9 727.6,816.2 728.4,816.2 729.2,815.8 730.0,815.6 730.8,815.6 731.6,816.8 732.4,816.7 733.2,817.1 734.0,816.7 734.8,816.2 735.6,817.2 736.4,817.4 737.2,816.8 738.0,817.3 738.8,817.0 739.6,816.8 740.4,817.3 741.2,817.4 742.0,817.4 742.8,817.4 743.6,817.4 744.4,817.0 745.2,816.5 746.0,816.9 746.8,817.0 747.6,816.9 748.4,816.0 749.2,816.3 750.0,816.5 750.8,815.8 751.6,815.6 752.4,816.1 753.2,817.4 754.0,817.2 754.8,817.3 755.6,817.4 756.4,817.2 757.2,817.4 758.0,817.4 758.8,817.4 759.6,817.4 760.4,817.4 761.2,817.4 762.0,817.4 762.8,817.4 763.6,817.4 764.4,817.4 765.2,817.4 766.0,817.4 766.8,817.4 767.6,817.4 768.4,817.4 769.2,817.4 770.0,817.4 770.8,817.4 771.6,817.4 772.4,817.4 773.2,817.4 774.0,817.4 774.8,817.4 775.6,817.4 776.4,817.4 777.2,817.4 778.0,817.4 778.0,818.2 777.2,818.2 776.4,818.2 775.6,818.2 774.8,818.2 774.0,818.2 773.2,818.2 772.4,818.2 771.6,818.2 770.8,818.2 770.0,818.2 769.2,818.2 768.4,818.2 767.6,818.2 766.8,818.2 766.0,818.2 765.2,818.2 764.4,818.2 763.6,818.2 762.8,818.2 762.0,818.2 761.2,818.2 760.4,818.2 759.6,818.2 758.8,818.2 758.0,818.2 757.2,818.2 756.4,818.2 755.6,818.3 754.8,818.5 754.0,818.2 753.2,819.2 752.4,819.7 751.6,819.7 750.8,818.9 750.0,818.4 749.2,819.9 748.4,818.3 747.6,819.6 746.8,818.4 746.0,818.2 745.2,818.7 744.4,818.3 743.6,818.6 742.8,818.6 742.0,818.6 741.2,818.2 740.4,818.4 739.6,818.2 738.8,818.4 738.0,818.5 737.2,818.2 736.4,818.3 735.6,818.4 734.8,818.6 734.0,818.4 733.2,819.5 732.4,819.4 731.6,820.0 730.8,818.9 730.0,819.3 729.2,821.0 728.4,820.0 727.6,821.1 726.8,822.2 726.0,819.5 725.2,822.3 724.4,819.4 723.6,818.9 722.8,819.7 722.0,819.4 721.2,821.8 720.4,818.7 719.6,819.0 718.8,820.0 718.0,819.1 717.2,821.2 716.4,819.3 715.6,821.5 714.8,818.7 714.0,820.8 713.2,818.9 712.4,821.9 711.6,820.3 710.8,821.0 710.0,820.7 709.2,821.1 708.4,821.0 707.6,821.5 706.8,823.1 706.0,820.5 705.2,824.4 704.4,822.3 703.6,820.7 702.8,820.8 702.0,826.9 701.2,821.1 700.4,824.9 699.6,826.5 698.8,825.7 698.0,830.7 697.2,830.5 696.4,821.0 695.6,821.2 694.8,821.5 694.0,825.1 693.2,826.0 692.4,822.2 691.6,829.4 690.8,821.2 690.0,822.6 689.2,821.0 688.4,822.7 687.5,819.4" fill="#f0c750"/><polygon points="687.5,861.6 688.4,861.3 689.2,857.6 690.0,860.6 690.8,852.3 691.6,860.0 692.4,852.4 693.2,859.9 694.0,851.4 694.8,858.1 695.6,854.1 696.4,855.6 697.2,851.7 698.0,852.7 698.8,858.6 699.6,852.2 700.4,860.3 701.2,856.2 702.0,860.2 702.8,854.2 703.6,860.9 704.4,860.1 705.2,860.7 706.0,860.2 706.8,861.0 707.6,859.4 708.4,860.6 709.2,860.5 710.0,861.6 710.8,858.6 711.6,860.6 712.4,861.2 713.2,859.4 714.0,861.6 714.8,860.7 715.6,861.6 716.4,859.6 717.2,858.6 718.0,860.9 718.8,858.0 719.6,861.7 720.4,859.6 721.2,860.1 722.0,859.1 722.8,860.6 723.6,861.8 724.4,860.8 725.2,860.3 726.0,860.7 726.8,861.5 727.6,861.4 728.4,862.4 729.2,862.2 730.0,862.5 730.8,862.0 731.6,861.5 732.4,862.6 733.2,861.5 734.0,862.0 734.8,862.5 735.6,862.0 736.4,861.8 737.2,861.7 738.0,862.4 738.8,862.5 739.6,861.9 740.4,862.0 741.2,862.3 742.0,862.1 742.8,862.3 743.6,862.6 744.4,862.6 745.2,862.1 746.0,862.3 746.8,862.2 747.6,861.6 748.4,862.5 749.2,861.1 750.0,861.4 750.8,861.0 751.6,862.4 752.4,861.2 753.2,861.6 754.0,862.2 754.8,862.4 755.6,862.6 756.4,862.4 757.2,862.6 758.0,862.6 758.8,862.6 759.6,862.6 760.4,862.6 761.2,862.6 762.0,862.6 762.8,862.6 763.6,862.7 764.4,862.7 765.2,862.8 766.0,862.8 766.8,862.9 767.6,863.0 768.4,863.0 769.2,863.0 770.0,863.0 770.8,863.0 771.6,863.0 772.4,863.0 773.2,863.0 774.0,863.0 774.8,863.0 775.6,863.0 776.4,863.0 777.2,863.0 778.0,863.0 778.0,863.0 777.2,863.0 776.4,863.0 775.6,863.0 774.8,863.0 774.0,863.0 773.2,863.0 772.4,863.0 771.6,863.0 770.8,863.0 770.0,863.0 769.2,863.0 768.4,863.0 767.6,863.1 766.8,863.1 766.0,863.2 765.2,863.2 764.4,863.3 763.6,863.3 762.8,863.4 762.0,863.4 761.2,863.4 760.4,863.4 759.6,863.4 758.8,863.4 758.0,863.4 757.2,863.5 756.4,863.4 755.6,863.4 754.8,863.6 754.0,863.4 753.2,863.6 752.4,864.8 751.6,864.6 750.8,863.5 750.0,864.0 749.2,863.7 748.4,863.9 747.6,863.6 746.8,864.3 746.0,863.9 745.2,863.5 744.4,863.4 743.6,863.8 742.8,863.7 742.0,863.4 741.2,863.4 740.4,863.9 739.6,864.0 738.8,863.5 738.0,863.8 737.2,863.6 736.4,864.0 735.6,863.4 734.8,864.4 734.0,863.8 733.2,864.4 732.4,864.1 731.6,863.4 730.8,863.5 730.0,864.3 729.2,863.5 728.4,863.8 727.6,864.0 726.8,864.5 726.0,864.3 725.2,865.8 724.4,863.9 723.6,867.0 722.8,867.3 722.0,866.7 721.2,864.6 720.4,866.9 719.6,868.1 718.8,865.4 718.0,864.3 717.2,865.4 716.4,867.4 715.6,864.0 714.8,864.9 714.0,864.4 713.2,865.1 712.4,867.4 711.6,864.0 710.8,864.2 710.0,864.8 709.2,864.3 708.4,864.5 707.6,867.7 706.8,864.6 706.0,865.2 705.2,864.8 704.4,866.1 703.6,865.3 702.8,867.5 702.0,868.2 701.2,866.4 700.4,865.9 699.6,865.9 698.8,874.6 698.0,867.6 697.2,872.6 696.4,866.8 695.6,873.9 694.8,873.3 694.0,867.4 693.2,871.9 692.4,868.8 691.6,874.7 690.8,867.7 690.0,871.4 689.2,865.9 688.4,869.0 687.5,865.6" fill="#f0c750"/><rect x="797.4999999999999" y="794.2" width="95.7" height="95.9" fill="#000" opacity=".33" filter="url(#ts)"/><rect x="798.0999999999999" y="793.6" width="94.5" height="94.5" fill="#525252"/><polygon points="800.1,816.6 800.9,816.4 801.7,812.3 802.5,807.7 803.3,813.1 804.1,813.6 804.9,814.0 805.7,807.4 806.5,814.0 807.3,811.5 808.1,812.0 808.9,814.9 809.7,812.9 810.5,806.7 811.3,812.5 812.1,806.1 812.9,807.4 813.7,815.0 814.5,808.7 815.3,811.3 816.1,813.4 816.9,815.8 817.7,816.0 818.5,811.9 819.3,814.9 820.1,816.0 820.9,815.4 821.7,815.7 822.5,815.8 823.3,815.9 824.1,816.7 824.9,814.2 825.7,816.7 826.5,816.0 827.3,813.8 828.1,816.2 828.9,813.7 829.7,816.4 830.5,815.2 831.3,816.6 832.1,813.3 832.9,815.2 833.7,814.7 834.5,816.2 835.3,816.8 836.1,815.3 836.9,816.4 837.7,815.7 838.5,816.8 839.3,815.9 840.1,815.8 840.9,816.4 841.7,817.0 842.5,817.3 843.3,816.0 844.1,816.2 844.9,817.2 845.8,816.8 846.6,817.2 847.4,817.4 848.2,816.7 849.0,816.6 849.8,817.3 850.6,817.4 851.4,817.3 852.2,817.1 853.0,816.8 853.8,816.9 854.6,817.0 855.4,817.1 856.2,817.1 857.0,817.2 857.8,817.3 858.6,817.1 859.4,817.4 860.2,817.1 861.0,816.6 861.8,817.1 862.6,815.8 863.4,816.9 864.2,817.2 865.0,815.8 865.8,816.1 866.6,816.5 867.4,816.9 868.2,817.0 869.0,817.2 869.8,817.2 870.6,817.4 871.4,817.4 872.2,817.4 873.0,817.4 873.8,817.4 874.6,817.4 875.4,817.4 876.2,817.4 877.0,817.4 877.8,817.4 878.6,817.4 879.4,817.4 880.2,817.4 881.0,817.4 881.8,817.4 882.6,817.4 883.4,817.4 884.2,817.4 885.0,817.4 885.8,817.4 886.6,817.4 887.4,817.4 888.2,817.4 889.0,817.4 889.8,817.4 890.6,817.4 890.6,818.2 889.8,818.2 889.0,818.2 888.2,818.2 887.4,818.2 886.6,818.2 885.8,818.2 885.0,818.2 884.2,818.2 883.4,818.2 882.6,818.2 881.8,818.2 881.0,818.2 880.2,818.2 879.4,818.2 878.6,818.2 877.8,818.2 877.0,818.2 876.2,818.2 875.4,818.2 874.6,818.2 873.8,818.2 873.0,818.2 872.2,818.2 871.4,818.2 870.6,818.2 869.8,818.2 869.0,818.3 868.2,818.7 867.4,818.2 866.6,818.2 865.8,819.1 865.0,818.3 864.2,818.5 863.4,818.5 862.6,819.1 861.8,819.4 861.0,819.1 860.2,818.2 859.4,818.5 858.6,818.4 857.8,818.2 857.0,818.6 856.2,818.4 855.4,818.6 854.6,818.2 853.8,818.2 853.0,818.3 852.2,818.4 851.4,818.7 850.6,818.2 849.8,819.0 849.0,818.6 848.2,818.2 847.4,819.1 846.6,818.2 845.8,818.9 844.9,818.4 844.1,819.0 843.3,818.5 842.5,818.4 841.7,818.8 840.9,818.6 840.1,818.3 839.3,819.9 838.5,820.0 837.7,819.6 836.9,819.9 836.1,819.4 835.3,819.5 834.5,819.0 833.7,821.3 832.9,821.9 832.1,820.9 831.3,819.1 830.5,822.8 829.7,820.3 828.9,822.2 828.1,818.8 827.3,821.0 826.5,821.4 825.7,820.0 824.9,820.1 824.1,822.1 823.3,820.1 822.5,822.5 821.7,822.4 820.9,819.7 820.1,823.7 819.3,821.3 818.5,821.8 817.7,821.5 816.9,819.9 816.1,825.4 815.3,821.1 814.5,824.5 813.7,820.8 812.9,820.3 812.1,823.8 811.3,828.1 810.5,825.5 809.7,824.7 808.9,824.6 808.1,823.2 807.3,821.6 806.5,828.8 805.7,827.3 804.9,828.0 804.1,821.9 803.3,826.2 802.5,821.1 801.7,824.7 800.9,823.2 800.1,821.9" fill="#f0c750"/><polygon points="800.1,862.0 800.9,858.2 801.7,858.0 802.5,856.7 803.3,856.9 804.1,860.5 804.9,854.3 805.7,854.9 806.5,859.9 807.3,857.0 808.1,854.5 808.9,856.0 809.7,857.9 810.5,857.1 811.3,852.3 812.1,855.3 812.9,859.7 813.7,858.8 814.5,855.4 815.3,857.2 816.1,857.1 816.9,858.4 817.7,859.0 818.5,859.9 819.3,857.3 820.1,857.7 820.9,861.2 821.7,859.9 822.5,861.8 823.3,862.0 824.1,858.9 824.9,859.3 825.7,859.2 826.5,860.0 827.3,859.5 828.1,862.1 828.9,860.7 829.7,860.4 830.5,859.7 831.3,860.0 832.1,860.5 832.9,860.4 833.7,860.5 834.5,859.3 835.3,859.0 836.1,860.8 836.9,860.5 837.7,862.1 838.5,860.3 839.3,861.0 840.1,862.5 840.9,861.7 841.7,862.0 842.5,861.4 843.3,862.6 844.1,861.5 844.9,861.8 845.8,862.0 846.6,861.8 847.4,861.8 848.2,862.0 849.0,862.2 849.8,862.0 850.6,862.5 851.4,861.8 852.2,862.5 853.0,861.7 853.8,861.9 854.6,862.2 855.4,862.5 856.2,860.8 857.0,861.5 857.8,861.9 858.6,862.1 859.4,862.1 860.2,862.0 861.0,862.4 861.8,862.0 862.6,862.6 863.4,862.5 864.2,862.6 865.0,862.6 865.8,862.6 866.6,862.6 867.4,862.6 868.2,862.6 869.0,862.6 869.8,862.6 870.6,862.6 871.4,862.6 872.2,862.6 873.0,862.6 873.8,862.6 874.6,862.6 875.4,862.6 876.2,862.6 877.0,862.6 877.8,862.6 878.6,862.6 879.4,862.6 880.2,862.6 881.0,862.6 881.8,862.6 882.6,862.7 883.4,862.7 884.2,862.8 885.0,862.8 885.8,862.9 886.6,863.0 887.4,863.0 888.2,863.0 889.0,863.0 889.8,863.0 890.6,863.0 890.6,863.0 889.8,863.0 889.0,863.0 888.2,863.0 887.4,863.0 886.6,863.0 885.8,863.1 885.0,863.2 884.2,863.2 883.4,863.3 882.6,863.3 881.8,863.4 881.0,863.4 880.2,863.4 879.4,863.4 878.6,863.4 877.8,863.4 877.0,863.4 876.2,863.4 875.4,863.4 874.6,863.4 873.8,863.4 873.0,863.4 872.2,863.4 871.4,863.4 870.6,863.4 869.8,863.4 869.0,863.4 868.2,863.4 867.4,863.4 866.6,863.4 865.8,863.4 865.0,863.4 864.2,863.4 863.4,863.6 862.6,863.9 861.8,863.6 861.0,863.4 860.2,863.6 859.4,864.4 858.6,863.8 857.8,864.5 857.0,864.2 856.2,863.7 855.4,864.4 854.6,863.5 853.8,864.8 853.0,863.4 852.2,864.3 851.4,864.3 850.6,863.4 849.8,864.3 849.0,863.4 848.2,863.4 847.4,864.4 846.6,864.2 845.8,863.4 844.9,864.0 844.1,864.0 843.3,864.1 842.5,863.4 841.7,864.8 840.9,864.6 840.1,863.6 839.3,864.3 838.5,864.6 837.7,865.9 836.9,863.9 836.1,864.0 835.3,864.7 834.5,864.7 833.7,867.3 832.9,865.8 832.1,864.6 831.3,865.3 830.5,866.4 829.7,866.2 828.9,863.9 828.1,864.1 827.3,864.1 826.5,864.4 825.7,864.6 824.9,864.5 824.1,867.1 823.3,864.2 822.5,865.9 821.7,864.2 820.9,866.0 820.1,865.2 819.3,867.0 818.5,865.4 817.7,868.0 816.9,869.2 816.1,870.5 815.3,865.5 814.5,867.5 813.7,866.9 812.9,871.4 812.1,869.5 811.3,872.7 810.5,869.7 809.7,870.8 808.9,871.7 808.1,871.6 807.3,872.5 806.5,872.5 805.7,869.5 804.9,873.6 804.1,872.5 803.3,866.0 802.5,867.7 801.7,867.8 800.9,868.6 800.1,865.9" fill="#f0c750"/><rect x="910.05" y="794.2" width="95.7" height="95.9" fill="#000" opacity=".33" filter="url(#ts)"/><rect x="910.65" y="793.6" width="94.5" height="94.5" fill="#525252"/><polygon points="912.6,817.4 913.5,817.4 914.3,817.4 915.1,817.4 915.9,817.1 916.7,816.5 917.5,815.1 918.3,814.2 919.1,813.8 919.9,813.7 920.7,813.9 921.5,814.1 922.3,813.8 923.1,815.0 923.9,814.9 924.7,816.3 925.5,815.9 926.3,816.3 927.1,816.7 927.9,816.6 928.7,816.6 929.5,817.1 930.3,817.0 931.1,817.2 931.9,817.4 932.7,817.4 933.5,817.4 934.3,817.4 935.1,817.4 935.9,817.4 936.7,817.4 937.5,817.4 938.3,817.4 939.1,817.4 939.9,817.4 940.7,817.4 941.5,817.4 942.3,817.4 943.1,817.4 943.9,817.4 944.7,817.4 945.5,817.4 946.3,817.4 947.1,817.4 947.9,817.4 948.7,817.4 949.5,817.4 950.3,817.4 951.1,817.4 951.9,817.4 952.7,817.4 953.5,817.4 954.3,817.4 955.1,817.4 955.9,817.4 956.7,817.4 957.5,817.4 958.3,817.4 959.1,817.4 959.9,817.4 960.7,817.4 961.5,817.4 962.3,817.4 963.1,817.4 963.9,817.4 964.7,817.4 965.5,817.4 966.3,817.4 967.1,817.4 967.9,817.4 968.7,817.4 969.5,817.4 970.3,817.4 971.1,817.4 971.9,817.4 972.7,817.4 973.5,817.4 974.3,817.4 975.1,817.4 975.9,817.4 976.7,817.4 977.5,817.4 978.3,817.4 979.1,817.4 979.9,817.4 980.7,817.4 981.5,817.4 982.3,817.4 983.1,817.4 983.9,817.4 984.7,817.4 985.5,817.4 986.3,817.4 987.1,817.4 987.9,817.4 988.7,817.4 989.5,817.4 990.3,817.4 991.1,817.4 991.9,817.4 992.7,817.4 993.5,817.4 994.3,817.4 995.1,817.4 995.9,817.4 996.7,817.4 997.5,817.4 998.3,817.4 999.1,817.4 999.9,817.4 1000.7,817.4 1001.5,817.4 1002.3,817.4 1003.1,817.4 1003.1,818.2 1002.3,818.2 1001.5,818.2 1000.7,818.2 999.9,818.2 999.1,818.2 998.3,818.2 997.5,818.2 996.7,818.2 995.9,818.2 995.1,818.2 994.3,818.2 993.5,818.2 992.7,818.2 991.9,818.2 991.1,818.2 990.3,818.2 989.5,818.2 988.7,818.2 987.9,818.2 987.1,818.2 986.3,818.2 985.5,818.2 984.7,818.2 983.9,818.2 983.1,818.2 982.3,818.2 981.5,818.2 980.7,818.2 979.9,818.2 979.1,818.2 978.3,818.2 977.5,818.2 976.7,818.2 975.9,818.2 975.1,818.2 974.3,818.2 973.5,818.2 972.7,818.2 971.9,818.2 971.1,818.2 970.3,818.2 969.5,818.2 968.7,818.2 967.9,818.2 967.1,818.2 966.3,818.2 965.5,818.2 964.7,818.2 963.9,818.2 963.1,818.2 962.3,818.2 961.5,818.2 960.7,818.2 959.9,818.2 959.1,818.2 958.3,818.2 957.5,818.2 956.7,818.2 955.9,818.2 955.1,818.2 954.3,818.2 953.5,818.2 952.7,818.2 951.9,818.2 951.1,818.2 950.3,818.2 949.5,818.2 948.7,818.2 947.9,818.2 947.1,818.2 946.3,818.2 945.5,818.2 944.7,818.2 943.9,818.2 943.1,818.2 942.3,818.2 941.5,818.2 940.7,818.2 939.9,818.2 939.1,818.2 938.3,818.2 937.5,818.2 936.7,818.2 935.9,818.2 935.1,818.2 934.3,818.2 933.5,818.2 932.7,818.2 931.9,818.2 931.1,818.5 930.3,818.7 929.5,818.9 928.7,819.1 927.9,818.8 927.1,819.0 926.3,819.1 925.5,819.7 924.7,820.2 923.9,819.9 923.1,820.9 922.3,821.1 921.5,821.4 920.7,821.5 919.9,822.2 919.1,820.6 918.3,821.3 917.5,819.7 916.7,819.5 915.9,818.8 915.1,818.3 914.3,818.2 913.5,818.2 912.6,818.2" fill="#f0c750"/><polygon points="912.6,862.6 913.5,862.6 914.3,862.6 915.1,862.6 915.9,862.0 916.7,861.7 917.5,860.7 918.3,860.8 919.1,859.5 919.9,859.3 920.7,859.3 921.5,860.1 922.3,860.2 923.1,860.6 923.9,861.0 924.7,861.3 925.5,861.6 926.3,861.5 927.1,861.7 927.9,862.1 928.7,862.1 929.5,862.2 930.3,862.2 931.1,862.6 931.9,862.6 932.7,862.6 933.5,862.6 934.3,862.6 935.1,862.6 935.9,862.6 936.7,862.6 937.5,862.6 938.3,862.6 939.1,862.6 939.9,862.6 940.7,862.6 941.5,862.6 942.3,862.6 943.1,862.6 943.9,862.6 944.7,862.6 945.5,862.6 946.3,862.6 947.1,862.6 947.9,862.6 948.7,862.6 949.5,862.6 950.3,862.6 951.1,862.6 951.9,862.6 952.7,862.6 953.5,862.6 954.3,862.6 955.1,862.6 955.9,862.6 956.7,862.6 957.5,862.6 958.3,862.6 959.1,862.6 959.9,862.6 960.7,862.6 961.5,862.6 962.3,862.6 963.1,862.6 963.9,862.6 964.7,862.6 965.5,862.6 966.3,862.6 967.1,862.6 967.9,862.6 968.7,862.6 969.5,862.6 970.3,862.6 971.1,862.6 971.9,862.6 972.7,862.6 973.5,862.6 974.3,862.7 975.1,862.7 975.9,862.7 976.7,862.8 977.5,862.8 978.3,862.9 979.1,862.9 979.9,862.9 980.7,863.0 981.5,863.0 982.3,863.0 983.1,863.0 983.9,863.0 984.7,863.0 985.5,863.0 986.3,863.0 987.1,863.0 987.9,863.0 988.7,863.0 989.5,863.0 990.3,863.0 991.1,863.0 991.9,863.0 992.7,863.0 993.5,863.0 994.3,863.0 995.1,863.0 995.9,863.0 996.7,863.0 997.5,863.0 998.3,863.0 999.1,863.0 999.9,863.0 1000.7,863.0 1001.5,863.0 1002.3,863.0 1003.1,863.0 1003.1,863.0 1002.3,863.0 1001.5,863.0 1000.7,863.0 999.9,863.0 999.1,863.0 998.3,863.0 997.5,863.0 996.7,863.0 995.9,863.0 995.1,863.0 994.3,863.0 993.5,863.0 992.7,863.0 991.9,863.0 991.1,863.0 990.3,863.0 989.5,863.0 988.7,863.0 987.9,863.0 987.1,863.0 986.3,863.0 985.5,863.0 984.7,863.0 983.9,863.0 983.1,863.0 982.3,863.0 981.5,863.0 980.7,863.0 979.9,863.1 979.1,863.1 978.3,863.1 977.5,863.2 976.7,863.2 975.9,863.3 975.1,863.3 974.3,863.3 973.5,863.4 972.7,863.4 971.9,863.4 971.1,863.4 970.3,863.4 969.5,863.4 968.7,863.4 967.9,863.4 967.1,863.4 966.3,863.4 965.5,863.4 964.7,863.4 963.9,863.4 963.1,863.4 962.3,863.4 961.5,863.4 960.7,863.4 959.9,863.4 959.1,863.4 958.3,863.4 957.5,863.4 956.7,863.4 955.9,863.4 955.1,863.4 954.3,863.4 953.5,863.4 952.7,863.4 951.9,863.4 951.1,863.4 950.3,863.4 949.5,863.4 948.7,863.4 947.9,863.4 947.1,863.4 946.3,863.4 945.5,863.4 944.7,863.4 943.9,863.4 943.1,863.4 942.3,863.4 941.5,863.4 940.7,863.4 939.9,863.4 939.1,863.4 938.3,863.4 937.5,863.4 936.7,863.4 935.9,863.4 935.1,863.4 934.3,863.4 933.5,863.4 932.7,863.4 931.9,863.4 931.1,863.6 930.3,863.6 929.5,864.1 928.7,864.0 927.9,864.1 927.1,864.4 926.3,864.3 925.5,864.7 924.7,864.9 923.9,865.1 923.1,866.0 922.3,866.1 921.5,866.6 920.7,866.9 919.9,867.2 919.1,867.0 918.3,865.8 917.5,864.9 916.7,864.2 915.9,863.9 915.1,863.5 914.3,863.4 913.5,863.4 912.6,863.4" fill="#f0c750"/><rect x="1022.5999999999999" y="794.2" width="95.7" height="95.9" fill="#000" opacity=".33" filter="url(#ts)"/><rect x="1023.1999999999999" y="793.6" width="94.5" height="94.5" fill="#525252"/><polygon points="1025.2,817.4 1026.0,817.4 1026.8,817.4 1027.6,817.3 1028.4,817.0 1029.2,816.5 1030.0,815.1 1030.8,814.0 1031.6,813.5 1032.4,814.3 1033.2,813.4 1034.0,814.3 1034.8,813.6 1035.6,815.2 1036.4,814.9 1037.2,815.4 1038.0,815.9 1038.8,816.0 1039.6,816.5 1040.4,816.4 1041.2,816.4 1042.0,816.7 1042.8,817.1 1043.6,817.1 1044.4,817.4 1045.2,817.4 1046.0,817.4 1046.8,817.4 1047.6,817.4 1048.4,817.4 1049.2,817.4 1050.0,817.4 1050.8,817.4 1051.6,817.4 1052.4,817.4 1053.2,817.4 1054.0,817.4 1054.8,817.4 1055.6,817.4 1056.4,817.4 1057.2,817.4 1058.0,817.4 1058.8,817.4 1059.6,817.4 1060.4,817.4 1061.2,817.4 1062.0,817.4 1062.8,817.4 1063.6,817.4 1064.4,817.4 1065.2,817.4 1066.0,817.4 1066.8,817.4 1067.6,817.4 1068.4,817.4 1069.2,817.4 1070.0,817.4 1070.9,817.4 1071.7,817.4 1072.5,817.4 1073.3,817.4 1074.1,817.4 1074.9,817.4 1075.7,817.4 1076.5,817.4 1077.3,817.4 1078.1,817.4 1078.9,817.4 1079.7,817.4 1080.5,817.4 1081.3,817.4 1082.1,817.4 1082.9,817.4 1083.7,817.4 1084.5,817.4 1085.3,817.4 1086.1,817.4 1086.9,817.4 1087.7,817.4 1088.5,817.4 1089.3,817.4 1090.1,817.4 1090.9,817.4 1091.7,817.4 1092.5,817.4 1093.3,817.4 1094.1,817.4 1094.9,817.4 1095.7,817.4 1096.5,817.4 1097.3,817.4 1098.1,817.4 1098.9,817.4 1099.7,817.4 1100.5,817.4 1101.3,817.4 1102.1,817.4 1102.9,817.4 1103.7,817.4 1104.5,817.4 1105.3,817.4 1106.1,817.4 1106.9,817.4 1107.7,817.4 1108.5,817.4 1109.3,817.4 1110.1,817.4 1110.9,817.4 1111.7,817.4 1112.5,817.4 1113.3,817.4 1114.1,817.4 1114.9,817.4 1115.7,817.4 1115.7,818.2 1114.9,818.2 1114.1,818.2 1113.3,818.2 1112.5,818.2 1111.7,818.2 1110.9,818.2 1110.1,818.2 1109.3,818.2 1108.5,818.2 1107.7,818.2 1106.9,818.2 1106.1,818.2 1105.3,818.2 1104.5,818.2 1103.7,818.2 1102.9,818.2 1102.1,818.2 1101.3,818.2 1100.5,818.2 1099.7,818.2 1098.9,818.2 1098.1,818.2 1097.3,818.2 1096.5,818.2 1095.7,818.2 1094.9,818.2 1094.1,818.2 1093.3,818.2 1092.5,818.2 1091.7,818.2 1090.9,818.2 1090.1,818.2 1089.3,818.2 1088.5,818.2 1087.7,818.2 1086.9,818.2 1086.1,818.2 1085.3,818.2 1084.5,818.2 1083.7,818.2 1082.9,818.2 1082.1,818.2 1081.3,818.2 1080.5,818.2 1079.7,818.2 1078.9,818.2 1078.1,818.2 1077.3,818.2 1076.5,818.2 1075.7,818.2 1074.9,818.2 1074.1,818.2 1073.3,818.2 1072.5,818.2 1071.7,818.2 1070.9,818.2 1070.0,818.2 1069.2,818.2 1068.4,818.2 1067.6,818.2 1066.8,818.2 1066.0,818.2 1065.2,818.2 1064.4,818.2 1063.6,818.2 1062.8,818.2 1062.0,818.2 1061.2,818.2 1060.4,818.2 1059.6,818.2 1058.8,818.2 1058.0,818.2 1057.2,818.2 1056.4,818.2 1055.6,818.2 1054.8,818.2 1054.0,818.2 1053.2,818.2 1052.4,818.2 1051.6,818.2 1050.8,818.2 1050.0,818.2 1049.2,818.2 1048.4,818.2 1047.6,818.2 1046.8,818.2 1046.0,818.2 1045.2,818.2 1044.4,818.2 1043.6,818.4 1042.8,818.6 1042.0,818.9 1041.2,818.9 1040.4,819.0 1039.6,818.9 1038.8,818.9 1038.0,819.7 1037.2,819.4 1036.4,820.1 1035.6,820.1 1034.8,821.6 1034.0,821.9 1033.2,823.1 1032.4,822.4 1031.6,822.2 1030.8,820.2 1030.0,819.9 1029.2,819.5 1028.4,818.7 1027.6,818.4 1026.8,818.2 1026.0,818.2 1025.2,818.2" fill="#f0c750"/><polygon points="1025.2,862.6 1026.0,862.6 1026.8,862.6 1027.6,862.5 1028.4,862.0 1029.2,861.9 1030.0,861.0 1030.8,859.9 1031.6,859.4 1032.4,858.4 1033.2,859.0 1034.0,858.6 1034.8,860.4 1035.6,860.1 1036.4,861.1 1037.2,861.3 1038.0,861.6 1038.8,861.3 1039.6,861.5 1040.4,862.0 1041.2,861.9 1042.0,862.2 1042.8,862.1 1043.6,862.4 1044.4,862.6 1045.2,862.6 1046.0,862.6 1046.8,862.6 1047.6,862.6 1048.4,862.6 1049.2,862.6 1050.0,862.6 1050.8,862.6 1051.6,862.6 1052.4,862.6 1053.2,862.6 1054.0,862.6 1054.8,862.6 1055.6,862.6 1056.4,862.6 1057.2,862.6 1058.0,862.6 1058.8,862.6 1059.6,862.6 1060.4,862.6 1061.2,862.6 1062.0,862.6 1062.8,862.6 1063.6,862.6 1064.4,862.6 1065.2,862.6 1066.0,862.6 1066.8,862.6 1067.6,862.6 1068.4,862.6 1069.2,862.6 1070.0,862.6 1070.9,862.6 1071.7,862.6 1072.5,862.6 1073.3,862.6 1074.1,862.6 1074.9,862.6 1075.7,862.6 1076.5,862.6 1077.3,862.6 1078.1,862.6 1078.9,862.6 1079.7,862.6 1080.5,862.6 1081.3,862.6 1082.1,862.6 1082.9,862.6 1083.7,862.6 1084.5,862.6 1085.3,862.6 1086.1,862.6 1086.9,862.7 1087.7,862.7 1088.5,862.7 1089.3,862.8 1090.1,862.8 1090.9,862.9 1091.7,862.9 1092.5,862.9 1093.3,863.0 1094.1,863.0 1094.9,863.0 1095.7,863.0 1096.5,863.0 1097.3,863.0 1098.1,863.0 1098.9,863.0 1099.7,863.0 1100.5,863.0 1101.3,863.0 1102.1,863.0 1102.9,863.0 1103.7,863.0 1104.5,863.0 1105.3,863.0 1106.1,863.0 1106.9,863.0 1107.7,863.0 1108.5,863.0 1109.3,863.0 1110.1,863.0 1110.9,863.0 1111.7,863.0 1112.5,863.0 1113.3,863.0 1114.1,863.0 1114.9,863.0 1115.7,863.0 1115.7,863.0 1114.9,863.0 1114.1,863.0 1113.3,863.0 1112.5,863.0 1111.7,863.0 1110.9,863.0 1110.1,863.0 1109.3,863.0 1108.5,863.0 1107.7,863.0 1106.9,863.0 1106.1,863.0 1105.3,863.0 1104.5,863.0 1103.7,863.0 1102.9,863.0 1102.1,863.0 1101.3,863.0 1100.5,863.0 1099.7,863.0 1098.9,863.0 1098.1,863.0 1097.3,863.0 1096.5,863.0 1095.7,863.0 1094.9,863.0 1094.1,863.0 1093.3,863.0 1092.5,863.1 1091.7,863.1 1090.9,863.1 1090.1,863.2 1089.3,863.2 1088.5,863.3 1087.7,863.3 1086.9,863.3 1086.1,863.4 1085.3,863.4 1084.5,863.4 1083.7,863.4 1082.9,863.4 1082.1,863.4 1081.3,863.4 1080.5,863.4 1079.7,863.4 1078.9,863.4 1078.1,863.4 1077.3,863.4 1076.5,863.4 1075.7,863.4 1074.9,863.4 1074.1,863.4 1073.3,863.4 1072.5,863.4 1071.7,863.4 1070.9,863.4 1070.0,863.4 1069.2,863.4 1068.4,863.4 1067.6,863.4 1066.8,863.4 1066.0,863.4 1065.2,863.4 1064.4,863.4 1063.6,863.4 1062.8,863.4 1062.0,863.4 1061.2,863.4 1060.4,863.4 1059.6,863.4 1058.8,863.4 1058.0,863.4 1057.2,863.4 1056.4,863.4 1055.6,863.4 1054.8,863.4 1054.0,863.4 1053.2,863.4 1052.4,863.4 1051.6,863.4 1050.8,863.4 1050.0,863.4 1049.2,863.4 1048.4,863.4 1047.6,863.4 1046.8,863.4 1046.0,863.4 1045.2,863.4 1044.4,863.4 1043.6,863.6 1042.8,863.8 1042.0,864.0 1041.2,864.0 1040.4,864.4 1039.6,864.0 1038.8,864.5 1038.0,864.6 1037.2,864.6 1036.4,865.0 1035.6,865.0 1034.8,866.9 1034.0,866.1 1033.2,867.8 1032.4,866.8 1031.6,866.7 1030.8,866.0 1030.0,864.5 1029.2,864.3 1028.4,863.8 1027.6,863.4 1026.8,863.4 1026.0,863.4 1025.2,863.4" fill="#f0c750"/><rect x="347.29999999999995" y="922.5" width="95.7" height="95.9" fill="#000" opacity=".33" filter="url(#ts)"/><rect x="347.9" y="921.9" width="94.5" height="94.5" fill="#525252"/><polygon points="349.9,944.6 350.7,942.7 351.5,943.1 352.3,943.8 353.1,942.6 353.9,944.1 354.7,943.4 355.5,944.2 356.3,939.9 357.1,940.9 357.9,942.8 358.7,943.9 359.5,942.6 360.3,939.2 361.1,938.3 361.9,941.4 362.7,942.2 363.5,944.4 364.3,943.9 365.1,944.1 365.9,940.7 366.7,941.8 367.5,942.2 368.3,943.6 369.1,944.7 369.9,942.2 370.7,944.4 371.5,944.4 372.3,944.5 373.1,945.2 373.9,942.8 374.7,944.5 375.5,943.9 376.3,944.4 377.1,944.4 377.9,945.4 378.7,943.8 379.5,944.7 380.3,945.5 381.1,944.2 381.9,945.1 382.7,944.4 383.5,943.5 384.3,943.2 385.1,944.2 385.9,944.4 386.7,945.0 387.5,945.1 388.3,943.5 389.1,944.5 389.9,945.4 390.7,945.2 391.5,945.5 392.3,945.4 393.1,944.5 393.9,945.4 394.7,944.8 395.6,945.2 396.4,945.7 397.2,945.2 398.0,945.5 398.8,945.5 399.6,945.7 400.4,945.7 401.2,945.7 402.0,945.3 402.8,945.6 403.6,945.4 404.4,945.7 405.2,945.4 406.0,945.7 406.8,945.7 407.6,945.7 408.4,945.2 409.2,945.7 410.0,945.6 410.8,945.7 411.6,945.7 412.4,945.0 413.2,945.7 414.0,944.9 414.8,945.1 415.6,945.5 416.4,945.4 417.2,945.6 418.0,945.7 418.8,945.7 419.6,945.7 420.4,945.7 421.2,945.7 422.0,945.7 422.8,945.7 423.6,945.7 424.4,945.7 425.2,945.7 426.0,945.7 426.8,945.7 427.6,945.7 428.4,945.7 429.2,945.7 430.0,945.7 430.8,945.7 431.6,945.7 432.4,945.7 433.2,945.7 434.0,945.7 434.8,945.7 435.6,945.7 436.4,945.7 437.2,945.7 438.0,945.7 438.8,945.7 439.6,945.7 440.4,945.7 440.4,946.5 439.6,946.5 438.8,946.5 438.0,946.5 437.2,946.5 436.4,946.5 435.6,946.5 434.8,946.5 434.0,946.5 433.2,946.5 432.4,946.5 431.6,946.5 430.8,946.5 430.0,946.5 429.2,946.5 428.4,946.5 427.6,946.5 426.8,946.5 426.0,946.5 425.2,946.5 424.4,946.5 423.6,946.5 422.8,946.5 422.0,946.5 421.2,946.5 420.4,946.5 419.6,946.5 418.8,946.5 418.0,946.5 417.2,946.5 416.4,946.5 415.6,946.5 414.8,946.5 414.0,947.2 413.2,947.2 412.4,946.9 411.6,946.7 410.8,946.5 410.0,946.8 409.2,946.7 408.4,946.8 407.6,946.5 406.8,946.5 406.0,946.5 405.2,946.8 404.4,946.5 403.6,946.6 402.8,946.6 402.0,946.5 401.2,946.7 400.4,946.8 399.6,946.6 398.8,947.0 398.0,946.6 397.2,947.1 396.4,947.1 395.6,946.5 394.7,946.8 393.9,946.6 393.1,947.3 392.3,947.8 391.5,946.6 390.7,947.2 389.9,947.1 389.1,948.7 388.3,948.6 387.5,946.9 386.7,949.1 385.9,947.5 385.1,948.9 384.3,948.9 383.5,947.3 382.7,948.4 381.9,947.7 381.1,947.9 380.3,946.7 379.5,947.0 378.7,947.1 377.9,947.1 377.1,946.9 376.3,947.7 375.5,947.0 374.7,947.8 373.9,947.8 373.1,948.6 372.3,946.9 371.5,950.0 370.7,948.1 369.9,948.1 369.1,950.5 368.3,950.2 367.5,947.5 366.7,949.4 365.9,950.6 365.1,952.4 364.3,951.4 363.5,952.4 362.7,948.4 361.9,949.4 361.1,950.2 360.3,948.3 359.5,948.5 358.7,954.2 357.9,950.5 357.1,948.0 356.3,953.5 355.5,954.6 354.7,948.8 353.9,952.8 353.1,951.1 352.3,947.7 351.5,949.1 350.7,949.6 349.9,947.0" fill="#f0c750"/><polygon points="349.9,988.8 350.7,989.2 351.5,989.4 352.3,988.3 353.1,983.7 353.9,986.6 354.7,989.5 355.5,984.6 356.3,987.6 357.1,988.2 357.9,989.3 358.7,986.3 359.5,989.0 360.3,987.8 361.1,988.3 361.9,985.7 362.7,989.7 363.5,985.6 364.3,989.2 365.1,988.1 365.9,987.1 366.7,990.1 367.5,989.2 368.3,988.6 369.1,987.8 369.9,990.1 370.7,990.2 371.5,988.2 372.3,989.0 373.1,988.5 373.9,989.5 374.7,990.2 375.5,990.4 376.3,990.2 377.1,990.8 377.9,990.1 378.7,989.7 379.5,990.3 380.3,990.8 381.1,990.8 381.9,989.9 382.7,990.2 383.5,990.5 384.3,990.2 385.1,990.2 385.9,988.6 386.7,988.2 387.5,989.0 388.3,988.5 389.1,990.7 389.9,989.0 390.7,990.2 391.5,990.9 392.3,990.2 393.1,990.5 393.9,990.6 394.7,990.4 395.6,990.9 396.4,990.7 397.2,990.9 398.0,990.9 398.8,990.9 399.6,990.8 400.4,990.9 401.2,990.9 402.0,990.9 402.8,990.8 403.6,990.9 404.4,990.9 405.2,990.9 406.0,990.9 406.8,990.6 407.6,990.2 408.4,990.7 409.2,990.9 410.0,990.9 410.8,990.4 411.6,990.0 412.4,990.2 413.2,990.7 414.0,990.9 414.8,990.9 415.6,990.8 416.4,990.9 417.2,990.9 418.0,990.9 418.8,990.9 419.6,990.9 420.4,990.9 421.2,990.9 422.0,990.9 422.8,990.9 423.6,990.9 424.4,990.9 425.2,990.9 426.0,990.9 426.8,990.9 427.6,990.9 428.4,991.0 429.2,991.1 430.0,991.1 430.8,991.2 431.6,991.2 432.4,991.3 433.2,991.3 434.0,991.3 434.8,991.3 435.6,991.3 436.4,991.3 437.2,991.3 438.0,991.3 438.8,991.3 439.6,991.3 440.4,991.3 440.4,991.3 439.6,991.3 438.8,991.3 438.0,991.3 437.2,991.3 436.4,991.3 435.6,991.3 434.8,991.3 434.0,991.3 433.2,991.3 432.4,991.3 431.6,991.4 430.8,991.4 430.0,991.5 429.2,991.5 428.4,991.6 427.6,991.7 426.8,991.7 426.0,991.7 425.2,991.7 424.4,991.7 423.6,991.7 422.8,991.7 422.0,991.7 421.2,991.7 420.4,991.7 419.6,991.7 418.8,991.7 418.0,991.7 417.2,991.7 416.4,991.7 415.6,991.7 414.8,991.7 414.0,992.1 413.2,992.3 412.4,991.9 411.6,992.0 410.8,992.4 410.0,991.7 409.2,991.7 408.4,992.3 407.6,991.7 406.8,991.7 406.0,991.8 405.2,991.8 404.4,991.7 403.6,991.7 402.8,991.9 402.0,991.8 401.2,992.1 400.4,991.7 399.6,991.7 398.8,992.0 398.0,991.8 397.2,991.7 396.4,992.2 395.6,992.0 394.7,992.1 393.9,992.2 393.1,992.3 392.3,991.7 391.5,991.9 390.7,991.8 389.9,993.1 389.1,993.3 388.3,993.5 387.5,993.6 386.7,992.4 385.9,992.1 385.1,992.2 384.3,993.0 383.5,992.3 382.7,992.3 381.9,993.6 381.1,992.8 380.3,993.2 379.5,993.0 378.7,991.9 377.9,993.4 377.1,992.4 376.3,992.6 375.5,992.5 374.7,993.0 373.9,993.7 373.1,993.8 372.3,994.0 371.5,992.8 370.7,994.3 369.9,992.6 369.1,992.6 368.3,994.3 367.5,993.8 366.7,995.0 365.9,995.2 365.1,993.2 364.3,994.9 363.5,992.8 362.7,993.2 361.9,998.2 361.1,994.5 360.3,993.4 359.5,994.3 358.7,995.5 357.9,998.6 357.1,994.9 356.3,993.8 355.5,997.1 354.7,994.9 353.9,997.5 353.1,997.5 352.3,995.7 351.5,995.8 350.7,995.1 349.9,993.0" fill="#f0c750"/><rect x="459.84999999999997" y="922.5" width="95.7" height="95.9" fill="#000" opacity=".33" filter="url(#ts)"/><rect x="460.45" y="921.9" width="94.5" height="94.5" fill="#525252"/><polygon points="462.4,945.6 463.3,945.8 464.1,945.8 464.9,945.8 465.7,945.8 466.5,945.7 467.3,945.7 468.1,945.8 468.9,945.6 469.7,945.6 470.5,945.4 471.3,945.2 472.1,945.3 472.9,945.3 473.7,945.2 474.5,945.3 475.3,945.4 476.1,945.5 476.9,945.7 477.7,945.7 478.5,945.7 479.3,945.8 480.1,945.8 480.9,945.8 481.7,945.8 482.5,945.7 483.3,945.7 484.1,945.5 484.9,945.3 485.7,945.4 486.5,945.2 487.3,945.3 488.1,945.5 488.9,945.5 489.7,945.5 490.5,945.6 491.3,945.7 492.1,945.6 492.9,945.8 493.7,945.8 494.5,945.8 495.3,945.8 496.1,945.8 496.9,945.8 497.7,945.6 498.5,945.6 499.3,945.6 500.1,945.3 500.9,945.2 501.7,945.3 502.5,945.4 503.3,945.3 504.1,945.5 504.9,945.3 505.7,945.7 506.5,945.7 507.3,945.8 508.1,945.8 508.9,945.8 509.7,945.8 510.5,945.8 511.3,945.8 512.1,945.8 512.9,945.7 513.7,945.5 514.5,945.5 515.3,945.5 516.1,945.5 516.9,945.5 517.7,945.3 518.5,945.4 519.3,945.6 520.1,945.7 520.9,945.7 521.7,945.5 522.5,945.8 523.3,945.8 524.1,945.8 524.9,945.8 525.7,945.8 526.5,945.8 527.3,945.7 528.1,945.6 528.9,945.7 529.7,945.6 530.5,945.4 531.3,945.2 532.1,945.5 532.9,945.2 533.7,945.4 534.5,945.6 535.3,945.7 536.1,945.7 536.9,945.6 537.7,945.8 538.5,945.8 539.3,945.8 540.1,945.8 540.9,945.8 541.7,945.8 542.5,945.8 543.3,945.5 544.1,945.6 544.9,945.4 545.7,945.2 546.5,945.2 547.3,945.2 548.1,945.4 548.9,945.5 549.7,945.3 550.5,945.7 551.3,945.7 552.1,945.8 553.0,945.8 553.0,946.5 552.1,946.5 551.3,946.6 550.5,946.6 549.7,946.7 548.9,946.6 548.1,946.8 547.3,946.9 546.5,947.0 545.7,947.0 544.9,946.7 544.1,946.7 543.3,946.7 542.5,946.5 541.7,946.5 540.9,946.5 540.1,946.5 539.3,946.5 538.5,946.5 537.7,946.5 536.9,946.5 536.1,946.6 535.3,946.6 534.5,946.6 533.7,946.9 532.9,947.0 532.1,946.8 531.3,947.1 530.5,946.9 529.7,946.9 528.9,946.6 528.1,946.6 527.3,946.5 526.5,946.5 525.7,946.5 524.9,946.5 524.1,946.5 523.3,946.5 522.5,946.5 521.7,946.6 520.9,946.7 520.1,946.8 519.3,946.8 518.5,946.9 517.7,946.7 516.9,947.0 516.1,946.9 515.3,946.7 514.5,946.6 513.7,946.7 512.9,946.5 512.1,946.5 511.3,946.5 510.5,946.5 509.7,946.5 508.9,946.5 508.1,946.5 507.3,946.5 506.5,946.7 505.7,946.6 504.9,946.7 504.1,946.6 503.3,946.8 502.5,946.7 501.7,946.9 500.9,946.6 500.1,946.8 499.3,946.8 498.5,946.6 497.7,946.5 496.9,946.5 496.1,946.5 495.3,946.5 494.5,946.5 493.7,946.5 492.9,946.5 492.1,946.5 491.3,946.6 490.5,946.6 489.7,946.7 488.9,946.8 488.1,947.0 487.3,946.8 486.5,947.1 485.7,946.8 484.9,946.7 484.1,946.5 483.3,946.6 482.5,946.5 481.7,946.5 480.9,946.5 480.1,946.5 479.3,946.5 478.5,946.5 477.7,946.5 476.9,946.5 476.1,946.7 475.3,946.6 474.5,947.0 473.7,946.8 472.9,946.8 472.1,947.0 471.3,947.0 470.5,947.0 469.7,946.8 468.9,946.6 468.1,946.6 467.3,946.5 466.5,946.5 465.7,946.5 464.9,946.5 464.1,946.5 463.3,946.5 462.4,946.5" fill="#f0c750"/><polygon points="462.4,990.9 463.3,990.9 464.1,990.9 464.9,990.9 465.7,990.9 466.5,990.8 467.3,990.7 468.1,990.8 468.9,990.6 469.7,990.4 470.5,990.6 471.3,990.6 472.1,990.7 472.9,990.7 473.7,990.7 474.5,990.8 475.3,990.9 476.1,990.9 476.9,990.9 477.7,990.9 478.5,990.9 479.3,990.9 480.1,990.9 480.9,990.9 481.7,990.7 482.5,990.7 483.3,990.5 484.1,990.4 484.9,990.4 485.7,990.7 486.5,990.6 487.3,990.8 488.1,990.6 488.9,990.9 489.7,990.9 490.5,990.9 491.3,990.9 492.1,990.9 492.9,990.9 493.7,990.9 494.5,990.9 495.3,990.9 496.1,990.9 496.9,990.9 497.7,990.8 498.5,990.6 499.3,990.6 500.1,990.4 500.9,990.8 501.7,990.6 502.5,990.7 503.3,990.8 504.1,990.8 504.9,990.9 505.7,990.9 506.5,990.9 507.3,990.9 508.1,990.9 508.9,990.9 509.7,990.9 510.5,990.8 511.3,990.7 512.1,990.9 512.9,990.6 513.7,990.8 514.5,990.7 515.3,990.7 516.1,990.7 516.9,990.8 517.7,990.7 518.5,990.7 519.3,990.9 520.1,990.9 520.9,990.9 521.7,990.9 522.5,990.9 523.3,990.9 524.1,990.9 524.9,990.9 525.7,990.9 526.5,990.9 527.3,990.8 528.1,990.5 528.9,990.5 529.7,990.4 530.5,990.4 531.3,990.8 532.1,990.5 532.9,990.7 533.7,990.8 534.5,990.9 535.3,990.9 536.1,990.9 536.9,990.9 537.7,990.9 538.5,990.9 539.3,990.9 540.1,990.9 540.9,990.9 541.7,990.9 542.5,990.6 543.3,990.6 544.1,990.6 544.9,990.7 545.7,990.8 546.5,990.6 547.3,990.8 548.1,990.6 548.9,990.8 549.7,990.9 550.5,990.9 551.3,990.9 552.1,990.9 553.0,990.9 553.0,991.6 552.1,991.6 551.3,991.6 550.5,991.6 549.7,991.6 548.9,991.6 548.1,991.9 547.3,992.0 546.5,991.9 545.7,992.0 544.9,991.9 544.1,992.1 543.3,992.1 542.5,991.8 541.7,991.9 540.9,991.6 540.1,991.6 539.3,991.6 538.5,991.6 537.7,991.6 536.9,991.6 536.1,991.6 535.3,991.6 534.5,991.7 533.7,991.7 532.9,991.9 532.1,992.0 531.3,992.2 530.5,992.1 529.7,992.1 528.9,991.8 528.1,991.8 527.3,991.8 526.5,991.7 525.7,991.7 524.9,991.7 524.1,991.6 523.3,991.6 522.5,991.6 521.7,991.6 520.9,991.6 520.1,991.6 519.3,991.8 518.5,991.9 517.7,992.0 516.9,991.9 516.1,991.8 515.3,992.0 514.5,992.1 513.7,991.8 512.9,992.0 512.1,991.7 511.3,991.7 510.5,991.6 509.7,991.6 508.9,991.6 508.1,991.6 507.3,991.6 506.5,991.6 505.7,991.6 504.9,991.8 504.1,991.6 503.3,991.7 502.5,991.9 501.7,992.1 500.9,992.0 500.1,992.2 499.3,992.1 498.5,992.0 497.7,991.8 496.9,991.8 496.1,991.7 495.3,991.7 494.5,991.6 493.7,991.6 492.9,991.6 492.1,991.6 491.3,991.6 490.5,991.7 489.7,991.7 488.9,991.7 488.1,992.0 487.3,992.1 486.5,992.0 485.7,992.1 484.9,992.1 484.1,992.0 483.3,992.0 482.5,992.0 481.7,991.7 480.9,991.7 480.1,991.6 479.3,991.6 478.5,991.6 477.7,991.6 476.9,991.6 476.1,991.6 475.3,991.6 474.5,991.8 473.7,991.8 472.9,991.9 472.1,992.1 471.3,992.0 470.5,991.8 469.7,992.0 468.9,991.9 468.1,992.0 467.3,991.7 466.5,991.7 465.7,991.8 464.9,991.6 464.1,991.6 463.3,991.6 462.4,991.6" fill="#f0c750"/><rect x="572.4" y="922.5" width="95.7" height="95.9" fill="#000" opacity=".33" filter="url(#ts)"/><rect x="573.0" y="921.9" width="94.5" height="94.5" fill="#525252"/><polygon points="575.0,945.7 575.8,945.7 576.6,945.8 577.4,945.8 578.2,945.8 579.0,945.8 579.8,945.8 580.6,945.7 581.4,945.8 582.2,945.6 583.0,945.5 583.8,945.5 584.6,945.4 585.4,945.3 586.2,945.5 587.0,945.3 587.8,945.4 588.6,945.6 589.4,945.6 590.2,945.7 591.0,945.8 591.8,945.8 592.6,945.8 593.4,945.8 594.2,945.8 595.0,945.8 595.8,945.8 596.6,945.6 597.4,945.7 598.2,945.3 599.0,945.2 599.8,945.1 600.6,945.4 601.4,945.2 602.2,945.2 603.0,945.2 603.8,945.3 604.6,945.6 605.4,945.7 606.2,945.8 607.0,945.8 607.8,945.8 608.6,945.8 609.4,945.8 610.2,945.7 611.0,945.7 611.8,945.6 612.6,945.4 613.4,945.3 614.2,945.4 615.0,945.2 615.8,945.4 616.6,945.4 617.4,945.4 618.2,945.3 619.0,945.5 619.8,945.6 620.7,945.8 621.5,945.8 622.3,945.8 623.1,945.8 623.9,945.8 624.7,945.8 625.5,945.7 626.3,945.6 627.1,945.6 627.9,945.5 628.7,945.6 629.5,945.4 630.3,945.3 631.1,945.3 631.9,945.2 632.7,945.2 633.5,945.5 634.3,945.5 635.1,945.7 635.9,945.8 636.7,945.7 637.5,945.8 638.3,945.8 639.1,945.8 639.9,945.8 640.7,945.8 641.5,945.6 642.3,945.7 643.1,945.6 643.9,945.4 644.7,945.5 645.5,945.4 646.3,945.3 647.1,945.2 647.9,945.5 648.7,945.4 649.5,945.5 650.3,945.6 651.1,945.8 651.9,945.8 652.7,945.8 653.5,945.8 654.3,945.8 655.1,945.8 655.9,945.7 656.7,945.6 657.5,945.5 658.3,945.5 659.1,945.6 659.9,945.5 660.7,945.4 661.5,945.3 662.3,945.4 663.1,945.4 663.9,945.4 664.7,945.5 665.5,945.6 665.5,946.5 664.7,946.7 663.9,946.6 663.1,946.9 662.3,946.8 661.5,947.0 660.7,946.9 659.9,946.8 659.1,947.0 658.3,946.6 657.5,946.7 656.7,946.6 655.9,946.5 655.1,946.5 654.3,946.5 653.5,946.5 652.7,946.5 651.9,946.5 651.1,946.5 650.3,946.5 649.5,946.6 648.7,946.6 647.9,946.6 647.1,946.7 646.3,946.7 645.5,947.1 644.7,947.0 643.9,946.9 643.1,946.7 642.3,946.6 641.5,946.5 640.7,946.5 639.9,946.5 639.1,946.5 638.3,946.5 637.5,946.5 636.7,946.5 635.9,946.5 635.1,946.5 634.3,946.7 633.5,946.8 632.7,946.9 631.9,946.7 631.1,946.8 630.3,946.9 629.5,946.9 628.7,946.8 627.9,946.7 627.1,946.5 626.3,946.5 625.5,946.5 624.7,946.5 623.9,946.5 623.1,946.5 622.3,946.5 621.5,946.5 620.7,946.6 619.8,946.7 619.0,946.6 618.2,946.6 617.4,946.8 616.6,947.0 615.8,946.8 615.0,946.9 614.2,946.9 613.4,946.8 612.6,946.8 611.8,946.5 611.0,946.6 610.2,946.5 609.4,946.5 608.6,946.5 607.8,946.5 607.0,946.5 606.2,946.5 605.4,946.5 604.6,946.7 603.8,946.8 603.0,946.8 602.2,947.0 601.4,947.0 600.6,946.7 599.8,946.7 599.0,946.7 598.2,946.8 597.4,946.6 596.6,946.6 595.8,946.5 595.0,946.5 594.2,946.5 593.4,946.5 592.6,946.5 591.8,946.5 591.0,946.5 590.2,946.5 589.4,946.7 588.6,946.6 587.8,946.9 587.0,946.9 586.2,946.9 585.4,946.8 584.6,946.9 583.8,946.9 583.0,946.9 582.2,946.6 581.4,946.6 580.6,946.5 579.8,946.5 579.0,946.5 578.2,946.5 577.4,946.5 576.6,946.5 575.8,946.5 575.0,946.6" fill="#f0c750"/><polygon points="575.0,990.9 575.8,990.9 576.6,990.9 577.4,990.9 578.2,990.8 579.0,990.9 579.8,990.8 580.6,990.8 581.4,990.6 582.2,990.8 583.0,990.6 583.8,990.6 584.6,990.9 585.4,990.8 586.2,990.9 587.0,990.9 587.8,990.9 588.6,990.9 589.4,990.9 590.2,990.9 591.0,990.9 591.8,990.8 592.6,990.9 593.4,990.8 594.2,990.5 595.0,990.7 595.8,990.6 596.6,990.6 597.4,990.7 598.2,990.8 599.0,990.9 599.8,990.9 600.6,990.9 601.4,990.9 602.2,990.9 603.0,990.9 603.8,990.9 604.6,990.9 605.4,990.9 606.2,990.9 607.0,990.9 607.8,990.8 608.6,990.8 609.4,990.7 610.2,990.6 611.0,990.6 611.8,990.5 612.6,990.5 613.4,990.7 614.2,990.8 615.0,990.8 615.8,990.9 616.6,990.9 617.4,990.9 618.2,990.9 619.0,990.9 619.8,990.9 620.7,990.9 621.5,990.8 622.3,990.9 623.1,990.7 623.9,990.6 624.7,990.8 625.5,990.5 626.3,990.4 627.1,990.4 627.9,990.7 628.7,990.9 629.5,990.7 630.3,990.9 631.1,990.9 631.9,990.9 632.7,990.9 633.5,990.9 634.3,990.9 635.1,990.9 635.9,990.9 636.7,990.8 637.5,990.8 638.3,990.8 639.1,990.6 639.9,990.5 640.7,990.5 641.5,990.5 642.3,990.7 643.1,990.7 643.9,990.8 644.7,990.8 645.5,990.9 646.3,990.9 647.1,990.9 647.9,990.9 648.7,990.9 649.5,990.9 650.3,990.9 651.1,990.9 651.9,990.8 652.7,990.6 653.5,990.7 654.3,990.5 655.1,990.6 655.9,990.4 656.7,990.7 657.5,990.7 658.3,990.9 659.1,990.9 659.9,990.8 660.7,990.9 661.5,990.9 662.3,990.9 663.1,990.9 663.9,990.9 664.7,990.9 665.5,990.9 665.5,991.7 664.7,991.6 663.9,991.6 663.1,991.6 662.3,991.6 661.5,991.6 660.7,991.6 659.9,991.7 659.1,991.8 658.3,991.9 657.5,992.1 656.7,992.1 655.9,991.9 655.1,991.9 654.3,991.8 653.5,991.9 652.7,991.7 651.9,991.7 651.1,991.7 650.3,991.6 649.5,991.6 648.7,991.6 647.9,991.6 647.1,991.6 646.3,991.6 645.5,991.8 644.7,991.7 643.9,991.8 643.1,991.9 642.3,992.1 641.5,992.1 640.7,992.0 639.9,992.0 639.1,992.1 638.3,991.8 637.5,991.7 636.7,991.6 635.9,991.7 635.1,991.6 634.3,991.6 633.5,991.6 632.7,991.6 631.9,991.6 631.1,991.6 630.3,991.7 629.5,991.8 628.7,991.9 627.9,992.0 627.1,992.0 626.3,992.1 625.5,991.9 624.7,991.8 623.9,991.9 623.1,991.9 622.3,991.9 621.5,991.7 620.7,991.7 619.8,991.6 619.0,991.6 618.2,991.6 617.4,991.6 616.6,991.6 615.8,991.6 615.0,991.8 614.2,991.8 613.4,992.0 612.6,991.9 611.8,992.0 611.0,991.8 610.2,991.8 609.4,991.8 608.6,991.8 607.8,991.8 607.0,991.7 606.2,991.6 605.4,991.6 604.6,991.6 603.8,991.6 603.0,991.6 602.2,991.6 601.4,991.7 600.6,991.8 599.8,991.8 599.0,991.8 598.2,992.0 597.4,991.8 596.6,992.0 595.8,991.8 595.0,991.9 594.2,992.0 593.4,992.0 592.6,991.9 591.8,991.7 591.0,991.6 590.2,991.6 589.4,991.6 588.6,991.6 587.8,991.6 587.0,991.6 586.2,991.6 585.4,991.7 584.6,991.9 583.8,991.9 583.0,991.8 582.2,991.8 581.4,992.2 580.6,991.9 579.8,992.0 579.0,991.9 578.2,991.8 577.4,991.7 576.6,991.8 575.8,991.6 575.0,991.6" fill="#f0c750"/></g></svg>
<div class="t" style="left:341.9px;width:106.5px;text-align:center;top:762.8999999999999px;font-size:10.4px;letter-spacing:.3px;color:#141414">Atmos_Undergro...</div>
<div class="t" style="left:454.45px;width:106.5px;text-align:center;top:762.8999999999999px;font-size:10.4px;letter-spacing:.3px;color:#141414">Atmos_Undergro...</div>
<div class="t" style="left:567.0px;width:106.5px;text-align:center;top:762.8999999999999px;font-size:10.4px;letter-spacing:.3px;color:#141414">Atmos_Undergro...</div>
<div class="t" style="left:679.55px;width:106.5px;text-align:center;top:762.8999999999999px;font-size:10.4px;letter-spacing:.3px;color:#141414">Destructible_Box...</div>
<div class="t" style="left:792.0999999999999px;width:106.5px;text-align:center;top:762.8999999999999px;font-size:10.4px;letter-spacing:.3px;color:#141414">Destructible_Box...</div>
<div class="t" style="left:904.65px;width:106.5px;text-align:center;top:762.8999999999999px;font-size:10.4px;letter-spacing:.3px;color:#141414">Destructible_Box...</div>
<div class="t" style="left:1017.1999999999999px;width:106.5px;text-align:center;top:762.8999999999999px;font-size:10.4px;letter-spacing:.3px;color:#141414">Destructible_Box...</div>
<div class="t" style="left:341.9px;width:106.5px;text-align:center;top:891.1999999999999px;font-size:10.4px;letter-spacing:.3px;color:#141414">Destructible_Box...</div>
<div class="t" style="left:454.45px;width:106.5px;text-align:center;top:891.1999999999999px;font-size:10.4px;letter-spacing:.3px;color:#141414">Destructible_Box...</div>
<div class="t" style="left:567.0px;width:106.5px;text-align:center;top:891.1999999999999px;font-size:10.4px;letter-spacing:.3px;color:#141414">Destructible_Box...</div>
<div class="t" style="left:679.55px;width:106.5px;text-align:center;top:891.1999999999999px;font-size:10.4px;letter-spacing:.3px;color:#141414">Destructible_Box...</div>
<div class="t" style="left:792.0999999999999px;width:106.5px;text-align:center;top:891.1999999999999px;font-size:10.4px;letter-spacing:.3px;color:#141414">Destructible_Box...</div>
<div class="t" style="left:904.65px;width:106.5px;text-align:center;top:891.1999999999999px;font-size:10.4px;letter-spacing:.3px;color:#141414">Switch_Activated...</div>
<div class="t" style="left:1017.1999999999999px;width:106.5px;text-align:center;top:891.1999999999999px;font-size:10.4px;letter-spacing:.3px;color:#141414">Switch_Activated...</div>
<div class="a" style="left:330px;top:939.6px;width:820px;height:21px;background:#d0d0d0;border-top:1px solid #b0b0b0"></div>
<div class="a" style="left:1077px;top:949.4px;width:51px;height:1.3px;background:#7d7d7d"></div>
<div class="a" style="left:1123px;top:945px;width:10px;height:10px;border-radius:5px;background:#686868"></div>
<div class="a" style="left:1139px;top:819.8px;width:9.2px;height:77.6px;border-radius:4.6px;background:#9a9a9a"></div>
<div class="a" style="left:1140.2px;top:705px;width:7.2px;height:4.8px;background:#4a4a4a;clip-path:polygon(50% 0,100% 100%,0 100%)"></div>
<div class="a" style="left:1140.2px;top:928.6px;width:7.2px;height:4.8px;background:#4a4a4a;clip-path:polygon(0 0,100% 0,50% 100%)"></div>
<!-- add component -->
<div class="a" style="left:1258.4px;top:600px;width:237.6px;height:324.6px;background:#c8c8c8;border:1px solid #5a5a5a;box-shadow:0 5px 12px rgba(0,0,0,.38)"></div>
<div class="a" style="left:1257px;top:575px;width:239.6px;height:26.4px;background:linear-gradient(#e9e9e9,#dedede);border:2.3px solid #d93a22;border-radius:2px"></div>
<div class="t " style="left:1331.2px;top:580.9000000000001px;">Add Component</div>
<div class="a" style="left:1259.4px;top:601.4px;width:235.6px;height:25.6px;background:#cecece"></div>
<div class="a" style="left:1264px;top:606.1px;width:225.4px;height:16.7px;background:#f0f0f0;border:1px solid #55679c;border-radius:4.5px"></div>
<svg style="left:1268.6px;top:611px" width="8" height="8" viewBox="0 0 8 8"><circle cx="3" cy="3" r="2.1" fill="none" stroke="#6a6a6a" stroke-width="1"/><path d="M4.6 4.6 L7.4 7.4" stroke="#6a6a6a" stroke-width="1.2"/></svg>
<div class="a" style="left:1278.4px;top:608px;width:30.8px;height:13.4px;background:#85a3e0"></div>
<div class="t " style="left:1278.8px;top:606.8000000000001px;color:#111;letter-spacing:0;font-size:12.3px">audio</div>
<svg style="left:1477.6px;top:611.4px" width="6.4" height="6.4" viewBox="0 0 6.4 6.4"><path d="M.4 .4 L6 6M6 .4 L.4 6" stroke="#5c5c5c" stroke-width="1"/></svg>
<div class="a" style="left:1259.4px;top:626.8px;width:235.6px;height:23px;background:#d5d5d5;border-top:1px solid #b7b7b7;border-bottom:1px solid #b7b7b7"></div>
<div class="t b" style="left:1355.6px;top:630.5px;letter-spacing:.25px">Search</div>
<svg style="left:1263px;top:654.0px" width="14" height="14" viewBox="0 0 14 14"><circle cx="7.15" cy="2.1" r="2.05" fill="#d8a73d"/><circle cx="3.05" cy="7" r="2.05" fill="#d8a73d"/><circle cx="11.2" cy="7" r="2.05" fill="#d8a73d"/><path d="M0 9.7 A3.05 4.3 0 0 0 6.1 9.7 A3.05 1.3 0 0 1 0 9.7 Z" fill="#d8a73d"/><path d="M8.15 9.7 A3.05 4.3 0 0 0 14.25 9.7 A3.05 1.3 0 0 1 8.15 9.7 Z" fill="#d8a73d"/></svg>
<div class="t " style="left:1279.6px;top:653.4000000000001px;">Audio Chorus Filter</div>
<svg style="left:1263px;top:674.56px" width="14" height="14" viewBox="0 0 14 14"><path d="M1 .8 L7 7.4" stroke="#d8a73d" stroke-width="1.5" stroke-linecap="round"/><circle cx="1.1" cy=".9" r="1.15" fill="#d8a73d"/><circle cx="10.3" cy="10" r="3.4" fill="#d8a73d"/><circle cx="7.5" cy="8.3" r="2.2" fill="#d8a73d"/><circle cx="6" cy="9.6" r="1.2" fill="#d8a73d"/><circle cx="11" cy="6.2" r="1.3" fill="#d8a73d"/><path d="M9.6 11.2 L11.6 9.2" stroke="#c8c8c8" stroke-width="1.1"/></svg>
<div class="t " style="left:1279.6px;top:673.96px;">Audio Distortion Filter</div>
<svg style="left:1263px;top:695.12px" width="14" height="14" viewBox="0 0 14 14"><path d="M5.85 1.7 L.6 12.5 H11 Z" fill="none" stroke="#d8a73d" stroke-width="1.3" stroke-linejoin="round"/><path d="M3 7.8 H8.7 L11.2 12.8 H.3 Z" fill="#d8a73d"/><path d="M8.9 1.2 A10 10 0 0 1 12.2 10.8 M10.4 -.2 A12 12 0 0 1 14.3 10.6" fill="none" stroke="#d8a73d" stroke-width="1"/></svg>
<div class="t " style="left:1279.6px;top:694.5200000000001px;">Audio Echo Filter</div>
<svg style="left:1263px;top:715.68px" width="14" height="14" viewBox="0 0 14 14"><path d="M0 11.4 L6 4.1 H14" fill="none" stroke="#d8a73d" stroke-width=".9"/><path d="M3 11.4 L7.4 6.3 H14.2 V11.4 Z" fill="#d8a73d"/></svg>
<div class="t " style="left:1279.6px;top:715.08px;">Audio High Pass Filter</div>
<svg style="left:1263px;top:736.24px" width="14" height="14" viewBox="0 0 14 14"><path d="M2.2 12.4 V7 a4.95 5.1 0 0 1 9.9 0 V12.4" fill="none" stroke="#d8a73d" stroke-width="1.5"/><rect x=".9" y="6.8" width="2.7" height="6.2" rx=".5" fill="#d8a73d"/><rect x="10.8" y="6.8" width="2.7" height="6.2" rx=".5" fill="#d8a73d"/></svg>
<div class="t " style="left:1279.6px;top:735.6400000000001px;">Audio Listener</div>
<svg style="left:1263px;top:756.8px" width="14" height="14" viewBox="0 0 14 14"><path d="M.4 3.6 H9 L14.6 10.9" fill="none" stroke="#d8a73d" stroke-width=".9"/><path d="M0 6 H7.6 L13.2 10.9 H0 Z" fill="#d8a73d"/></svg>
<div class="t " style="left:1279.6px;top:756.2px;">Audio Low Pass Filter</div>
<svg style="left:1263px;top:777.36px" width="14" height="14" viewBox="0 0 14 14"><path d="M6.5 .4V4.6" stroke="#d8a73d" stroke-width="1.8"/><path d="M1.5 9.2 L6.5 4.7 L11.5 9.2" fill="none" stroke="#d8a73d" stroke-width="1.5"/><path d="M3 8.2 L6.5 5.4 L10.1 8.2 V13 H8.1 V10.8 a1.6 1.6 0 0 0 -3.2 0 V13 H3 Z" fill="#d8a73d"/><path d="M1 13.3 H12.1" stroke="#d8a73d" stroke-width="1.3"/></svg>
<div class="t " style="left:1279.6px;top:776.7600000000001px;">Audio Reverb Filter</div>
<svg style="left:1263px;top:797.92px" width="14" height="14" viewBox="0 0 14 14"><g transform="translate(.9 1.2) scale(.86)"><path d="M6.5 .4V4.6" stroke="#d8a73d" stroke-width="1.8"/><path d="M1.5 9.2 L6.5 4.7 L11.5 9.2" fill="none" stroke="#d8a73d" stroke-width="1.5"/><path d="M3 8.2 L6.5 5.4 L10.1 8.2 V13 H8.1 V10.8 a1.6 1.6 0 0 0 -3.2 0 V13 H3 Z" fill="#d8a73d"/><path d="M1 13.3 H12.1" stroke="#d8a73d" stroke-width="1.3"/></g><path d="M0 2.6 Q0 0 2.4 .2 M10.9 .2 Q13.4 0 13.4 2.6 M0 11.4 Q0 14 2.4 13.8 M10.9 13.8 Q13.4 14 13.4 11.4" fill="none" stroke="#d8a73d" stroke-width=".9" stroke-dasharray="1.6 1"/></svg>
<div class="t " style="left:1279.6px;top:797.32px;">Audio Reverb Zone</div>
<div class="a" style="left:1257.6px;top:815.03px;width:238.4px;height:20.5px;background:#5f85d8;border:2.3px solid #d93a22"></div>
<svg style="left:1263px;top:818.48px" width="14" height="14" viewBox="0 0 14 14"><rect x="2.3" y="4.1" width="2.1" height="5.8" fill="#d8a73d"/><path d="M5.7 3.6 L12.3 .5 V13 L5.7 10 Z" fill="#d8a73d"/></svg>
<div class="t w" style="left:1279.6px;top:817.8800000000001px;">Audio Source</div>
<div class="t " style="left:1279.6px;top:838.44px;">New script</div>
<svg style="left:1484.1px;top:842.24px" width="5" height="8.6" viewBox="0 -4.3 5 8.6"><path d="M0 -3.9 L4.6 0 L0 3.9" fill="none" stroke="#5e5e5e" stroke-width="1.3"/></svg>
</div></body></html>
